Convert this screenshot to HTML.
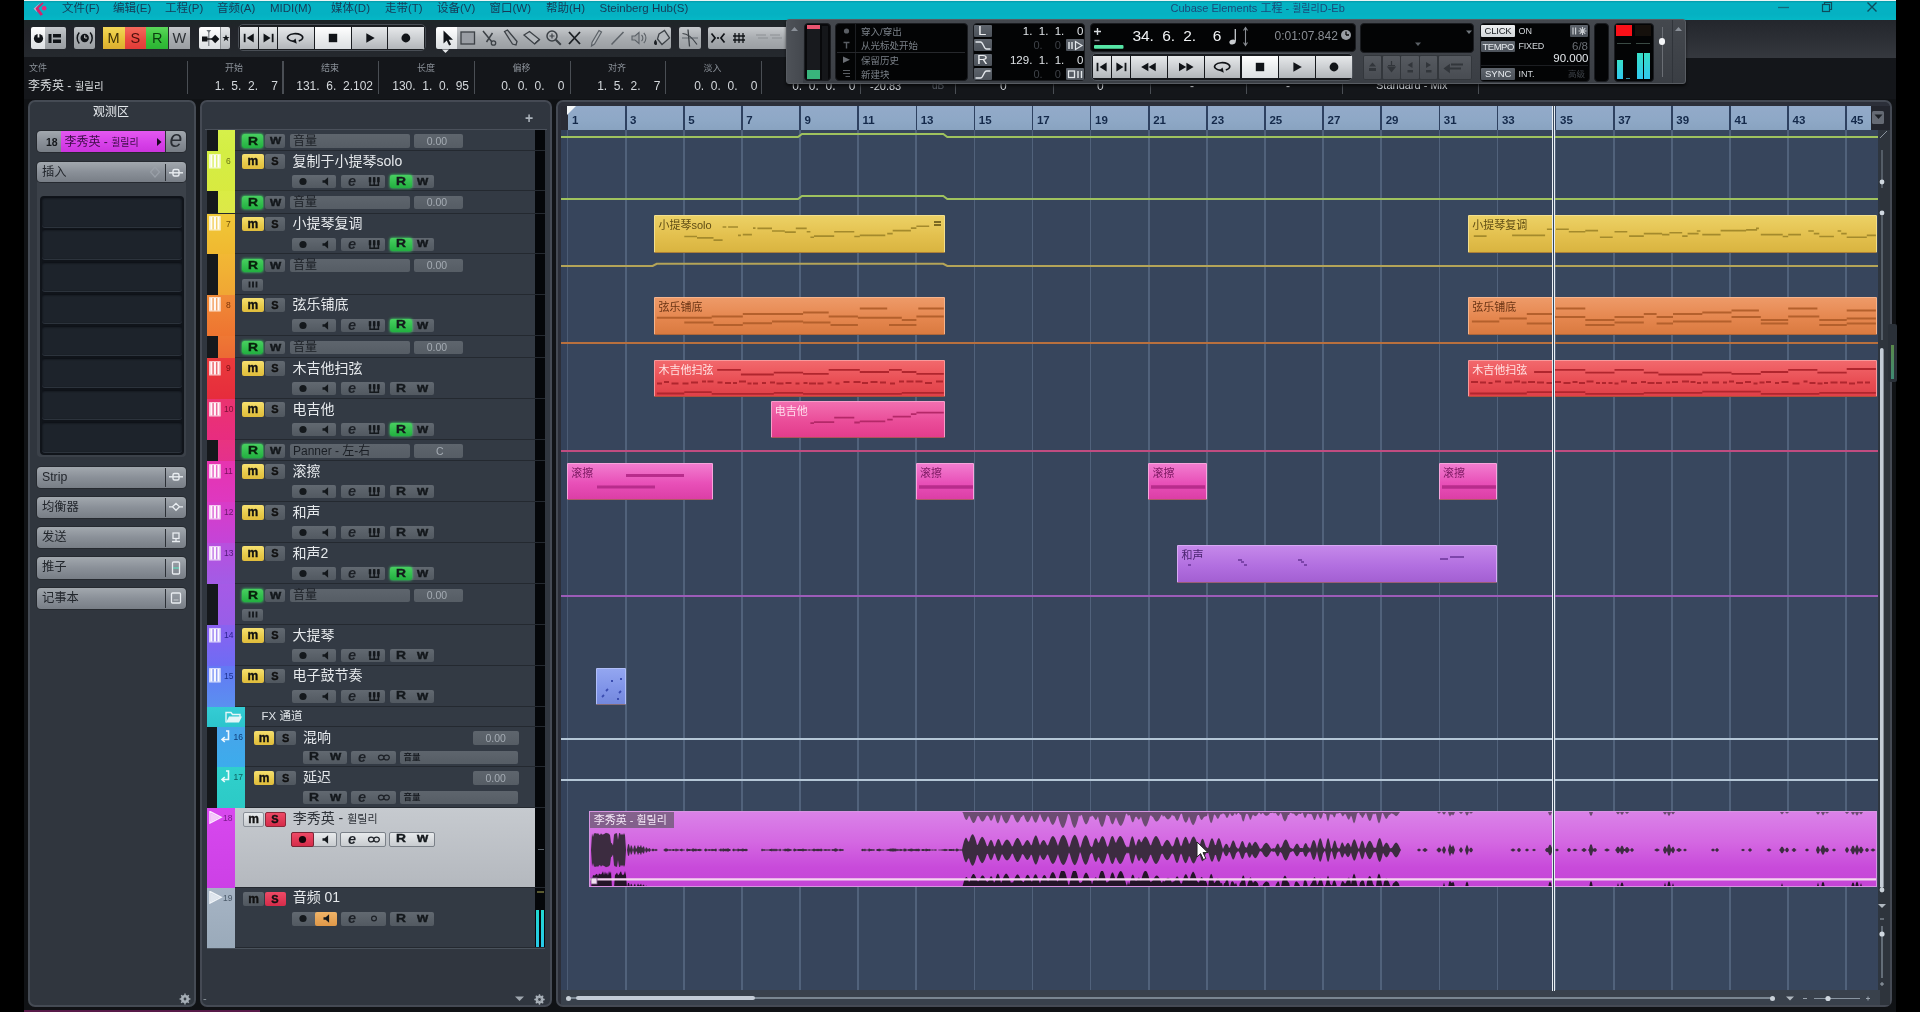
<!DOCTYPE html><html lang="zh"><head><meta charset="utf-8"><title>Cubase Elements 工程</title><style>
*{box-sizing:border-box;margin:0;padding:0}
html,body{width:1920px;height:1012px;overflow:hidden;background:#000}
body{font-family:"Liberation Sans","Noto Sans CJK SC","Noto Sans CJK KR",sans-serif;font-size:12px;color:#d8dce0;position:relative}
#app{position:absolute;left:0;top:0;width:1920px;height:1012px;overflow:hidden;filter:blur(0.45px)}
#app div,#app svg{position:absolute}
.t{white-space:nowrap;line-height:1}
.b{border-radius:2px}
</style></head><body><div id="app">
<div style="left:24px;top:0px;width:1872px;height:1012px;background:#1c1f24"></div>
<div style="left:24px;top:0px;width:1872px;height:1px;background:#e8f4f4"></div>
<div style="left:24px;top:1px;width:1872px;height:18.5px;background:linear-gradient(#049aa8 0,#05b3c4 2px,#05b1c2 70%,#05b8c6)"></div>
<div style="left:24px;top:19.5px;width:1872px;height:38px;background:linear-gradient(#1e2628,#22242a 30%,#25292e)"></div>
<div style="left:24px;top:57px;width:1872px;height:42px;background:#14161a"></div>
<div style="left:24px;top:99px;width:1872px;height:913px;background:#101215"></div>
<div style="left:555.5px;top:100px;width:1336.5px;height:906.5px;background:#2c2f39;border-radius:7px;border:2px solid #454a54"></div>
<div style="left:561px;top:105.5px;width:1319px;height:899px;background:#38475e"></div>
<div style="left:561px;top:105.5px;width:6.5px;height:24.5px;background:#2a2c36"></div>
<div style="left:561px;top:130px;width:6.5px;height:860px;background:#34425a"></div>
<div style="left:561px;top:990px;width:1319px;height:14.5px;background:#39414c"></div>
<div style="left:567.5px;top:130px;width:58.12px;height:860px;background:rgba(18,28,46,0.035)"></div>
<div style="left:683.74px;top:130px;width:58.12px;height:860px;background:rgba(18,28,46,0.035)"></div>
<div style="left:799.98px;top:130px;width:58.12px;height:860px;background:rgba(18,28,46,0.035)"></div>
<div style="left:916.22px;top:130px;width:58.12px;height:860px;background:rgba(18,28,46,0.035)"></div>
<div style="left:1032.46px;top:130px;width:58.12px;height:860px;background:rgba(18,28,46,0.035)"></div>
<div style="left:1148.7px;top:130px;width:58.12px;height:860px;background:rgba(18,28,46,0.035)"></div>
<div style="left:1264.94px;top:130px;width:58.12px;height:860px;background:rgba(18,28,46,0.035)"></div>
<div style="left:1381.18px;top:130px;width:58.12px;height:860px;background:rgba(18,28,46,0.035)"></div>
<div style="left:1497.42px;top:130px;width:58.12px;height:860px;background:rgba(18,28,46,0.035)"></div>
<div style="left:1613.66px;top:130px;width:58.12px;height:860px;background:rgba(18,28,46,0.035)"></div>
<div style="left:1729.9px;top:130px;width:58.12px;height:860px;background:rgba(18,28,46,0.035)"></div>
<div style="left:1846.14px;top:130px;width:31.86px;height:860px;background:rgba(18,28,46,0.035)"></div>
<div style="left:624.82px;top:130px;width:1.7px;height:860px;background:#51627b"></div>
<div style="left:682.94px;top:130px;width:1.7px;height:860px;background:#51627b"></div>
<div style="left:741.06px;top:130px;width:1.7px;height:860px;background:#51627b"></div>
<div style="left:799.18px;top:130px;width:1.7px;height:860px;background:#51627b"></div>
<div style="left:857.3px;top:130px;width:1.7px;height:860px;background:#51627b"></div>
<div style="left:915.42px;top:130px;width:1.7px;height:860px;background:#51627b"></div>
<div style="left:973.54px;top:130px;width:1.7px;height:860px;background:#51627b"></div>
<div style="left:1031.66px;top:130px;width:1.7px;height:860px;background:#51627b"></div>
<div style="left:1089.78px;top:130px;width:1.7px;height:860px;background:#51627b"></div>
<div style="left:1147.9px;top:130px;width:1.7px;height:860px;background:#51627b"></div>
<div style="left:1206.02px;top:130px;width:1.7px;height:860px;background:#51627b"></div>
<div style="left:1264.14px;top:130px;width:1.7px;height:860px;background:#51627b"></div>
<div style="left:1322.26px;top:130px;width:1.7px;height:860px;background:#51627b"></div>
<div style="left:1380.38px;top:130px;width:1.7px;height:860px;background:#51627b"></div>
<div style="left:1438.5px;top:130px;width:1.7px;height:860px;background:#51627b"></div>
<div style="left:1496.62px;top:130px;width:1.7px;height:860px;background:#51627b"></div>
<div style="left:1554.74px;top:130px;width:1.7px;height:860px;background:#51627b"></div>
<div style="left:1612.86px;top:130px;width:1.7px;height:860px;background:#51627b"></div>
<div style="left:1670.98px;top:130px;width:1.7px;height:860px;background:#51627b"></div>
<div style="left:1729.1px;top:130px;width:1.7px;height:860px;background:#51627b"></div>
<div style="left:1787.22px;top:130px;width:1.7px;height:860px;background:#51627b"></div>
<div style="left:1845.34px;top:130px;width:1.7px;height:860px;background:#51627b"></div>
<div style="left:567px;top:130px;width:1.4px;height:860px;background:#4c5c74"></div>
<div style="left:567.5px;top:105.5px;width:1303.5px;height:24.3px;background:linear-gradient(#93aac9,#8ea8c6 60%,#89a3c0)"></div>
<svg style="left:567px;top:105.5px" width="12" height="12"><path d="M0 0H9L0 9Z" fill="#f4f6f8"/></svg>
<div class="t" style="left:572px;top:114.5px;font-size:11.5px;font-weight:bold;color:#14294a;letter-spacing:0px">1</div>
<div style="left:624.92px;top:106px;width:1.6px;height:24px;background:#2e4160"></div>
<div class="t" style="left:630.12px;top:114.5px;font-size:11.5px;font-weight:bold;color:#14294a;letter-spacing:0px">3</div>
<div style="left:683.04px;top:106px;width:1.6px;height:24px;background:#2e4160"></div>
<div class="t" style="left:688.24px;top:114.5px;font-size:11.5px;font-weight:bold;color:#14294a;letter-spacing:0px">5</div>
<div style="left:741.16px;top:106px;width:1.6px;height:24px;background:#2e4160"></div>
<div class="t" style="left:746.36px;top:114.5px;font-size:11.5px;font-weight:bold;color:#14294a;letter-spacing:0px">7</div>
<div style="left:799.28px;top:106px;width:1.6px;height:24px;background:#2e4160"></div>
<div class="t" style="left:804.48px;top:114.5px;font-size:11.5px;font-weight:bold;color:#14294a;letter-spacing:0px">9</div>
<div style="left:857.4px;top:106px;width:1.6px;height:24px;background:#2e4160"></div>
<div class="t" style="left:862.6px;top:114.5px;font-size:11.5px;font-weight:bold;color:#14294a;letter-spacing:0px">11</div>
<div style="left:915.52px;top:106px;width:1.6px;height:24px;background:#2e4160"></div>
<div class="t" style="left:920.72px;top:114.5px;font-size:11.5px;font-weight:bold;color:#14294a;letter-spacing:0px">13</div>
<div style="left:973.64px;top:106px;width:1.6px;height:24px;background:#2e4160"></div>
<div class="t" style="left:978.84px;top:114.5px;font-size:11.5px;font-weight:bold;color:#14294a;letter-spacing:0px">15</div>
<div style="left:1031.76px;top:106px;width:1.6px;height:24px;background:#2e4160"></div>
<div class="t" style="left:1036.96px;top:114.5px;font-size:11.5px;font-weight:bold;color:#14294a;letter-spacing:0px">17</div>
<div style="left:1089.88px;top:106px;width:1.6px;height:24px;background:#2e4160"></div>
<div class="t" style="left:1095.08px;top:114.5px;font-size:11.5px;font-weight:bold;color:#14294a;letter-spacing:0px">19</div>
<div style="left:1148px;top:106px;width:1.6px;height:24px;background:#2e4160"></div>
<div class="t" style="left:1153.2px;top:114.5px;font-size:11.5px;font-weight:bold;color:#14294a;letter-spacing:0px">21</div>
<div style="left:1206.12px;top:106px;width:1.6px;height:24px;background:#2e4160"></div>
<div class="t" style="left:1211.32px;top:114.5px;font-size:11.5px;font-weight:bold;color:#14294a;letter-spacing:0px">23</div>
<div style="left:1264.24px;top:106px;width:1.6px;height:24px;background:#2e4160"></div>
<div class="t" style="left:1269.44px;top:114.5px;font-size:11.5px;font-weight:bold;color:#14294a;letter-spacing:0px">25</div>
<div style="left:1322.36px;top:106px;width:1.6px;height:24px;background:#2e4160"></div>
<div class="t" style="left:1327.56px;top:114.5px;font-size:11.5px;font-weight:bold;color:#14294a;letter-spacing:0px">27</div>
<div style="left:1380.48px;top:106px;width:1.6px;height:24px;background:#2e4160"></div>
<div class="t" style="left:1385.68px;top:114.5px;font-size:11.5px;font-weight:bold;color:#14294a;letter-spacing:0px">29</div>
<div style="left:1438.6px;top:106px;width:1.6px;height:24px;background:#2e4160"></div>
<div class="t" style="left:1443.8px;top:114.5px;font-size:11.5px;font-weight:bold;color:#14294a;letter-spacing:0px">31</div>
<div style="left:1496.72px;top:106px;width:1.6px;height:24px;background:#2e4160"></div>
<div class="t" style="left:1501.92px;top:114.5px;font-size:11.5px;font-weight:bold;color:#14294a;letter-spacing:0px">33</div>
<div style="left:1554.84px;top:106px;width:1.6px;height:24px;background:#2e4160"></div>
<div class="t" style="left:1560.04px;top:114.5px;font-size:11.5px;font-weight:bold;color:#14294a;letter-spacing:0px">35</div>
<div style="left:1612.96px;top:106px;width:1.6px;height:24px;background:#2e4160"></div>
<div class="t" style="left:1618.16px;top:114.5px;font-size:11.5px;font-weight:bold;color:#14294a;letter-spacing:0px">37</div>
<div style="left:1671.08px;top:106px;width:1.6px;height:24px;background:#2e4160"></div>
<div class="t" style="left:1676.28px;top:114.5px;font-size:11.5px;font-weight:bold;color:#14294a;letter-spacing:0px">39</div>
<div style="left:1729.2px;top:106px;width:1.6px;height:24px;background:#2e4160"></div>
<div class="t" style="left:1734.4px;top:114.5px;font-size:11.5px;font-weight:bold;color:#14294a;letter-spacing:0px">41</div>
<div style="left:1787.32px;top:106px;width:1.6px;height:24px;background:#2e4160"></div>
<div class="t" style="left:1792.52px;top:114.5px;font-size:11.5px;font-weight:bold;color:#14294a;letter-spacing:0px">43</div>
<div style="left:1845.44px;top:106px;width:1.6px;height:24px;background:#2e4160"></div>
<div class="t" style="left:1850.64px;top:114.5px;font-size:11.5px;font-weight:bold;color:#14294a;letter-spacing:0px">45</div>
<div style="left:1871px;top:105.5px;width:18.5px;height:24.5px;background:#23252d"></div>
<div style="left:1872px;top:110.5px;width:12px;height:13.5px;background:#656a74;border-radius:1.5px"></div>
<svg style="left:1873.5px;top:114px" width="10" height="7"><path d="M0.5 0.5H8.5L4.5 5Z" fill="#1c2026"/></svg>
<svg style="left:561px;top:131px" width="1317" height="12"><path d="M0 6H236.98L240.98 3H382.28L386.28 6H1317" fill="none" stroke="#9fc25e" stroke-width="2"/></svg>
<svg style="left:561px;top:193px" width="1317" height="12"><path d="M0 6H236.98L240.98 3H382.28L386.28 6H1317" fill="none" stroke="#9fc25e" stroke-width="2"/></svg>
<svg style="left:561px;top:259.5px" width="1317" height="12"><path d="M0 6H91.68L95.68 3.8H382.28L386.28 6H1317" fill="none" stroke="#b4a458" stroke-width="2"/></svg>
<div style="left:561px;top:342px;width:1317px;height:2px;background:#b8703e"></div>
<div style="left:561px;top:450px;width:1317px;height:2px;background:#c04c80"></div>
<div style="left:561px;top:594.5px;width:1317px;height:2px;background:#9c5cb8"></div>
<div style="left:561px;top:737.5px;width:1317px;height:2.4px;background:#b4c6d6"></div>
<div style="left:561px;top:778.5px;width:1317px;height:2.4px;background:#b4c6d6"></div>
<div style="left:654.28px;top:215px;width:291px;height:37.5px;background:linear-gradient(#ecd165,#e3c04e 55%,#d9b440);border:1px solid #f3df8c;border-bottom-color:rgba(120,60,20,0.55);border-radius:1px;overflow:hidden"><svg style="left:0;top:0" width="290.6" height="37.5"><path d="M29.3 20.5H42.0M42.0 21.9H58.5M58.5 24.1H67.6M67.6 11.0H71.3M73.1 11.0H83.0M83.0 19.4H85.9M87.8 18.6H96.9M98.0 12.1H100.5M102.4 12.4H117.0M117.0 15.0H129.8M129.8 16.1H140.8M140.8 12.4H151.7M151.7 15.7H155.4M155.4 21.2H159.0M159.0 20.1H179.2M179.2 15.7H199.3M199.3 20.5H204.8M204.8 19.4H230.3M232.2 17.6H237.7M237.7 14.6H255.9M255.9 12.1H261.4M261.4 10.2H274.2" stroke="#a48a2c" stroke-width="1.6" fill="none"/><path d="M279 6h7M279 9h7" stroke="#5a4a10" stroke-width="1.3"/></svg><div class="t" style="left:3.2px;top:4px;font-size:11px;color:#5e4c14">小提琴solo</div></div>
<div style="left:1467.96px;top:215px;width:409.04px;height:37.5px;background:linear-gradient(#ecd165,#e3c04e 55%,#d9b440);border:1px solid #f3df8c;border-bottom-color:rgba(120,60,20,0.55);border-radius:1px;overflow:hidden"><svg style="left:0;top:0" width="408.64" height="37.5"><path d="M4.8 20.1H17.6M43.1 19.4H76.1M77.9 13.2H85.2M87.0 13.2H99.8M99.8 15.7H116.3M116.3 14.6H129.1M130.9 21.2H143.7M145.5 15.7H158.3M160.1 20.1H174.8M174.8 17.6H193.1M193.1 18.6H200.4M200.4 16.8H213.2M213.2 20.1H218.6M218.6 17.6H229.6M227.8 15.0H231.4M233.3 18.6H251.6M251.6 14.6H277.1M277.1 13.9H288.1M287.0 12.4H289.9M291.8 18.6H313.7M313.7 20.5H319.2M319.2 18.6H332.0M339.3 15.0H344.8M344.8 17.6H350.3M350.3 20.5H364.9M368.6 15.0H372.2M372.2 17.6H377.7M377.7 21.2H397.8M397.8 19.4H406.9" stroke="#a48a2c" stroke-width="1.6" fill="none"/></svg><div class="t" style="left:3.2px;top:4px;font-size:11px;color:#5e4c14">小提琴复调</div></div>
<div style="left:654.28px;top:297px;width:291px;height:37.5px;background:linear-gradient(#ee9a68,#e5874f 55%,#da7a40);border:1px solid #f6b48c;border-bottom-color:rgba(120,60,20,0.55);border-radius:1px;overflow:hidden"><svg style="left:0;top:0" width="290.6" height="37.5"><path d="M204.8 10.6H232.2M263.3 10.6H288.8M1.8 19.7H56.7M56.7 18.6H87.8M87.8 16.1H148.1M148.1 14.6H173.7M173.7 18.6H202.9M202.9 19.7H246.8M246.8 21.9H261.4M261.4 18.6H288.8M29.3 24.5H58.5M58.5 27.1H87.8M87.8 25.2H117.0M117.0 23.4H148.1M148.1 24.5H175.5M175.5 27.1H202.9M234.0 27.1H261.4" stroke="#b4602c" stroke-width="2" fill="none"/></svg><div class="t" style="left:3.2px;top:4px;font-size:11px;color:#6a3414">弦乐铺底</div></div>
<div style="left:1467.96px;top:297px;width:409.04px;height:37.5px;background:linear-gradient(#ee9a68,#e5874f 55%,#da7a40);border:1px solid #f6b48c;border-bottom-color:rgba(120,60,20,0.55);border-radius:1px;overflow:hidden"><svg style="left:0;top:0" width="408.64" height="37.5"><path d="M87.0 10.6H116.3M262.5 12.4H289.9M319.2 10.6H348.4M377.7 12.4H406.9M2.9 23.4H30.3M30.3 20.5H57.8M57.8 16.1H83.4M83.4 19.0H116.3M116.3 21.9H145.5M145.5 19.0H174.8M174.8 16.1H187.6M187.6 19.0H204.0M204.0 16.1H233.3M233.3 14.6H262.5M262.5 19.0H291.8M291.8 21.9H319.2M319.2 18.6H350.3M350.3 21.9H377.7M377.7 20.5H406.9M57.8 25.6H83.4M116.3 27.1H145.5M145.5 24.5H174.8M187.6 25.6H204.0M204.0 23.4H262.5M291.8 25.6H319.2M350.3 27.1H377.7M377.7 25.6H406.9" stroke="#b4602c" stroke-width="2" fill="none"/></svg><div class="t" style="left:3.2px;top:4px;font-size:11px;color:#6a3414">弦乐铺底</div></div>
<div style="left:654.28px;top:359.5px;width:291px;height:37.5px;background:linear-gradient(#f2686c,#e94f55 55%,#df4048);border:1px solid #f8989a;border-bottom-color:rgba(120,60,20,0.55);border-radius:1px;overflow:hidden"><svg style="left:0;top:0" width="290.6" height="37.5"><path d="M62.2 8.8H85.9M85.9 13.5H118.8M118.8 11.7H148.1M148.1 12.8H173.7M173.7 8.8H204.8M204.8 11.0H234.0M234.0 8.8H246.8M246.8 11.0H261.4M261.4 12.8H288.8M1.8 32.5H29.3M29.3 31.1H56.7M56.7 32.9H118.8M118.8 31.8H148.1M148.1 32.9H246.8M246.8 31.8H288.8" stroke="#b0262e" stroke-width="1.8" fill="none"/><path d="M2.0 22.5h5M9.0 21.1h5M16.5 22.5h7M27.5 22.5h6M36.0 21.5h7M47.0 20.5h4M52.5 20.5h6M62.5 21.5h5M70.0 22.1h6M78.0 22.1h4M84.0 20.5h7M92.5 22.5h4M98.0 22.5h5M107.0 22.1h4M115.0 21.5h5M121.5 22.5h7M130.5 22.1h6M140.5 22.5h4M148.5 22.1h4M154.0 22.5h7M162.5 22.5h6M172.5 21.5h4M180.5 22.5h4M188.5 21.1h6M198.5 21.1h7M207.0 22.1h6M215.5 21.1h7M225.0 21.5h6M235.0 22.5h5M244.0 20.5h5M251.5 20.5h7M260.5 20.5h7M270.0 22.1h7M281.0 20.5h7" stroke="#b0262e" stroke-width="2" fill="none"/></svg><div class="t" style="left:3.2px;top:4px;font-size:11px;color:#ffe2e2">木吉他扫弦</div></div>
<div style="left:1467.96px;top:359.5px;width:409.04px;height:37.5px;background:linear-gradient(#f2686c,#e94f55 55%,#df4048);border:1px solid #f8989a;border-bottom-color:rgba(120,60,20,0.55);border-radius:1px;overflow:hidden"><svg style="left:0;top:0" width="408.64" height="37.5"><path d="M65.1 11.0H83.4M83.4 8.8H116.3M116.3 11.7H145.5M145.5 8.8H174.8M174.8 11.7H189.4M189.4 13.5H233.3M233.3 11.7H262.5M262.5 12.8H291.8M291.8 11.0H319.2M319.2 8.8H348.4M348.4 11.7H377.7M377.7 8.0H406.9M1.1 32.5H57.8M57.8 31.1H116.3M116.3 32.9H174.8M174.8 31.8H233.3M233.3 30.7H291.8M291.8 32.9H350.3M350.3 31.8H406.9" stroke="#b0262e" stroke-width="1.8" fill="none"/><path d="M2.0 21.1h7M11.0 21.5h6M19.5 22.1h4M26.0 20.5h6M36.0 21.5h7M45.0 20.5h6M52.5 21.5h5M59.0 21.1h7M68.0 21.5h7M77.5 22.1h6M86.0 21.1h6M94.5 22.1h7M103.5 21.1h5M110.0 22.1h6M117.5 20.5h7M127.0 22.1h4M133.0 22.1h4M139.5 22.1h4M145.5 22.5h4M152.0 20.5h6M162.0 22.1h6M172.0 21.1h5M178.5 22.1h7M187.0 22.1h6M197.0 21.5h4M203.0 21.1h6M213.0 20.5h7M221.5 21.1h5M228.0 22.1h4M234.0 21.5h5M243.0 21.5h7M254.0 21.5h4M260.0 20.5h5M267.0 22.1h7M276.0 21.1h6M284.5 22.5h4M290.5 21.5h5M297.0 21.1h5M306.0 22.1h4M312.5 21.1h7M323.5 22.5h7M334.5 20.5h4M340.5 22.1h6M348.5 22.5h5M355.0 22.1h4M361.5 21.5h7M371.0 21.5h7M380.0 22.5h6M388.0 21.5h6M396.0 21.5h5" stroke="#b0262e" stroke-width="2" fill="none"/></svg><div class="t" style="left:3.2px;top:4px;font-size:11px;color:#ffe2e2">木吉他扫弦</div></div>
<div style="left:770.52px;top:400.5px;width:174.76px;height:37px;background:linear-gradient(#f26fb0,#ea4d99 55%,#e23c8c);border:1px solid #f89cc8;border-bottom-color:rgba(120,60,20,0.55);border-radius:1px;overflow:hidden"><svg style="left:0;top:0" width="174.36" height="37"><path d="M38.4 21.2H42.0M42.0 20.1H62.2M62.2 15.7H82.3M82.3 20.5H87.8M87.8 19.4H113.3M115.2 17.6H120.7M120.7 14.6H138.9M138.9 12.1H144.4M144.4 10.6H171.8" stroke="#b42868" stroke-width="1.8" fill="none"/></svg><div class="t" style="left:3.2px;top:4px;font-size:11px;color:#ffe0ee">电吉他</div></div>
<div style="left:567.1px;top:462.5px;width:145.7px;height:37.5px;background:linear-gradient(#f27ccf,#e850b8 55%,#dc3ea6);border:1px solid #f8a4dc;border-bottom-color:rgba(120,60,20,0.55);border-radius:1px;overflow:hidden"><svg style="left:0;top:0" width="145.3" height="37.5"><path d="M58 11.5h58M29 23h58" stroke="#b82c8c" stroke-width="3" fill="none"/></svg><div class="t" style="left:3.2px;top:4px;font-size:11px;color:#7a1860">滚擦</div></div>
<div style="left:915.82px;top:462.5px;width:58.52px;height:37.5px;background:linear-gradient(#f27ccf,#e850b8 55%,#dc3ea6);border:1px solid #f8a4dc;border-bottom-color:rgba(120,60,20,0.55);border-radius:1px;overflow:hidden"><svg style="left:0;top:0" width="58.12" height="37.5"><path d="M2 23h54.12" stroke="#b82c8c" stroke-width="3.5" fill="none"/></svg><div class="t" style="left:3.2px;top:4px;font-size:11px;color:#7a1860">滚擦</div></div>
<div style="left:1148.3px;top:462.5px;width:58.52px;height:37.5px;background:linear-gradient(#f27ccf,#e850b8 55%,#dc3ea6);border:1px solid #f8a4dc;border-bottom-color:rgba(120,60,20,0.55);border-radius:1px;overflow:hidden"><svg style="left:0;top:0" width="58.12" height="37.5"><path d="M2 23h54.12" stroke="#b82c8c" stroke-width="3.5" fill="none"/></svg><div class="t" style="left:3.2px;top:4px;font-size:11px;color:#7a1860">滚擦</div></div>
<div style="left:1438.9px;top:462.5px;width:58.52px;height:37.5px;background:linear-gradient(#f27ccf,#e850b8 55%,#dc3ea6);border:1px solid #f8a4dc;border-bottom-color:rgba(120,60,20,0.55);border-radius:1px;overflow:hidden"><svg style="left:0;top:0" width="58.12" height="37.5"><path d="M2 23h54.12" stroke="#b82c8c" stroke-width="3.5" fill="none"/></svg><div class="t" style="left:3.2px;top:4px;font-size:11px;color:#7a1860">滚擦</div></div>
<div style="left:1177.36px;top:545px;width:320.06px;height:37.5px;background:linear-gradient(#c588ea,#b26fe0 55%,#a35fd2);border:1px solid #d8a8f4;border-bottom-color:rgba(120,60,20,0.55);border-radius:1px;overflow:hidden"><svg style="left:0;top:0" width="319.66" height="37.5"><path d="M10 19h3M60 14h4M63 16h3M66 19h3M120 14h4M123 16h3M126 19h3M262 13h8M272 11h14" stroke="#6a3498" stroke-width="1.6" fill="none"/></svg><div class="t" style="left:3.2px;top:4px;font-size:11px;color:#4a2470">和声</div></div>
<div style="left:596.16px;top:668px;width:29.46px;height:37px;background:linear-gradient(#93a6f0,#8094e8 55%,#7488dc);border:1px solid #b0bef8;border-bottom-color:rgba(120,60,20,0.55);border-radius:1px;overflow:hidden"><svg style="left:0;top:0" width="29.06" height="37"><path d="M14 12h2M23 10h2M9 22l2-2M5 28l2-2M22 24l2-2M20 30h2" stroke="#3a4cb0" stroke-width="1.8" fill="none"/></svg></div>
<div style="left:588.7px;top:810.5px;width:1288.3px;height:76px;background:linear-gradient(#da82e8,#d468e2 40%,#c84ada 75%,#c444d6);border:1px solid #d894e2;overflow:hidden"><svg style="left:0;top:0" width="1288.3" height="76"><path d="M0 38.0 1 38.0 2 21.4 3 25.1 4 21.3 5 21.5 6 20.9 7 21.9 8 20.9 9 22.4 10 23.1 11 21.3 12 22.5 13 22.4 14 22.0 15 21.6 16 20.8 17 21.2 18 21.2 19 21.9 20 23.0 21 30.8 22 31.5 23 33.4 24 22.8 25 21.6 26 21.4 27 21.1 28 28.0 29 21.2 30 21.0 31 23.3 32 21.6 33 23.3 34 21.1 35 23.2 36 38.0 37 38.0 38 32.3 39 32.3 40 37.0 41 32.9 42 34.4 43 38.0 44 34.6 45 33.1 46 37.0 47 35.8 48 32.8 49 35.3 50 34.9 51 32.8 52 36.2 53 34.8 54 34.2 55 38.0 56 35.3 57 35.7 58 37.6 59 36.0 60 36.6 61 38.0 62 37.2 63 36.4 64 37.3 65 37.4 66 36.8 67 37.5 68 38.0 69 38.0 70 38.0 71 38.0 72 38.0 73 38.0 74 37.6 75 36.6 76 36.5 77 36.5 78 37.2 79 37.6 80 37.1 81 37.4 82 37.4 83 36.9 84 37.0 85 37.7 86 36.2 87 37.4 88 36.7 89 37.9 90 37.3 91 37.0 92 36.4 93 37.7 94 37.2 95 37.9 96 38.0 97 36.3 98 37.0 99 36.9 100 36.9 101 37.4 102 36.9 103 36.3 104 36.7 105 36.9 106 36.4 107 37.4 108 37.1 109 36.9 110 36.7 111 37.2 112 37.7 113 38.0 114 38.0 115 36.7 116 36.5 117 37.5 118 37.4 119 36.9 120 37.3 121 37.5 122 36.7 123 37.3 124 37.1 125 37.2 126 36.2 127 38.0 128 38.0 129 37.6 130 37.3 131 36.2 132 37.6 133 36.2 134 36.8 135 37.0 136 36.6 137 37.0 138 36.1 139 37.0 140 37.0 141 38.0 142 38.0 143 37.0 144 36.5 145 37.8 146 37.0 147 37.7 148 36.3 149 37.3 150 37.1 151 37.2 152 36.7 153 36.6 154 37.0 155 36.9 156 36.8 157 37.1 158 38.0 159 38.0 160 38.0 161 38.0 162 38.0 163 38.0 164 38.0 165 38.0 166 38.0 167 38.0 168 38.0 169 38.0 170 38.0 171 38.0 172 36.5 173 37.4 174 36.9 175 37.6 176 37.4 177 37.6 178 37.6 179 37.6 180 37.1 181 37.1 182 36.5 183 37.4 184 36.6 185 37.6 186 36.6 187 37.4 188 37.3 189 37.7 190 36.6 191 37.6 192 38.0 193 37.3 194 37.4 195 36.5 196 37.0 197 36.7 198 36.5 199 36.8 200 37.1 201 37.3 202 37.7 203 38.0 204 36.4 205 36.7 206 37.3 207 37.6 208 37.1 209 37.1 210 37.1 211 37.1 212 37.0 213 36.4 214 37.0 215 37.2 216 37.0 217 37.5 218 37.8 219 37.1 220 37.5 221 37.5 222 37.5 223 36.9 224 36.5 225 36.9 226 37.3 227 36.8 228 37.0 229 36.7 230 37.2 231 36.5 232 37.0 233 38.0 234 37.3 235 37.2 236 37.0 237 37.6 238 37.3 239 37.2 240 37.3 241 38.0 242 37.3 243 37.1 244 37.2 245 36.3 246 36.4 247 36.8 248 37.5 249 37.5 250 36.8 251 37.1 252 37.3 253 37.1 254 38.0 255 38.0 256 38.0 257 38.0 258 38.0 259 38.0 260 38.0 261 38.0 262 38.0 263 38.0 264 38.0 265 38.0 266 38.0 267 38.0 268 38.0 269 38.0 270 38.0 271 38.0 272 37.0 273 36.7 274 37.4 275 36.6 276 37.8 277 37.2 278 37.8 279 36.3 280 36.9 281 37.2 282 36.9 283 37.6 284 37.1 285 38.0 286 38.0 287 37.1 288 37.1 289 36.7 290 36.8 291 37.5 292 37.6 293 37.6 294 37.5 295 38.0 296 37.6 297 37.4 298 36.9 299 37.3 300 36.6 301 36.8 302 36.5 303 36.6 304 36.4 305 36.7 306 36.5 307 37.6 308 36.8 309 37.8 310 36.8 311 37.3 312 37.0 313 37.9 314 36.3 315 37.0 316 36.4 317 38.0 318 36.9 319 37.2 320 36.7 321 36.7 322 36.4 323 37.2 324 37.1 325 37.3 326 36.8 327 37.0 328 36.7 329 36.8 330 37.5 331 38.0 332 37.1 333 37.0 334 36.9 335 37.6 336 36.4 337 36.9 338 37.1 339 37.2 340 36.7 341 38.0 342 37.3 343 37.7 344 37.5 345 37.6 346 37.2 347 38.0 348 38.0 349 37.4 350 37.7 351 37.4 352 37.6 353 37.2 354 37.3 355 36.8 356 37.2 357 37.1 358 38.0 359 36.9 360 36.9 361 37.0 362 37.0 363 37.2 364 36.7 365 38.0 366 36.7 367 36.5 368 37.1 369 37.4 370 37.4 371 37.3 372 37.6 373 33.1 374 29.3 375 26.7 376 25.4 377 26.7 378 29.3 379 29.8 380 26.6 381 24.1 382 22.5 383 22.3 384 23.8 385 26.1 386 29.2 387 33.1 388 32.6 389 29.7 390 27.4 391 25.7 392 24.8 393 25.3 394 26.7 395 28.8 396 31.5 397 34.3 398 34.1 399 31.0 400 28.8 401 27.8 402 28.8 403 31.0 404 34.2 405 34.6 406 31.5 407 28.8 408 27.1 409 27.3 410 29.1 411 32.0 412 34.0 413 32.7 414 30.7 415 29.1 416 28.0 417 27.4 418 27.9 419 28.9 420 30.5 421 32.4 422 34.6 423 34.1 424 31.3 425 29.0 426 27.3 427 26.1 428 26.1 429 27.2 430 28.9 431 31.1 432 33.7 433 33.7 434 32.4 435 30.4 436 28.9 437 28.0 438 28.3 439 29.5 440 31.2 441 33.5 442 32.6 443 28.8 444 25.9 445 23.9 446 23.3 447 24.8 448 27.3 449 30.7 450 33.5 451 31.1 452 29.3 453 28.2 454 28.1 455 29.2 456 30.9 457 33.2 458 33.6 459 31.0 460 28.3 461 26.1 462 24.6 463 23.9 464 24.7 465 26.3 466 28.5 467 31.2 468 34.1 469 30.7 470 27.9 471 25.6 472 23.9 473 22.9 474 23.2 475 24.6 476 26.6 477 29.1 478 32.2 479 35.5 480 33.5 481 29.9 482 27.0 483 24.7 484 23.2 485 22.8 486 24.1 487 26.1 488 28.8 489 32.2 490 35.9 491 34.0 492 30.2 493 27.2 494 24.9 495 23.4 496 23.2 497 24.6 498 26.8 499 29.7 500 33.3 501 34.4 502 35.3 503 32.8 504 29.1 505 26.7 506 25.9 507 27.6 508 30.6 509 30.8 510 27.9 511 25.7 512 24.3 513 24.2 514 25.6 515 27.8 516 30.7 517 34.3 518 34.8 519 32.1 520 28.4 521 25.6 522 23.9 523 24.3 524 26.3 525 29.4 526 31.1 527 28.5 528 26.4 529 24.8 530 23.9 531 24.2 532 25.5 533 27.3 534 29.7 535 32.5 536 33.9 537 35.6 538 34.3 539 35.6 540 30.3 541 26.5 542 24.3 543 24.8 544 27.7 545 31.9 546 34.1 547 30.6 548 28.0 549 26.7 550 28.0 551 30.6 552 29.6 553 27.3 554 25.7 555 24.6 556 24.7 557 25.9 558 27.7 559 30.0 560 32.8 561 33.5 562 30.6 563 28.1 564 26.1 565 24.6 566 23.9 567 24.5 568 25.9 569 27.8 570 30.2 571 33.2 572 34.6 573 33.7 574 31.5 575 29.7 576 28.4 577 27.7 578 28.2 579 29.3 580 30.9 581 33.0 582 34.4 583 34.3 584 32.3 585 28.6 586 26.0 587 24.8 588 26.1 589 28.8 590 32.6 591 34.4 592 32.8 593 29.3 594 26.7 595 25.0 596 24.8 597 26.4 598 28.8 599 32.1 600 31.1 601 28.3 602 26.1 603 24.7 604 24.6 605 25.9 606 27.9 607 30.6 608 34.0 609 34.7 610 32.5 611 29.1 612 26.9 613 26.8 614 28.9 615 32.2 616 34.9 617 35.4 618 36.3 619 33.3 620 29.8 621 27.3 622 26.1 623 27.3 624 29.8 625 33.3 626 32.7 627 29.2 628 26.8 629 25.9 630 27.4 631 30.2 632 34.1 633 36.9 634 34.7 635 32.8 636 31.7 637 32.1 638 33.6 639 35.9 640 35.4 641 32.8 642 29.9 643 28.3 644 29.0 645 31.2 646 34.6 647 35.8 648 36.8 649 36.2 650 33.8 651 30.8 652 29.0 653 29.3 654 31.4 655 34.7 656 35.6 657 35.6 658 32.6 659 30.6 660 30.3 661 32.1 662 34.3 663 32.3 664 30.7 665 29.8 666 30.0 667 31.2 668 32.9 669 35.1 670 36.9 671 36.5 672 35.9 673 34.1 674 32.5 675 31.4 676 30.7 677 31.0 678 31.9 679 33.3 680 35.1 681 36.5 682 37.1 683 36.1 684 36.6 685 36.2 686 34.3 687 32.1 688 31.5 689 33.1 690 36.0 691 35.6 692 34.2 693 31.4 694 29.3 695 27.8 696 27.5 697 28.6 698 30.5 699 33.0 700 35.6 701 36.1 702 36.4 703 37.1 704 35.8 705 33.7 706 32.2 707 31.5 708 32.3 709 33.9 710 36.1 711 35.9 712 35.9 713 36.3 714 33.3 715 31.4 716 31.0 717 32.6 718 35.2 719 35.6 720 36.7 721 34.2 722 30.8 723 28.5 724 27.9 725 29.6 726 32.5 727 36.7 728 31.9 729 28.2 730 26.1 731 27.0 732 30.0 733 34.5 734 36.0 735 37.2 736 33.0 737 28.2 738 25.7 739 27.4 740 31.7 741 36.6 742 36.6 743 32.6 744 29.2 745 28.3 746 30.8 747 35.1 748 35.9 749 36.8 750 35.5 751 32.2 752 30.3 753 30.9 754 33.4 755 35.0 756 32.9 757 31.4 758 30.8 759 31.6 760 33.2 761 35.5 762 31.8 763 29.0 764 27.3 765 27.8 766 30.0 767 33.3 768 36.0 769 36.9 770 33.9 771 30.5 772 28.5 773 29.4 774 32.1 775 36.4 776 35.2 777 32.5 778 30.5 779 29.1 780 28.7 781 29.8 782 31.6 783 34.0 784 36.1 785 35.4 786 36.0 787 31.9 788 28.6 789 26.4 790 26.1 791 28.0 792 31.0 793 35.3 794 33.5 795 31.8 796 30.7 797 30.8 798 32.0 799 33.8 800 36.3 801 36.3 802 35.7 803 34.3 804 32.5 805 31.2 806 30.5 807 31.0 808 32.2 809 34.0 810 36.2 811 38.0 812 38.0 813 38.0 814 38.0 815 38.0 816 38.0 817 38.0 818 38.0 819 38.0 820 38.0 821 38.0 822 38.0 823 38.0 824 38.0 825 38.0 826 38.0 827 38.0 828 36.9 829 36.5 830 36.9 831 38.0 832 38.0 833 37.4 834 36.4 835 36.0 836 36.4 837 37.4 838 38.0 839 38.0 840 38.0 841 38.0 842 38.0 843 38.0 844 38.0 845 38.0 846 38.0 847 37.5 848 36.1 849 35.5 850 36.1 851 37.5 852 38.0 853 35.5 854 34.0 855 35.5 856 38.0 857 38.0 858 38.0 859 34.4 860 31.5 861 34.4 862 34.9 863 33.0 864 34.9 865 38.0 866 38.0 867 38.0 868 38.0 869 38.0 870 36.2 871 35.0 872 36.2 873 38.0 874 38.0 875 38.0 876 34.8 877 32.5 878 34.8 879 38.0 880 36.3 881 35.5 882 36.3 883 38.0 884 38.0 885 38.0 886 38.0 887 38.0 888 38.0 889 38.0 890 38.0 891 38.0 892 38.0 893 38.0 894 38.0 895 38.0 896 38.0 897 38.0 898 38.0 899 38.0 900 38.0 901 38.0 902 38.0 903 38.0 904 38.0 905 38.0 906 38.0 907 38.0 908 38.0 909 38.0 910 38.0 911 38.0 912 38.0 913 38.0 914 38.0 915 38.0 916 38.0 917 38.0 918 38.0 919 38.0 920 38.0 921 37.7 922 36.8 923 36.5 924 36.8 925 37.7 926 38.0 927 38.0 928 36.6 929 36.0 930 36.6 931 38.0 932 38.0 933 38.0 934 38.0 935 38.0 936 36.9 937 36.5 938 36.9 939 38.0 940 38.0 941 38.0 942 38.0 943 37.3 944 36.8 945 37.3 946 38.0 947 38.0 948 38.0 949 38.0 950 38.0 951 38.0 952 38.0 953 38.0 954 38.0 955 38.0 956 36.6 957 35.8 958 36.0 959 33.5 960 32.5 961 33.5 962 36.0 963 38.0 964 38.0 965 38.0 966 37.2 967 36.5 968 37.2 969 38.0 970 38.0 971 38.0 972 38.0 973 38.0 974 38.0 975 38.0 976 38.0 977 38.0 978 36.5 979 36.0 980 36.5 981 38.0 982 38.0 983 37.7 984 37.0 985 36.8 986 37.0 987 37.7 988 38.0 989 38.0 990 38.0 991 38.0 992 37.5 993 36.4 994 36.0 995 36.4 996 37.5 997 38.0 998 38.0 999 36.8 1000 33.3 1001 32.0 1002 33.3 1003 36.8 1004 36.6 1005 36.0 1006 36.6 1007 38.0 1008 38.0 1009 38.0 1010 38.0 1011 38.0 1012 38.0 1013 38.0 1014 38.0 1015 37.6 1016 36.8 1017 36.5 1018 36.8 1019 37.6 1020 38.0 1021 38.0 1022 38.0 1023 38.0 1024 38.0 1025 38.0 1026 37.0 1027 35.2 1028 34.5 1029 35.2 1030 37.0 1031 34.5 1032 33.5 1033 34.5 1034 37.0 1035 36.9 1036 35.5 1037 35.0 1038 35.5 1039 36.9 1040 38.0 1041 36.8 1042 36.0 1043 36.8 1044 38.0 1045 38.0 1046 38.0 1047 38.0 1048 38.0 1049 38.0 1050 38.0 1051 38.0 1052 38.0 1053 38.0 1054 38.0 1055 38.0 1056 38.0 1057 38.0 1058 38.0 1059 38.0 1060 38.0 1061 38.0 1062 38.0 1063 38.0 1064 38.0 1065 37.5 1066 36.8 1067 36.5 1068 36.8 1069 37.5 1070 38.0 1071 38.0 1072 38.0 1073 38.0 1074 35.2 1075 34.0 1076 35.2 1077 37.0 1078 33.3 1079 32.0 1080 33.3 1081 37.0 1082 35.7 1083 34.5 1084 35.7 1085 38.0 1086 38.0 1087 37.3 1088 36.4 1089 36.0 1090 36.4 1091 37.3 1092 38.0 1093 38.0 1094 37.2 1095 36.5 1096 37.2 1097 38.0 1098 38.0 1099 38.0 1100 38.0 1101 38.0 1102 38.0 1103 38.0 1104 38.0 1105 38.0 1106 38.0 1107 38.0 1108 38.0 1109 38.0 1110 38.0 1111 38.0 1112 38.0 1113 38.0 1114 38.0 1115 38.0 1116 38.0 1117 38.0 1118 38.0 1119 38.0 1120 38.0 1121 38.0 1122 36.9 1123 36.5 1124 36.9 1125 38.0 1126 36.7 1127 36.0 1128 36.7 1129 38.0 1130 38.0 1131 38.0 1132 38.0 1133 38.0 1134 38.0 1135 38.0 1136 38.0 1137 38.0 1138 38.0 1139 38.0 1140 38.0 1141 38.0 1142 38.0 1143 38.0 1144 38.0 1145 38.0 1146 38.0 1147 38.0 1148 38.0 1149 38.0 1150 38.0 1151 38.0 1152 37.2 1153 36.8 1154 37.2 1155 38.0 1156 38.0 1157 38.0 1158 38.0 1159 36.7 1160 36.2 1161 36.7 1162 38.0 1163 38.0 1164 38.0 1165 38.0 1166 38.0 1167 38.0 1168 38.0 1169 38.0 1170 38.0 1171 38.0 1172 38.0 1173 38.0 1174 38.0 1175 38.0 1176 38.0 1177 37.8 1178 36.8 1179 36.5 1180 36.8 1181 37.8 1182 38.0 1183 38.0 1184 38.0 1185 38.0 1186 38.0 1187 38.0 1188 38.0 1189 38.0 1190 37.1 1191 35.2 1192 34.5 1193 35.2 1194 37.1 1195 38.0 1196 36.3 1197 35.5 1198 36.3 1199 38.0 1200 38.0 1201 38.0 1202 37.8 1203 36.5 1204 36.0 1205 36.5 1206 37.8 1207 38.0 1208 38.0 1209 38.0 1210 38.0 1211 38.0 1212 38.0 1213 38.0 1214 38.0 1215 38.0 1216 37.0 1217 36.5 1218 37.0 1219 38.0 1220 38.0 1221 38.0 1222 38.0 1223 38.0 1224 38.0 1225 38.0 1226 38.0 1227 35.3 1228 34.0 1229 35.3 1230 38.0 1231 36.4 1232 34.0 1233 33.0 1234 34.0 1235 36.4 1236 36.3 1237 35.5 1238 36.3 1239 38.0 1240 38.0 1241 38.0 1242 38.0 1243 37.1 1244 36.5 1245 37.1 1246 38.0 1247 38.0 1248 38.0 1249 38.0 1250 38.0 1251 38.0 1252 38.0 1253 38.0 1254 38.0 1255 38.0 1256 35.9 1257 35.0 1258 35.9 1259 38.0 1260 38.0 1261 37.1 1262 34.5 1263 33.5 1264 34.5 1265 37.1 1266 34.5 1267 32.5 1268 34.5 1269 37.3 1270 35.3 1271 34.5 1272 35.3 1273 37.3 1274 38.0 1275 38.0 1276 36.5 1277 36.0 1278 36.5 1279 38.0 1280 38.0 1281 37.8 1282 36.8 1283 36.5 1284 36.8 1285 37.8 1286 38.0 1287 38.0 1288 38.0 L1288 38.0 1287 38.0 1286 38.0 1285 38.2 1284 39.2 1283 39.5 1282 39.2 1281 38.2 1280 38.0 1279 38.0 1278 39.5 1277 40.0 1276 39.5 1275 38.0 1274 38.0 1273 38.7 1272 40.7 1271 41.5 1270 40.7 1269 38.7 1268 41.5 1267 43.5 1266 41.5 1265 38.9 1264 41.5 1263 42.5 1262 41.5 1261 38.9 1260 38.0 1259 38.0 1258 40.1 1257 41.0 1256 40.1 1255 38.0 1254 38.0 1253 38.0 1252 38.0 1251 38.0 1250 38.0 1249 38.0 1248 38.0 1247 38.0 1246 38.0 1245 38.9 1244 39.5 1243 38.9 1242 38.0 1241 38.0 1240 38.0 1239 38.0 1238 39.7 1237 40.5 1236 39.7 1235 39.6 1234 42.0 1233 43.0 1232 42.0 1231 39.6 1230 38.0 1229 40.7 1228 42.0 1227 40.7 1226 38.0 1225 38.0 1224 38.0 1223 38.0 1222 38.0 1221 38.0 1220 38.0 1219 38.0 1218 39.0 1217 39.5 1216 39.0 1215 38.0 1214 38.0 1213 38.0 1212 38.0 1211 38.0 1210 38.0 1209 38.0 1208 38.0 1207 38.0 1206 38.2 1205 39.5 1204 40.0 1203 39.5 1202 38.2 1201 38.0 1200 38.0 1199 38.0 1198 39.7 1197 40.5 1196 39.7 1195 38.0 1194 38.9 1193 40.8 1192 41.5 1191 40.8 1190 38.9 1189 38.0 1188 38.0 1187 38.0 1186 38.0 1185 38.0 1184 38.0 1183 38.0 1182 38.0 1181 38.2 1180 39.2 1179 39.5 1178 39.2 1177 38.2 1176 38.0 1175 38.0 1174 38.0 1173 38.0 1172 38.0 1171 38.0 1170 38.0 1169 38.0 1168 38.0 1167 38.0 1166 38.0 1165 38.0 1164 38.0 1163 38.0 1162 38.0 1161 39.3 1160 39.8 1159 39.3 1158 38.0 1157 38.0 1156 38.0 1155 38.0 1154 38.8 1153 39.2 1152 38.8 1151 38.0 1150 38.0 1149 38.0 1148 38.0 1147 38.0 1146 38.0 1145 38.0 1144 38.0 1143 38.0 1142 38.0 1141 38.0 1140 38.0 1139 38.0 1138 38.0 1137 38.0 1136 38.0 1135 38.0 1134 38.0 1133 38.0 1132 38.0 1131 38.0 1130 38.0 1129 38.0 1128 39.3 1127 40.0 1126 39.3 1125 38.0 1124 39.1 1123 39.5 1122 39.1 1121 38.0 1120 38.0 1119 38.0 1118 38.0 1117 38.0 1116 38.0 1115 38.0 1114 38.0 1113 38.0 1112 38.0 1111 38.0 1110 38.0 1109 38.0 1108 38.0 1107 38.0 1106 38.0 1105 38.0 1104 38.0 1103 38.0 1102 38.0 1101 38.0 1100 38.0 1099 38.0 1098 38.0 1097 38.0 1096 38.8 1095 39.5 1094 38.8 1093 38.0 1092 38.0 1091 38.7 1090 39.6 1089 40.0 1088 39.6 1087 38.7 1086 38.0 1085 38.0 1084 40.3 1083 41.5 1082 40.3 1081 39.0 1080 42.7 1079 44.0 1078 42.7 1077 39.0 1076 40.8 1075 42.0 1074 40.8 1073 38.0 1072 38.0 1071 38.0 1070 38.0 1069 38.5 1068 39.2 1067 39.5 1066 39.2 1065 38.5 1064 38.0 1063 38.0 1062 38.0 1061 38.0 1060 38.0 1059 38.0 1058 38.0 1057 38.0 1056 38.0 1055 38.0 1054 38.0 1053 38.0 1052 38.0 1051 38.0 1050 38.0 1049 38.0 1048 38.0 1047 38.0 1046 38.0 1045 38.0 1044 38.0 1043 39.2 1042 40.0 1041 39.2 1040 38.0 1039 39.1 1038 40.5 1037 41.0 1036 40.5 1035 39.1 1034 39.0 1033 41.5 1032 42.5 1031 41.5 1030 39.0 1029 40.8 1028 41.5 1027 40.8 1026 39.0 1025 38.0 1024 38.0 1023 38.0 1022 38.0 1021 38.0 1020 38.0 1019 38.4 1018 39.2 1017 39.5 1016 39.2 1015 38.4 1014 38.0 1013 38.0 1012 38.0 1011 38.0 1010 38.0 1009 38.0 1008 38.0 1007 38.0 1006 39.4 1005 40.0 1004 39.4 1003 39.2 1002 42.7 1001 44.0 1000 42.7 999 39.2 998 38.0 997 38.0 996 38.5 995 39.6 994 40.0 993 39.6 992 38.5 991 38.0 990 38.0 989 38.0 988 38.0 987 38.3 986 39.0 985 39.2 984 39.0 983 38.3 982 38.0 981 38.0 980 39.5 979 40.0 978 39.5 977 38.0 976 38.0 975 38.0 974 38.0 973 38.0 972 38.0 971 38.0 970 38.0 969 38.0 968 38.8 967 39.5 966 38.8 965 38.0 964 38.0 963 38.0 962 40.0 961 42.5 960 43.5 959 42.5 958 40.0 957 40.2 956 39.4 955 38.0 954 38.0 953 38.0 952 38.0 951 38.0 950 38.0 949 38.0 948 38.0 947 38.0 946 38.0 945 38.7 944 39.2 943 38.7 942 38.0 941 38.0 940 38.0 939 38.0 938 39.1 937 39.5 936 39.1 935 38.0 934 38.0 933 38.0 932 38.0 931 38.0 930 39.4 929 40.0 928 39.4 927 38.0 926 38.0 925 38.3 924 39.2 923 39.5 922 39.2 921 38.3 920 38.0 919 38.0 918 38.0 917 38.0 916 38.0 915 38.0 914 38.0 913 38.0 912 38.0 911 38.0 910 38.0 909 38.0 908 38.0 907 38.0 906 38.0 905 38.0 904 38.0 903 38.0 902 38.0 901 38.0 900 38.0 899 38.0 898 38.0 897 38.0 896 38.0 895 38.0 894 38.0 893 38.0 892 38.0 891 38.0 890 38.0 889 38.0 888 38.0 887 38.0 886 38.0 885 38.0 884 38.0 883 38.0 882 39.7 881 40.5 880 39.7 879 38.0 878 41.2 877 43.5 876 41.2 875 38.0 874 38.0 873 38.0 872 39.8 871 41.0 870 39.8 869 38.0 868 38.0 867 38.0 866 38.0 865 38.0 864 41.1 863 43.0 862 41.1 861 41.6 860 44.5 859 41.6 858 38.0 857 38.0 856 38.0 855 40.5 854 42.0 853 40.5 852 38.0 851 38.5 850 39.9 849 40.5 848 39.9 847 38.5 846 38.0 845 38.0 844 38.0 843 38.0 842 38.0 841 38.0 840 38.0 839 38.0 838 38.0 837 38.6 836 39.6 835 40.0 834 39.6 833 38.6 832 38.0 831 38.0 830 39.1 829 39.5 828 39.1 827 38.0 826 38.0 825 38.0 824 38.0 823 38.0 822 38.0 821 38.0 820 38.0 819 38.0 818 38.0 817 38.0 816 38.0 815 38.0 814 38.0 813 38.0 812 38.0 811 38.0 810 39.8 809 42.0 808 43.8 807 45.0 806 45.5 805 44.8 804 43.5 803 41.7 802 40.3 801 39.7 800 39.7 799 42.2 798 44.0 797 45.2 796 45.3 795 44.2 794 42.5 793 40.7 792 45.0 791 48.0 790 49.9 789 49.6 788 47.4 787 44.1 786 40.0 785 40.6 784 39.9 783 42.0 782 44.4 781 46.2 780 47.3 779 46.9 778 45.5 777 43.5 776 40.8 775 39.6 774 43.9 773 46.6 772 47.5 771 45.5 770 42.1 769 39.1 768 40.0 767 42.7 766 46.0 765 48.2 764 48.7 763 47.0 762 44.2 761 40.5 760 42.8 759 44.4 758 45.2 757 44.6 756 43.1 755 41.0 754 42.6 753 45.1 752 45.7 751 43.8 750 40.5 749 39.2 748 40.1 747 40.9 746 45.2 745 47.7 744 46.8 743 43.4 742 39.4 741 39.4 740 44.3 739 48.6 738 50.3 737 47.8 736 43.0 735 38.8 734 40.0 733 41.5 732 46.0 731 49.0 730 49.9 729 47.8 728 44.1 727 39.3 726 43.5 725 46.4 724 48.1 723 47.5 722 45.2 721 41.8 720 39.3 719 40.4 718 40.8 717 43.4 716 45.0 715 44.6 714 42.7 713 39.7 712 40.1 711 40.1 710 39.9 709 42.1 708 43.7 707 44.5 706 43.8 705 42.3 704 40.2 703 38.9 702 39.6 701 39.9 700 40.4 699 43.0 698 45.5 697 47.4 696 48.5 695 48.2 694 46.7 693 44.6 692 41.8 691 40.4 690 40.0 689 42.9 688 44.5 687 43.9 686 41.7 685 39.8 684 39.4 683 39.9 682 38.9 681 39.5 680 40.9 679 42.7 678 44.1 677 45.0 676 45.3 675 44.6 674 43.5 673 41.9 672 40.1 671 39.5 670 39.1 669 40.9 668 43.1 667 44.8 666 46.0 665 46.2 664 45.3 663 43.7 662 41.7 661 43.9 660 45.7 659 45.4 658 43.4 657 40.4 656 40.4 655 41.3 654 44.6 653 46.7 652 47.0 651 45.2 650 42.2 649 39.8 648 39.2 647 40.2 646 41.4 645 44.8 644 47.0 643 47.7 642 46.1 641 43.2 640 40.6 639 40.1 638 42.4 637 43.9 636 44.3 635 43.2 634 41.3 633 39.1 632 41.9 631 45.8 630 48.6 629 50.1 628 49.2 627 46.8 626 43.3 625 42.7 624 46.2 623 48.7 622 49.9 621 48.7 620 46.2 619 42.7 618 39.7 617 40.6 616 41.1 615 43.8 614 47.1 613 49.2 612 49.1 611 46.9 610 43.5 609 41.3 608 42.0 607 45.4 606 48.1 605 50.1 604 51.4 603 51.3 602 49.9 601 47.7 600 44.9 599 43.9 598 47.2 597 49.6 596 51.2 595 51.0 594 49.3 593 46.7 592 43.2 591 41.6 590 43.4 589 47.2 588 49.9 587 51.2 586 50.0 585 47.4 584 43.7 583 41.7 582 41.6 581 43.0 580 45.1 579 46.7 578 47.8 577 48.3 576 47.6 575 46.3 574 44.5 573 42.3 572 41.4 571 42.8 570 45.8 569 48.2 568 50.1 567 51.5 566 52.1 565 51.4 564 49.9 563 47.9 562 45.4 561 42.5 560 43.2 559 46.0 558 48.3 557 50.1 556 51.3 555 51.4 554 50.3 553 48.7 552 46.4 551 45.4 550 48.0 549 49.3 548 48.0 547 45.4 546 41.9 545 44.1 544 48.3 543 51.2 542 51.7 541 49.5 540 45.7 539 40.4 538 41.7 537 40.4 536 42.1 535 43.5 534 46.3 533 48.7 532 50.5 531 51.8 530 52.1 529 51.2 528 49.6 527 47.5 526 44.9 525 46.6 524 49.7 523 51.7 522 52.1 521 50.4 520 47.6 519 43.9 518 41.2 517 41.7 516 45.3 515 48.2 514 50.4 513 51.8 512 51.7 511 50.3 510 48.1 509 45.2 508 45.4 507 48.4 506 50.1 505 49.3 504 46.9 503 43.2 502 40.7 501 41.6 500 42.7 499 46.3 498 49.2 497 51.4 496 52.8 495 52.6 494 51.1 493 48.8 492 45.8 491 42.0 490 40.1 489 43.8 488 47.2 487 49.9 486 51.9 485 53.2 484 52.8 483 51.3 482 49.0 481 46.1 480 42.5 479 40.5 478 43.8 477 46.9 476 49.4 475 51.4 474 52.8 473 53.1 472 52.1 471 50.4 470 48.1 469 45.3 468 41.9 467 44.8 466 47.5 465 49.7 464 51.3 463 52.1 462 51.4 461 49.9 460 47.7 459 45.0 458 42.4 457 42.8 456 45.1 455 46.8 454 47.9 453 47.8 452 46.7 451 44.9 450 42.5 449 45.3 448 48.7 447 51.2 446 52.7 445 52.1 444 50.1 443 47.2 442 43.4 441 42.5 440 44.8 439 46.5 438 47.7 437 48.0 436 47.1 435 45.6 434 43.6 433 42.3 432 42.3 431 44.9 430 47.1 429 48.8 428 49.9 427 49.9 426 48.7 425 47.0 424 44.7 423 41.9 422 41.4 421 43.6 420 45.5 419 47.1 418 48.1 417 48.6 416 48.0 415 46.9 414 45.3 413 43.3 412 42.0 411 44.0 410 46.9 409 48.7 408 48.9 407 47.2 406 44.5 405 41.4 404 41.8 403 45.0 402 47.2 401 48.2 400 47.2 399 45.0 398 41.9 397 41.7 396 44.5 395 47.2 394 49.3 393 50.7 392 51.2 391 50.3 390 48.6 389 46.3 388 43.4 387 42.9 386 46.8 385 49.9 384 52.2 383 53.7 382 53.5 381 51.9 380 49.4 379 46.2 378 46.7 377 49.3 376 50.6 375 49.3 374 46.7 373 42.9 372 38.4 371 38.7 370 38.6 369 38.6 368 38.9 367 39.5 366 39.3 365 38.0 364 39.3 363 38.8 362 39.0 361 39.0 360 39.1 359 39.1 358 38.0 357 38.9 356 38.8 355 39.2 354 38.7 353 38.8 352 38.4 351 38.6 350 38.3 349 38.6 348 38.0 347 38.0 346 38.8 345 38.4 344 38.5 343 38.3 342 38.7 341 38.0 340 39.3 339 38.8 338 38.9 337 39.1 336 39.6 335 38.4 334 39.1 333 39.0 332 38.9 331 38.0 330 38.5 329 39.2 328 39.3 327 39.0 326 39.2 325 38.7 324 38.9 323 38.8 322 39.6 321 39.3 320 39.3 319 38.8 318 39.1 317 38.0 316 39.6 315 39.0 314 39.7 313 38.1 312 39.0 311 38.7 310 39.2 309 38.2 308 39.2 307 38.4 306 39.5 305 39.3 304 39.6 303 39.4 302 39.5 301 39.2 300 39.4 299 38.7 298 39.1 297 38.6 296 38.4 295 38.0 294 38.5 293 38.4 292 38.4 291 38.5 290 39.2 289 39.3 288 38.9 287 38.9 286 38.0 285 38.0 284 38.9 283 38.4 282 39.1 281 38.8 280 39.1 279 39.7 278 38.2 277 38.8 276 38.2 275 39.4 274 38.6 273 39.3 272 39.0 271 38.0 270 38.0 269 38.0 268 38.0 267 38.0 266 38.0 265 38.0 264 38.0 263 38.0 262 38.0 261 38.0 260 38.0 259 38.0 258 38.0 257 38.0 256 38.0 255 38.0 254 38.0 253 38.9 252 38.7 251 38.9 250 39.2 249 38.5 248 38.5 247 39.2 246 39.6 245 39.7 244 38.8 243 38.9 242 38.7 241 38.0 240 38.7 239 38.8 238 38.7 237 38.4 236 39.0 235 38.8 234 38.7 233 38.0 232 39.0 231 39.5 230 38.8 229 39.3 228 39.0 227 39.2 226 38.7 225 39.1 224 39.5 223 39.1 222 38.5 221 38.5 220 38.5 219 38.9 218 38.2 217 38.5 216 39.0 215 38.8 214 39.0 213 39.6 212 39.0 211 38.9 210 38.9 209 38.9 208 38.9 207 38.4 206 38.7 205 39.3 204 39.6 203 38.0 202 38.3 201 38.7 200 38.9 199 39.2 198 39.5 197 39.3 196 39.0 195 39.5 194 38.6 193 38.7 192 38.0 191 38.4 190 39.4 189 38.3 188 38.7 187 38.6 186 39.4 185 38.4 184 39.4 183 38.6 182 39.5 181 38.9 180 38.9 179 38.4 178 38.4 177 38.4 176 38.6 175 38.4 174 39.1 173 38.6 172 39.5 171 38.0 170 38.0 169 38.0 168 38.0 167 38.0 166 38.0 165 38.0 164 38.0 163 38.0 162 38.0 161 38.0 160 38.0 159 38.0 158 38.0 157 38.9 156 39.2 155 39.1 154 39.0 153 39.4 152 39.3 151 38.8 150 38.9 149 38.7 148 39.7 147 38.3 146 39.0 145 38.2 144 39.5 143 39.0 142 38.0 141 38.0 140 39.0 139 39.0 138 39.9 137 39.0 136 39.4 135 39.0 134 39.2 133 39.8 132 38.4 131 39.8 130 38.7 129 38.4 128 38.0 127 38.0 126 39.8 125 38.8 124 38.9 123 38.7 122 39.3 121 38.5 120 38.7 119 39.1 118 38.6 117 38.5 116 39.5 115 39.3 114 38.0 113 38.0 112 38.3 111 38.8 110 39.3 109 39.1 108 38.9 107 38.6 106 39.6 105 39.1 104 39.3 103 39.7 102 39.1 101 38.6 100 39.1 99 39.1 98 39.0 97 39.7 96 38.0 95 38.1 94 38.8 93 38.3 92 39.6 91 39.0 90 38.7 89 38.1 88 39.3 87 38.6 86 39.8 85 38.3 84 39.0 83 39.1 82 38.6 81 38.6 80 38.9 79 38.4 78 38.8 77 39.5 76 39.5 75 39.4 74 38.4 73 38.0 72 38.0 71 38.0 70 38.0 69 38.0 68 38.0 67 38.5 66 39.2 65 38.6 64 38.7 63 39.6 62 38.8 61 38.0 60 39.4 59 40.0 58 38.4 57 40.3 56 40.7 55 38.0 54 41.8 53 41.2 52 39.8 51 43.2 50 41.1 49 40.7 48 43.2 47 40.2 46 39.0 45 42.9 44 41.4 43 38.0 42 41.6 41 43.1 40 39.0 39 43.7 38 43.7 37 38.0 36 38.0 35 52.8 34 54.9 33 52.7 32 54.4 31 52.7 30 55.0 29 54.8 28 48.0 27 54.9 26 54.6 25 54.4 24 53.2 23 42.6 22 44.5 21 45.2 20 53.0 19 54.1 18 54.8 17 54.8 16 55.2 15 54.4 14 54.0 13 53.6 12 53.5 11 54.7 10 52.9 9 53.6 8 55.1 7 54.1 6 55.1 5 54.5 4 54.7 3 50.9 2 54.6 1 38.0 0 38.0Z" fill="#3c2c40"/><path d="M0 0 L0 0.0 L1 0.0 L2 0.0 L3 0.0 L4 0.0 L5 0.0 L6 0.0 L7 0.0 L8 0.0 L9 0.0 L10 0.0 L11 0.0 L12 0.0 L13 0.0 L14 0.0 L15 0.0 L16 0.0 L17 0.0 L18 0.0 L19 0.0 L20 0.0 L21 0.0 L22 0.0 L23 0.0 L24 0.0 L25 0.0 L26 0.0 L27 0.0 L28 0.0 L29 0.0 L30 0.0 L31 0.0 L32 0.0 L33 0.0 L34 0.0 L35 0.0 L36 0.0 L37 0.0 L38 0.0 L39 0.0 L40 0.0 L41 0.0 L42 0.0 L43 0.0 L44 0.0 L45 0.0 L46 0.0 L47 0.0 L48 0.0 L49 0.0 L50 0.0 L51 0.0 L52 0.0 L53 0.0 L54 0.0 L55 0.0 L56 0.0 L57 0.0 L58 0.0 L59 0.0 L60 0.0 L61 0.0 L62 0.0 L63 0.0 L64 0.0 L65 0.0 L66 0.0 L67 0.0 L68 0.0 L69 0.0 L70 0.0 L71 0.0 L72 0.0 L73 0.0 L74 0.0 L75 0.0 L76 0.0 L77 0.0 L78 0.0 L79 0.0 L80 0.0 L81 0.0 L82 0.0 L83 0.0 L84 0.0 L85 0.0 L86 0.0 L87 0.0 L88 0.0 L89 0.0 L90 0.0 L91 0.0 L92 0.0 L93 0.0 L94 0.0 L95 0.0 L96 0.0 L97 0.0 L98 0.0 L99 0.0 L100 0.0 L101 0.0 L102 0.0 L103 0.0 L104 0.0 L105 0.0 L106 0.0 L107 0.0 L108 0.0 L109 0.0 L110 0.0 L111 0.0 L112 0.0 L113 0.0 L114 0.0 L115 0.0 L116 0.0 L117 0.0 L118 0.0 L119 0.0 L120 0.0 L121 0.0 L122 0.0 L123 0.0 L124 0.0 L125 0.0 L126 0.0 L127 0.0 L128 0.0 L129 0.0 L130 0.0 L131 0.0 L132 0.0 L133 0.0 L134 0.0 L135 0.0 L136 0.0 L137 0.0 L138 0.0 L139 0.0 L140 0.0 L141 0.0 L142 0.0 L143 0.0 L144 0.0 L145 0.0 L146 0.0 L147 0.0 L148 0.0 L149 0.0 L150 0.0 L151 0.0 L152 0.0 L153 0.0 L154 0.0 L155 0.0 L156 0.0 L157 0.0 L158 0.0 L159 0.0 L160 0.0 L161 0.0 L162 0.0 L163 0.0 L164 0.0 L165 0.0 L166 0.0 L167 0.0 L168 0.0 L169 0.0 L170 0.0 L171 0.0 L172 0.0 L173 0.0 L174 0.0 L175 0.0 L176 0.0 L177 0.0 L178 0.0 L179 0.0 L180 0.0 L181 0.0 L182 0.0 L183 0.0 L184 0.0 L185 0.0 L186 0.0 L187 0.0 L188 0.0 L189 0.0 L190 0.0 L191 0.0 L192 0.0 L193 0.0 L194 0.0 L195 0.0 L196 0.0 L197 0.0 L198 0.0 L199 0.0 L200 0.0 L201 0.0 L202 0.0 L203 0.0 L204 0.0 L205 0.0 L206 0.0 L207 0.0 L208 0.0 L209 0.0 L210 0.0 L211 0.0 L212 0.0 L213 0.0 L214 0.0 L215 0.0 L216 0.0 L217 0.0 L218 0.0 L219 0.0 L220 0.0 L221 0.0 L222 0.0 L223 0.0 L224 0.0 L225 0.0 L226 0.0 L227 0.0 L228 0.0 L229 0.0 L230 0.0 L231 0.0 L232 0.0 L233 0.0 L234 0.0 L235 0.0 L236 0.0 L237 0.0 L238 0.0 L239 0.0 L240 0.0 L241 0.0 L242 0.0 L243 0.0 L244 0.0 L245 0.0 L246 0.0 L247 0.0 L248 0.0 L249 0.0 L250 0.0 L251 0.0 L252 0.0 L253 0.0 L254 0.0 L255 0.0 L256 0.0 L257 0.0 L258 0.0 L259 0.0 L260 0.0 L261 0.0 L262 0.0 L263 0.0 L264 0.0 L265 0.0 L266 0.0 L267 0.0 L268 0.0 L269 0.0 L270 0.0 L271 0.0 L272 0.0 L273 0.0 L274 0.0 L275 0.0 L276 0.0 L277 0.0 L278 0.0 L279 0.0 L280 0.0 L281 0.0 L282 0.0 L283 0.0 L284 0.0 L285 0.0 L286 0.0 L287 0.0 L288 0.0 L289 0.0 L290 0.0 L291 0.0 L292 0.0 L293 0.0 L294 0.0 L295 0.0 L296 0.0 L297 0.0 L298 0.0 L299 0.0 L300 0.0 L301 0.0 L302 0.0 L303 0.0 L304 0.0 L305 0.0 L306 0.0 L307 0.0 L308 0.0 L309 0.0 L310 0.0 L311 0.0 L312 0.0 L313 0.0 L314 0.0 L315 0.0 L316 0.0 L317 0.0 L318 0.0 L319 0.0 L320 0.0 L321 0.0 L322 0.0 L323 0.0 L324 0.0 L325 0.0 L326 0.0 L327 0.0 L328 0.0 L329 0.0 L330 0.0 L331 0.0 L332 0.0 L333 0.0 L334 0.0 L335 0.0 L336 0.0 L337 0.0 L338 0.0 L339 0.0 L340 0.0 L341 0.0 L342 0.0 L343 0.0 L344 0.0 L345 0.0 L346 0.0 L347 0.0 L348 0.0 L349 0.0 L350 0.0 L351 0.0 L352 0.0 L353 0.0 L354 0.0 L355 0.0 L356 0.0 L357 0.0 L358 0.0 L359 0.0 L360 0.0 L361 0.0 L362 0.0 L363 0.0 L364 0.0 L365 0.0 L366 0.0 L367 0.0 L368 0.0 L369 0.0 L370 0.0 L371 0.0 L372 0.0 L373 0.8 L374 4.2 L375 6.6 L376 8.1 L377 7.8 L378 6.1 L379 3.5 L380 4.9 L381 7.5 L382 9.6 L383 10.9 L384 10.9 L385 9.7 L386 7.7 L387 5.0 L388 3.8 L389 4.5 L390 6.7 L391 8.4 L392 9.5 L393 9.6 L394 8.5 L395 6.9 L396 4.8 L397 3.5 L398 3.7 L399 5.3 L400 7.7 L401 9.0 L402 8.1 L403 5.9 L404 2.6 L405 4.0 L406 7.9 L407 10.5 L408 11.4 L409 9.8 L410 6.8 L411 2.5 L412 4.3 L413 6.9 L414 9.0 L415 10.5 L416 11.4 L417 11.0 L418 9.7 L419 7.8 L420 5.4 L421 2.4 L422 3.2 L423 2.5 L424 5.2 L425 7.5 L426 9.3 L427 10.5 L428 10.4 L429 9.3 L430 7.4 L431 5.0 L432 4.8 L433 3.0 L434 3.6 L435 6.4 L436 8.5 L437 10.0 L438 10.3 L439 9.1 L440 7.3 L441 4.7 L442 3.5 L443 6.6 L444 9.0 L445 10.6 L446 10.7 L447 9.2 L448 6.8 L449 4.3 L450 1.8 L451 4.6 L452 6.8 L453 8.8 L454 10.1 L455 9.8 L456 8.3 L457 6.1 L458 3.9 L459 5.8 L460 8.7 L461 10.9 L462 12.4 L463 12.9 L464 11.8 L465 10.0 L466 7.5 L467 4.3 L468 3.9 L469 8.0 L470 11.2 L471 13.7 L472 15.5 L473 16.1 L474 14.9 L475 12.8 L476 9.9 L477 6.4 L478 1.9 L479 2.3 L480 4.0 L481 7.8 L482 11.4 L483 14.1 L484 15.8 L485 15.7 L486 14.0 L487 11.3 L488 7.7 L489 3.2 L490 4.8 L491 2.8 L492 3.4 L493 6.8 L494 9.5 L495 11.4 L496 12.4 L497 11.7 L498 10.0 L499 7.5 L500 4.3 L501 5.0 L502 3.4 L503 4.2 L504 5.6 L505 7.4 L506 7.9 L507 6.5 L508 4.2 L509 8.4 L510 11.7 L511 14.0 L512 15.1 L513 14.0 L514 11.6 L515 8.3 L516 4.1 L517 2.6 L518 4.0 L519 3.9 L520 7.3 L521 10.4 L522 12.3 L523 12.3 L524 10.3 L525 7.2 L526 5.0 L527 7.4 L528 10.1 L529 12.2 L530 13.6 L531 13.9 L532 12.8 L533 10.9 L534 8.4 L535 5.2 L536 1.8 L537 1.8 L538 4.0 L539 2.9 L540 3.6 L541 7.0 L542 9.7 L543 10.6 L544 8.8 L545 5.5 L546 4.4 L547 5.3 L548 7.2 L549 7.7 L550 6.4 L551 4.4 L552 8.1 L553 10.9 L554 13.1 L555 14.5 L556 14.4 L557 12.9 L558 10.6 L559 7.6 L560 4.0 L561 3.3 L562 4.4 L563 5.0 L564 6.9 L565 8.4 L566 9.4 L567 9.6 L568 8.8 L569 7.5 L570 5.8 L571 3.6 L572 2.4 L573 5.0 L574 3.6 L575 4.4 L576 5.9 L577 6.9 L578 7.4 L579 6.9 L580 5.9 L581 4.8 L582 2.6 L583 4.1 L584 3.6 L585 5.3 L586 7.6 L587 8.9 L588 8.2 L589 6.2 L590 3.4 L591 1.6 L592 2.1 L593 5.7 L594 8.4 L595 10.3 L596 10.8 L597 9.6 L598 7.4 L599 4.3 L600 6.9 L601 9.9 L602 12.0 L603 13.2 L604 12.5 L605 10.6 L606 7.9 L607 4.3 L608 3.1 L609 2.9 L610 5.9 L611 7.8 L612 8.1 L613 6.4 L614 4.9 L615 4.5 L616 4.3 L617 4.1 L618 0.6 L619 5.4 L620 9.2 L621 11.2 L622 10.2 L623 7.1 L624 2.5 L625 2.8 L626 4.2 L627 6.2 L628 6.9 L629 5.6 L630 3.3 L631 2.0 L632 2.6 L633 1.1 L634 2.2 L635 2.5 L636 5.0 L637 6.2 L638 5.1 L639 2.8 L640 1.1 L641 2.9 L642 4.0 L643 3.8 L644 2.4 L645 0.7 L646 3.0 L647 2.3 L648 1.1 L649 1.1 L650 2.8 L651 2.8 L652 7.3 L653 9.8 L654 8.8 L655 5.2 L656 2.0 L657 1.7 L658 2.6 L659 4.9 L660 7.7 L661 7.5 L662 4.6 L663 2.5 L664 3.6 L665 4.3 L666 4.0 L667 3.2 L668 1.8 L669 0.5 L670 1.2 L671 2.8 L672 1.2 L673 0.9 L674 2.2 L675 3.2 L676 3.8 L677 3.8 L678 3.2 L679 2.4 L680 0.9 L681 1.1 L682 0.9 L683 0.6 L684 1.6 L685 0.8 L686 1.2 L687 2.7 L688 4.1 L689 3.4 L690 1.5 L691 1.1 L692 3.3 L693 6.4 L694 8.5 L695 9.4 L696 8.3 L697 6.2 L698 3.1 L699 2.9 L700 1.1 L701 0.7 L702 1.5 L703 1.5 L704 1.7 L705 2.9 L706 3.9 L707 3.7 L708 2.6 L709 1.6 L710 2.0 L711 1.9 L712 0.6 L713 1.5 L714 4.6 L715 6.2 L716 5.1 L717 2.4 L718 1.4 L719 1.9 L720 2.2 L721 1.7 L722 2.9 L723 5.5 L724 7.9 L725 7.9 L726 5.5 L727 2.6 L728 1.5 L729 4.3 L730 6.6 L731 6.8 L732 4.7 L733 1.2 L734 1.1 L735 1.9 L736 2.0 L737 7.2 L738 9.5 L739 7.1 L740 1.9 L741 2.7 L742 2.3 L743 3.3 L744 5.5 L745 4.9 L746 2.1 L747 1.2 L748 1.8 L749 1.1 L750 0.9 L751 1.5 L752 3.7 L753 4.4 L754 3.0 L755 1.7 L756 2.7 L757 5.2 L758 7.2 L759 7.7 L760 6.1 L761 3.4 L762 5.4 L763 9.4 L764 11.4 L765 9.8 L766 6.1 L767 1.4 L768 1.1 L769 0.5 L770 2.9 L771 3.5 L772 5.8 L773 5.8 L774 3.6 L775 2.3 L776 0.6 L777 3.6 L778 6.6 L779 8.6 L780 9.1 L781 7.7 L782 5.1 L783 1.5 L784 2.4 L785 1.5 L786 1.9 L787 6.3 L788 9.9 L789 11.5 L790 9.7 L791 6.0 L792 0.9 L793 1.2 L794 3.2 L795 5.6 L796 6.9 L797 6.6 L798 4.8 L799 3.0 L800 2.7 L801 1.5 L802 1.5 L803 1.9 L804 2.6 L805 3.6 L806 4.2 L807 3.7 L808 2.7 L809 1.3 L810 0.0 L811 0.0 L812 0.0 L813 0.0 L814 0.0 L815 0.0 L816 0.0 L817 0.0 L818 0.0 L819 0.0 L820 0.0 L821 0.0 L822 0.0 L823 0.0 L824 0.0 L825 0.0 L826 0.0 L827 0.0 L828 0.0 L829 0.0 L830 0.0 L831 0.0 L832 0.0 L833 0.0 L834 0.0 L835 0.0 L836 0.0 L837 0.0 L838 0.0 L839 0.0 L840 0.0 L841 0.0 L842 0.0 L843 0.0 L844 0.0 L845 0.0 L846 0.0 L847 0.0 L848 1.1 L849 1.8 L850 1.1 L851 0.0 L852 0.0 L853 1.8 L854 2.8 L855 1.8 L856 0.0 L857 0.0 L858 0.0 L859 2.9 L860 4.5 L861 2.9 L862 2.2 L863 3.5 L864 2.2 L865 0.0 L866 0.0 L867 0.0 L868 0.0 L869 0.0 L870 1.3 L871 2.1 L872 1.3 L873 0.0 L874 0.0 L875 0.0 L876 2.5 L877 3.8 L878 2.5 L879 0.0 L880 1.1 L881 1.8 L882 1.1 L883 0.0 L884 0.0 L885 0.0 L886 0.0 L887 0.0 L888 0.0 L889 0.0 L890 0.0 L891 0.0 L892 0.0 L893 0.0 L894 0.0 L895 0.0 L896 0.0 L897 0.0 L898 0.0 L899 0.0 L900 0.0 L901 0.0 L902 0.0 L903 0.0 L904 0.0 L905 0.0 L906 0.0 L907 0.0 L908 0.0 L909 0.0 L910 0.0 L911 0.0 L912 0.0 L913 0.0 L914 0.0 L915 0.0 L916 0.0 L917 0.0 L918 0.0 L919 0.0 L920 0.0 L921 0.0 L922 0.0 L923 0.0 L924 0.0 L925 0.0 L926 0.0 L927 0.0 L928 0.0 L929 0.0 L930 0.0 L931 0.0 L932 0.0 L933 0.0 L934 0.0 L935 0.0 L936 0.0 L937 0.0 L938 0.0 L939 0.0 L940 0.0 L941 0.0 L942 0.0 L943 0.0 L944 0.0 L945 0.0 L946 0.0 L947 0.0 L948 0.0 L949 0.0 L950 0.0 L951 0.0 L952 0.0 L953 0.0 L954 0.0 L955 0.0 L956 0.0 L957 0.0 L958 0.0 L959 2.5 L960 3.8 L961 2.5 L962 0.0 L963 0.0 L964 0.0 L965 0.0 L966 0.0 L967 0.0 L968 0.0 L969 0.0 L970 0.0 L971 0.0 L972 0.0 L973 0.0 L974 0.0 L975 0.0 L976 0.0 L977 0.0 L978 0.0 L979 0.0 L980 0.0 L981 0.0 L982 0.0 L983 0.0 L984 0.0 L985 0.0 L986 0.0 L987 0.0 L988 0.0 L989 0.0 L990 0.0 L991 0.0 L992 0.0 L993 0.0 L994 0.0 L995 0.0 L996 0.0 L997 0.0 L998 0.0 L999 0.0 L1000 2.7 L1001 4.2 L1002 2.7 L1003 0.0 L1004 0.0 L1005 0.0 L1006 0.0 L1007 0.0 L1008 0.0 L1009 0.0 L1010 0.0 L1011 0.0 L1012 0.0 L1013 0.0 L1014 0.0 L1015 0.0 L1016 0.0 L1017 0.0 L1018 0.0 L1019 0.0 L1020 0.0 L1021 0.0 L1022 0.0 L1023 0.0 L1024 0.0 L1025 0.0 L1026 0.0 L1027 1.6 L1028 2.4 L1029 1.6 L1030 0.0 L1031 2.0 L1032 3.1 L1033 2.0 L1034 0.0 L1035 0.0 L1036 1.3 L1037 2.1 L1038 1.3 L1039 0.0 L1040 0.0 L1041 0.0 L1042 0.0 L1043 0.0 L1044 0.0 L1045 0.0 L1046 0.0 L1047 0.0 L1048 0.0 L1049 0.0 L1050 0.0 L1051 0.0 L1052 0.0 L1053 0.0 L1054 0.0 L1055 0.0 L1056 0.0 L1057 0.0 L1058 0.0 L1059 0.0 L1060 0.0 L1061 0.0 L1062 0.0 L1063 0.0 L1064 0.0 L1065 0.0 L1066 0.0 L1067 0.0 L1068 0.0 L1069 0.0 L1070 0.0 L1071 0.0 L1072 0.0 L1073 0.0 L1074 1.8 L1075 2.8 L1076 1.8 L1077 0.0 L1078 2.7 L1079 4.2 L1080 2.7 L1081 0.0 L1082 1.6 L1083 2.4 L1084 1.6 L1085 0.0 L1086 0.0 L1087 0.0 L1088 0.0 L1089 0.0 L1090 0.0 L1091 0.0 L1092 0.0 L1093 0.0 L1094 0.0 L1095 0.0 L1096 0.0 L1097 0.0 L1098 0.0 L1099 0.0 L1100 0.0 L1101 0.0 L1102 0.0 L1103 0.0 L1104 0.0 L1105 0.0 L1106 0.0 L1107 0.0 L1108 0.0 L1109 0.0 L1110 0.0 L1111 0.0 L1112 0.0 L1113 0.0 L1114 0.0 L1115 0.0 L1116 0.0 L1117 0.0 L1118 0.0 L1119 0.0 L1120 0.0 L1121 0.0 L1122 0.0 L1123 0.0 L1124 0.0 L1125 0.0 L1126 0.0 L1127 0.0 L1128 0.0 L1129 0.0 L1130 0.0 L1131 0.0 L1132 0.0 L1133 0.0 L1134 0.0 L1135 0.0 L1136 0.0 L1137 0.0 L1138 0.0 L1139 0.0 L1140 0.0 L1141 0.0 L1142 0.0 L1143 0.0 L1144 0.0 L1145 0.0 L1146 0.0 L1147 0.0 L1148 0.0 L1149 0.0 L1150 0.0 L1151 0.0 L1152 0.0 L1153 0.0 L1154 0.0 L1155 0.0 L1156 0.0 L1157 0.0 L1158 0.0 L1159 0.0 L1160 0.0 L1161 0.0 L1162 0.0 L1163 0.0 L1164 0.0 L1165 0.0 L1166 0.0 L1167 0.0 L1168 0.0 L1169 0.0 L1170 0.0 L1171 0.0 L1172 0.0 L1173 0.0 L1174 0.0 L1175 0.0 L1176 0.0 L1177 0.0 L1178 0.0 L1179 0.0 L1180 0.0 L1181 0.0 L1182 0.0 L1183 0.0 L1184 0.0 L1185 0.0 L1186 0.0 L1187 0.0 L1188 0.0 L1189 0.0 L1190 0.0 L1191 1.6 L1192 2.4 L1193 1.6 L1194 0.0 L1195 0.0 L1196 1.1 L1197 1.8 L1198 1.1 L1199 0.0 L1200 0.0 L1201 0.0 L1202 0.0 L1203 0.0 L1204 0.0 L1205 0.0 L1206 0.0 L1207 0.0 L1208 0.0 L1209 0.0 L1210 0.0 L1211 0.0 L1212 0.0 L1213 0.0 L1214 0.0 L1215 0.0 L1216 0.0 L1217 0.0 L1218 0.0 L1219 0.0 L1220 0.0 L1221 0.0 L1222 0.0 L1223 0.0 L1224 0.0 L1225 0.0 L1226 0.0 L1227 1.8 L1228 2.8 L1229 1.8 L1230 0.0 L1231 0.0 L1232 2.2 L1233 3.5 L1234 2.2 L1235 0.0 L1236 1.1 L1237 1.8 L1238 1.1 L1239 0.0 L1240 0.0 L1241 0.0 L1242 0.0 L1243 0.0 L1244 0.0 L1245 0.0 L1246 0.0 L1247 0.0 L1248 0.0 L1249 0.0 L1250 0.0 L1251 0.0 L1252 0.0 L1253 0.0 L1254 0.0 L1255 0.0 L1256 1.3 L1257 2.1 L1258 1.3 L1259 0.0 L1260 0.0 L1261 0.0 L1262 2.0 L1263 3.1 L1264 2.0 L1265 0.0 L1266 2.5 L1267 3.8 L1268 2.5 L1269 0.0 L1270 1.6 L1271 2.4 L1272 1.6 L1273 0.0 L1274 0.0 L1275 0.0 L1276 0.0 L1277 0.0 L1278 0.0 L1279 0.0 L1280 0.0 L1281 0.0 L1282 0.0 L1283 0.0 L1284 0.0 L1285 0.0 L1286 0.0 L1287 0.0 L1288 0.0 L1288 0Z" fill="#6c4c72"/><path d="M0 76 L0 76.0 L1 76.0 L2 68.0 L3 63.1 L4 63.5 L5 63.3 L6 62.2 L7 61.8 L8 64.0 L9 61.5 L10 62.0 L11 62.4 L12 61.3 L13 59.2 L14 63.0 L15 59.6 L16 62.4 L17 60.2 L18 63.5 L19 59.1 L20 61.8 L21 59.2 L22 76.0 L23 76.0 L24 76.0 L25 62.9 L26 62.0 L27 60.5 L28 63.1 L29 62.6 L30 60.6 L31 59.3 L32 62.4 L33 63.1 L34 62.2 L35 59.1 L36 63.3 L37 76.0 L38 70.9 L39 70.9 L40 75.1 L41 71.4 L42 72.8 L43 76.0 L44 73.0 L45 71.6 L46 75.1 L47 74.0 L48 71.3 L49 73.6 L50 73.2 L51 71.4 L52 74.4 L53 73.1 L54 72.6 L55 76.0 L56 73.6 L57 73.9 L58 75.7 L59 74.2 L60 74.8 L61 76.0 L62 75.3 L63 74.6 L64 75.3 L65 75.4 L66 74.9 L67 75.5 L68 76.0 L69 76.0 L70 76.0 L71 76.0 L72 76.0 L73 76.0 L74 76.0 L75 76.0 L76 76.0 L77 76.0 L78 76.0 L79 76.0 L80 76.0 L81 76.0 L82 76.0 L83 76.0 L84 76.0 L85 76.0 L86 76.0 L87 76.0 L88 76.0 L89 76.0 L90 76.0 L91 76.0 L92 76.0 L93 76.0 L94 76.0 L95 76.0 L96 76.0 L97 76.0 L98 76.0 L99 76.0 L100 76.0 L101 76.0 L102 76.0 L103 76.0 L104 76.0 L105 76.0 L106 76.0 L107 76.0 L108 76.0 L109 76.0 L110 76.0 L111 76.0 L112 76.0 L113 76.0 L114 76.0 L115 76.0 L116 76.0 L117 76.0 L118 76.0 L119 76.0 L120 76.0 L121 76.0 L122 76.0 L123 76.0 L124 76.0 L125 76.0 L126 76.0 L127 76.0 L128 76.0 L129 76.0 L130 76.0 L131 76.0 L132 76.0 L133 76.0 L134 76.0 L135 76.0 L136 76.0 L137 76.0 L138 76.0 L139 76.0 L140 76.0 L141 76.0 L142 76.0 L143 76.0 L144 76.0 L145 76.0 L146 76.0 L147 76.0 L148 76.0 L149 76.0 L150 76.0 L151 76.0 L152 76.0 L153 76.0 L154 76.0 L155 76.0 L156 76.0 L157 76.0 L158 76.0 L159 76.0 L160 76.0 L161 76.0 L162 76.0 L163 76.0 L164 76.0 L165 76.0 L166 76.0 L167 76.0 L168 76.0 L169 76.0 L170 76.0 L171 76.0 L172 76.0 L173 76.0 L174 76.0 L175 76.0 L176 76.0 L177 76.0 L178 76.0 L179 76.0 L180 76.0 L181 76.0 L182 76.0 L183 76.0 L184 76.0 L185 76.0 L186 76.0 L187 76.0 L188 76.0 L189 76.0 L190 76.0 L191 76.0 L192 76.0 L193 76.0 L194 76.0 L195 76.0 L196 76.0 L197 76.0 L198 76.0 L199 76.0 L200 76.0 L201 76.0 L202 76.0 L203 76.0 L204 76.0 L205 76.0 L206 76.0 L207 76.0 L208 76.0 L209 76.0 L210 76.0 L211 76.0 L212 76.0 L213 76.0 L214 76.0 L215 76.0 L216 76.0 L217 76.0 L218 76.0 L219 76.0 L220 76.0 L221 76.0 L222 76.0 L223 76.0 L224 76.0 L225 76.0 L226 76.0 L227 76.0 L228 76.0 L229 76.0 L230 76.0 L231 76.0 L232 76.0 L233 76.0 L234 76.0 L235 76.0 L236 76.0 L237 76.0 L238 76.0 L239 76.0 L240 76.0 L241 76.0 L242 76.0 L243 76.0 L244 76.0 L245 76.0 L246 76.0 L247 76.0 L248 76.0 L249 76.0 L250 76.0 L251 76.0 L252 76.0 L253 76.0 L254 76.0 L255 76.0 L256 76.0 L257 76.0 L258 76.0 L259 76.0 L260 76.0 L261 76.0 L262 76.0 L263 76.0 L264 76.0 L265 76.0 L266 76.0 L267 76.0 L268 76.0 L269 76.0 L270 76.0 L271 76.0 L272 76.0 L273 76.0 L274 76.0 L275 76.0 L276 76.0 L277 76.0 L278 76.0 L279 76.0 L280 76.0 L281 76.0 L282 76.0 L283 76.0 L284 76.0 L285 76.0 L286 76.0 L287 76.0 L288 76.0 L289 76.0 L290 76.0 L291 76.0 L292 76.0 L293 76.0 L294 76.0 L295 76.0 L296 76.0 L297 76.0 L298 76.0 L299 76.0 L300 76.0 L301 76.0 L302 76.0 L303 76.0 L304 76.0 L305 76.0 L306 76.0 L307 76.0 L308 76.0 L309 76.0 L310 76.0 L311 76.0 L312 76.0 L313 76.0 L314 76.0 L315 76.0 L316 76.0 L317 76.0 L318 76.0 L319 76.0 L320 76.0 L321 76.0 L322 76.0 L323 76.0 L324 76.0 L325 76.0 L326 76.0 L327 76.0 L328 76.0 L329 76.0 L330 76.0 L331 76.0 L332 76.0 L333 76.0 L334 76.0 L335 76.0 L336 76.0 L337 76.0 L338 76.0 L339 76.0 L340 76.0 L341 76.0 L342 76.0 L343 76.0 L344 76.0 L345 76.0 L346 76.0 L347 76.0 L348 76.0 L349 76.0 L350 76.0 L351 76.0 L352 76.0 L353 76.0 L354 76.0 L355 76.0 L356 76.0 L357 76.0 L358 76.0 L359 76.0 L360 76.0 L361 76.0 L362 76.0 L363 76.0 L364 76.0 L365 76.0 L366 76.0 L367 76.0 L368 76.0 L369 76.0 L370 76.0 L371 76.0 L372 76.0 L373 72.7 L374 69.1 L375 66.5 L376 65.0 L377 65.3 L378 67.1 L379 69.9 L380 68.4 L381 65.6 L382 63.4 L383 62.1 L384 62.0 L385 63.4 L386 65.4 L387 68.2 L388 69.5 L389 68.8 L390 66.5 L391 64.7 L392 63.5 L393 63.5 L394 64.5 L395 66.2 L396 68.5 L397 69.8 L398 69.6 L399 67.9 L400 65.4 L401 64.0 L402 65.0 L403 67.3 L404 70.7 L405 69.3 L406 65.2 L407 62.5 L408 61.5 L409 63.2 L410 66.4 L411 70.9 L412 69.0 L413 66.3 L414 64.1 L415 62.5 L416 61.5 L417 62.0 L418 63.4 L419 65.3 L420 67.9 L421 71.0 L422 70.1 L423 70.8 L424 68.1 L425 65.6 L426 63.7 L427 62.5 L428 62.5 L429 63.8 L430 65.7 L431 68.2 L432 68.5 L433 70.3 L434 69.7 L435 66.8 L436 64.5 L437 63.0 L438 62.7 L439 63.9 L440 65.9 L441 68.5 L442 69.9 L443 66.6 L444 64.1 L445 62.4 L446 62.3 L447 63.9 L448 66.3 L449 69.0 L450 71.6 L451 68.6 L452 66.3 L453 64.2 L454 62.9 L455 63.2 L456 64.8 L457 67.1 L458 69.5 L459 67.4 L460 64.4 L461 62.1 L462 60.5 L463 60.0 L464 61.1 L465 63.0 L466 65.7 L467 69.0 L468 69.4 L469 65.2 L470 61.7 L471 59.1 L472 59.0 L473 59.0 L474 59.0 L475 60.1 L476 63.1 L477 66.8 L478 71.5 L479 73.6 L480 69.3 L481 65.3 L482 61.6 L483 59.0 L484 59.0 L485 59.0 L486 59.0 L487 61.6 L488 65.4 L489 70.1 L490 70.9 L491 70.5 L492 70.0 L493 66.4 L494 63.6 L495 61.5 L496 60.4 L497 61.2 L498 63.0 L499 65.6 L500 69.0 L501 68.3 L502 72.5 L503 69.1 L504 67.7 L505 65.7 L506 65.2 L507 66.7 L508 69.1 L509 64.7 L510 61.3 L511 59.0 L512 59.0 L513 59.0 L514 61.3 L515 64.7 L516 69.2 L517 70.8 L518 69.3 L519 69.4 L520 65.9 L521 62.6 L522 60.6 L523 60.6 L524 62.7 L525 66.0 L526 68.3 L527 65.7 L528 62.9 L529 60.7 L530 59.2 L531 59.0 L532 60.1 L533 62.1 L534 64.7 L535 68.0 L536 71.6 L537 74.1 L538 69.3 L539 72.9 L540 69.7 L541 66.2 L542 63.3 L543 62.4 L544 64.3 L545 67.7 L546 68.9 L547 67.9 L548 66.0 L549 65.4 L550 66.8 L551 68.8 L552 65.0 L553 62.0 L554 59.7 L555 59.0 L556 59.0 L557 60.0 L558 62.4 L559 65.6 L560 69.3 L561 70.0 L562 68.9 L563 68.2 L564 66.2 L565 64.7 L566 63.7 L567 63.4 L568 64.3 L569 65.6 L570 67.4 L571 69.7 L572 71.0 L573 68.3 L574 69.7 L575 68.9 L576 67.3 L577 66.2 L578 65.7 L579 66.2 L580 67.3 L581 68.5 L582 70.8 L583 69.2 L584 69.7 L585 68.0 L586 65.5 L587 64.2 L588 64.9 L589 66.9 L590 70.0 L591 71.8 L592 71.3 L593 67.5 L594 64.7 L595 62.7 L596 62.1 L597 63.4 L598 65.8 L599 69.0 L600 66.2 L601 63.1 L602 60.9 L603 59.6 L604 60.4 L605 62.4 L606 65.2 L607 68.9 L608 70.3 L609 70.5 L610 67.4 L611 65.3 L612 65.0 L613 66.7 L614 68.4 L615 68.7 L616 69.0 L617 71.7 L618 75.4 L619 67.8 L620 63.9 L621 61.7 L622 62.8 L623 66.1 L624 70.9 L625 70.6 L626 69.1 L627 67.0 L628 66.3 L629 67.6 L630 70.0 L631 71.4 L632 70.8 L633 74.8 L634 71.2 L635 70.9 L636 68.3 L637 67.0 L638 68.1 L639 73.1 L640 74.8 L641 70.4 L642 69.3 L643 69.6 L644 70.9 L645 72.8 L646 70.4 L647 73.5 L648 74.8 L649 74.8 L650 70.5 L651 70.5 L652 65.8 L653 63.2 L654 64.3 L655 68.0 L656 73.9 L657 74.3 L658 70.8 L659 68.3 L660 65.5 L661 65.6 L662 68.7 L663 70.9 L664 69.7 L665 69.0 L666 69.3 L667 70.2 L668 71.6 L669 75.4 L670 74.8 L671 73.1 L672 74.8 L673 72.6 L674 71.2 L675 70.2 L676 69.5 L677 69.5 L678 70.2 L679 71.0 L680 75.1 L681 74.8 L682 75.1 L683 75.4 L684 74.4 L685 75.1 L686 72.3 L687 70.7 L688 69.2 L689 70.0 L690 74.5 L691 74.9 L692 70.0 L693 66.8 L694 64.6 L695 63.6 L696 64.7 L697 67.0 L698 70.3 L699 70.5 L700 74.9 L701 75.2 L702 74.4 L703 74.5 L704 74.2 L705 70.5 L706 69.4 L707 69.6 L708 70.8 L709 71.9 L710 73.9 L711 74.0 L712 75.4 L713 74.4 L714 68.7 L715 67.0 L716 68.1 L717 71.0 L718 74.6 L719 74.0 L720 73.7 L721 71.7 L722 70.5 L723 67.7 L724 65.2 L725 65.2 L726 67.7 L727 73.3 L728 72.0 L729 69.0 L730 66.6 L731 66.4 L732 68.6 L733 72.3 L734 74.9 L735 74.0 L736 71.4 L737 66.0 L738 63.5 L739 66.0 L740 71.5 L741 73.1 L742 73.6 L743 70.0 L744 67.8 L745 68.4 L746 71.3 L747 74.7 L748 74.1 L749 74.8 L750 75.0 L751 71.9 L752 69.6 L753 68.9 L754 70.4 L755 71.7 L756 70.7 L757 68.1 L758 65.9 L759 65.4 L760 67.1 L761 72.5 L762 67.8 L763 63.6 L764 61.5 L765 63.2 L766 67.1 L767 72.0 L768 74.9 L769 75.4 L770 70.5 L771 69.8 L772 67.4 L773 67.4 L774 69.7 L775 73.6 L776 75.4 L777 69.7 L778 66.5 L779 64.4 L780 63.9 L781 65.4 L782 68.1 L783 71.9 L784 73.5 L785 74.5 L786 74.0 L787 66.9 L788 63.1 L789 61.4 L790 63.3 L791 67.2 L792 72.6 L793 74.8 L794 70.1 L795 67.7 L796 66.2 L797 66.6 L798 68.4 L799 70.4 L800 73.2 L801 74.4 L802 74.4 L803 71.5 L804 70.8 L805 69.7 L806 69.1 L807 69.6 L808 70.6 L809 72.1 L810 76.0 L811 76.0 L812 76.0 L813 76.0 L814 76.0 L815 76.0 L816 76.0 L817 76.0 L818 76.0 L819 76.0 L820 76.0 L821 76.0 L822 76.0 L823 76.0 L824 76.0 L825 76.0 L826 76.0 L827 76.0 L828 76.0 L829 76.0 L830 76.0 L831 76.0 L832 76.0 L833 76.0 L834 76.0 L835 76.0 L836 76.0 L837 76.0 L838 76.0 L839 76.0 L840 76.0 L841 76.0 L842 76.0 L843 76.0 L844 76.0 L845 76.0 L846 76.0 L847 76.0 L848 74.8 L849 74.2 L850 74.8 L851 76.0 L852 76.0 L853 74.1 L854 70.6 L855 74.1 L856 76.0 L857 76.0 L858 76.0 L859 70.4 L860 68.7 L861 70.4 L862 71.1 L863 69.8 L864 71.1 L865 76.0 L866 76.0 L867 76.0 L868 76.0 L869 76.0 L870 74.6 L871 73.8 L872 74.6 L873 76.0 L874 76.0 L875 76.0 L876 70.9 L877 69.5 L878 70.9 L879 76.0 L880 74.8 L881 74.2 L882 74.8 L883 76.0 L884 76.0 L885 76.0 L886 76.0 L887 76.0 L888 76.0 L889 76.0 L890 76.0 L891 76.0 L892 76.0 L893 76.0 L894 76.0 L895 76.0 L896 76.0 L897 76.0 L898 76.0 L899 76.0 L900 76.0 L901 76.0 L902 76.0 L903 76.0 L904 76.0 L905 76.0 L906 76.0 L907 76.0 L908 76.0 L909 76.0 L910 76.0 L911 76.0 L912 76.0 L913 76.0 L914 76.0 L915 76.0 L916 76.0 L917 76.0 L918 76.0 L919 76.0 L920 76.0 L921 76.0 L922 76.0 L923 76.0 L924 76.0 L925 76.0 L926 76.0 L927 76.0 L928 76.0 L929 76.0 L930 76.0 L931 76.0 L932 76.0 L933 76.0 L934 76.0 L935 76.0 L936 76.0 L937 76.0 L938 76.0 L939 76.0 L940 76.0 L941 76.0 L942 76.0 L943 76.0 L944 76.0 L945 76.0 L946 76.0 L947 76.0 L948 76.0 L949 76.0 L950 76.0 L951 76.0 L952 76.0 L953 76.0 L954 76.0 L955 76.0 L956 76.0 L957 76.0 L958 76.0 L959 70.9 L960 69.5 L961 70.9 L962 76.0 L963 76.0 L964 76.0 L965 76.0 L966 76.0 L967 76.0 L968 76.0 L969 76.0 L970 76.0 L971 76.0 L972 76.0 L973 76.0 L974 76.0 L975 76.0 L976 76.0 L977 76.0 L978 76.0 L979 76.0 L980 76.0 L981 76.0 L982 76.0 L983 76.0 L984 76.0 L985 76.0 L986 76.0 L987 76.0 L988 76.0 L989 76.0 L990 76.0 L991 76.0 L992 76.0 L993 76.0 L994 76.0 L995 76.0 L996 76.0 L997 76.0 L998 76.0 L999 76.0 L1000 70.7 L1001 69.1 L1002 70.7 L1003 76.0 L1004 76.0 L1005 76.0 L1006 76.0 L1007 76.0 L1008 76.0 L1009 76.0 L1010 76.0 L1011 76.0 L1012 76.0 L1013 76.0 L1014 76.0 L1015 76.0 L1016 76.0 L1017 76.0 L1018 76.0 L1019 76.0 L1020 76.0 L1021 76.0 L1022 76.0 L1023 76.0 L1024 76.0 L1025 76.0 L1026 76.0 L1027 74.4 L1028 70.9 L1029 74.4 L1030 76.0 L1031 71.4 L1032 70.2 L1033 71.4 L1034 76.0 L1035 76.0 L1036 74.6 L1037 73.8 L1038 74.6 L1039 76.0 L1040 76.0 L1041 76.0 L1042 76.0 L1043 76.0 L1044 76.0 L1045 76.0 L1046 76.0 L1047 76.0 L1048 76.0 L1049 76.0 L1050 76.0 L1051 76.0 L1052 76.0 L1053 76.0 L1054 76.0 L1055 76.0 L1056 76.0 L1057 76.0 L1058 76.0 L1059 76.0 L1060 76.0 L1061 76.0 L1062 76.0 L1063 76.0 L1064 76.0 L1065 76.0 L1066 76.0 L1067 76.0 L1068 76.0 L1069 76.0 L1070 76.0 L1071 76.0 L1072 76.0 L1073 76.0 L1074 74.1 L1075 70.6 L1076 74.1 L1077 76.0 L1078 70.7 L1079 69.1 L1080 70.7 L1081 76.0 L1082 74.4 L1083 70.9 L1084 74.4 L1085 76.0 L1086 76.0 L1087 76.0 L1088 76.0 L1089 76.0 L1090 76.0 L1091 76.0 L1092 76.0 L1093 76.0 L1094 76.0 L1095 76.0 L1096 76.0 L1097 76.0 L1098 76.0 L1099 76.0 L1100 76.0 L1101 76.0 L1102 76.0 L1103 76.0 L1104 76.0 L1105 76.0 L1106 76.0 L1107 76.0 L1108 76.0 L1109 76.0 L1110 76.0 L1111 76.0 L1112 76.0 L1113 76.0 L1114 76.0 L1115 76.0 L1116 76.0 L1117 76.0 L1118 76.0 L1119 76.0 L1120 76.0 L1121 76.0 L1122 76.0 L1123 76.0 L1124 76.0 L1125 76.0 L1126 76.0 L1127 76.0 L1128 76.0 L1129 76.0 L1130 76.0 L1131 76.0 L1132 76.0 L1133 76.0 L1134 76.0 L1135 76.0 L1136 76.0 L1137 76.0 L1138 76.0 L1139 76.0 L1140 76.0 L1141 76.0 L1142 76.0 L1143 76.0 L1144 76.0 L1145 76.0 L1146 76.0 L1147 76.0 L1148 76.0 L1149 76.0 L1150 76.0 L1151 76.0 L1152 76.0 L1153 76.0 L1154 76.0 L1155 76.0 L1156 76.0 L1157 76.0 L1158 76.0 L1159 76.0 L1160 76.0 L1161 76.0 L1162 76.0 L1163 76.0 L1164 76.0 L1165 76.0 L1166 76.0 L1167 76.0 L1168 76.0 L1169 76.0 L1170 76.0 L1171 76.0 L1172 76.0 L1173 76.0 L1174 76.0 L1175 76.0 L1176 76.0 L1177 76.0 L1178 76.0 L1179 76.0 L1180 76.0 L1181 76.0 L1182 76.0 L1183 76.0 L1184 76.0 L1185 76.0 L1186 76.0 L1187 76.0 L1188 76.0 L1189 76.0 L1190 76.0 L1191 74.4 L1192 70.9 L1193 74.4 L1194 76.0 L1195 76.0 L1196 74.8 L1197 74.2 L1198 74.8 L1199 76.0 L1200 76.0 L1201 76.0 L1202 76.0 L1203 76.0 L1204 76.0 L1205 76.0 L1206 76.0 L1207 76.0 L1208 76.0 L1209 76.0 L1210 76.0 L1211 76.0 L1212 76.0 L1213 76.0 L1214 76.0 L1215 76.0 L1216 76.0 L1217 76.0 L1218 76.0 L1219 76.0 L1220 76.0 L1221 76.0 L1222 76.0 L1223 76.0 L1224 76.0 L1225 76.0 L1226 76.0 L1227 74.1 L1228 70.6 L1229 74.1 L1230 76.0 L1231 76.0 L1232 71.1 L1233 69.8 L1234 71.1 L1235 76.0 L1236 74.8 L1237 74.2 L1238 74.8 L1239 76.0 L1240 76.0 L1241 76.0 L1242 76.0 L1243 76.0 L1244 76.0 L1245 76.0 L1246 76.0 L1247 76.0 L1248 76.0 L1249 76.0 L1250 76.0 L1251 76.0 L1252 76.0 L1253 76.0 L1254 76.0 L1255 76.0 L1256 74.6 L1257 73.8 L1258 74.6 L1259 76.0 L1260 76.0 L1261 76.0 L1262 71.4 L1263 70.2 L1264 71.4 L1265 76.0 L1266 70.9 L1267 69.5 L1268 70.9 L1269 76.0 L1270 74.4 L1271 70.9 L1272 74.4 L1273 76.0 L1274 76.0 L1275 76.0 L1276 76.0 L1277 76.0 L1278 76.0 L1279 76.0 L1280 76.0 L1281 76.0 L1282 76.0 L1283 76.0 L1284 76.0 L1285 76.0 L1286 76.0 L1287 76.0 L1288 76.0 L1288 76Z" fill="#241428"/><path d="M0 67.3H1288.3" stroke="#f4d4f0" stroke-width="2.2"/><rect x="1" y="66" width="6" height="6" fill="#f0e0f0" stroke="#80508a" stroke-width="0.8"/></svg><div style="left:0;top:0;width:84px;height:16px;background:rgba(112,92,120,0.82)"></div><div class="t" style="left:4px;top:3px;font-size:11px;color:#f4e8f6">李秀英 - 휠릴리</div></div>
<div style="left:1551.6px;top:105.5px;width:3.4px;height:885px;background:linear-gradient(90deg,#e8eef4 0,#e8eef4 30%,#3a4a5c 38%,#3a4a5c 60%,#e8eef4 68%)"></div>
<div style="left:568px;top:997.3px;width:1204px;height:1.4px;background:#7a8692"></div>
<div style="left:566px;top:995.5px;width:5px;height:5px;background:#c8d0d8;border-radius:50%"></div>
<div style="left:576px;top:995.7px;width:179px;height:4.2px;background:#c4ccd6;border-radius:2px"></div>
<div style="left:1769.5px;top:995.5px;width:5px;height:5px;background:#c8d0d8;border-radius:50%"></div>
<svg style="left:1784px;top:995px" width="100" height="8"><path d="M2 1.5h8l-4 4z" fill="#b0b8c0"/><path d="M19 3.5h4M82 3.5h4M84 1.5v4" stroke="#9aa4ae" stroke-width="1"/><path d="M30 3.5h46" stroke="#8894a0" stroke-width="1.2"/><circle cx="44" cy="3.5" r="2.6" fill="#d0d8e0"/></svg>
<div style="left:1878px;top:130px;width:2px;height:860px;background:#2e3640"></div>
<div style="left:1880px;top:130px;width:9.5px;height:874.5px;background:#2e343c"></div>
<svg style="left:1876px;top:130px" width="14" height="870"><path d="M4 8L11 1" stroke="#8a949e" stroke-width="1"/><path d="M6 20V58M6 86V210" stroke="#7a8692" stroke-width="1"/><circle cx="6" cy="52" r="2.4" fill="#d0d8e0"/><circle cx="6" cy="83" r="2.4" fill="#d0d8e0"/><rect x="4" y="218" width="3.6" height="540" rx="1.8" fill="#c4ccd6"/><circle cx="6" cy="760" r="2.4" fill="#c8d0d8"/><path d="M2 774h8l-4 4z" fill="#b0b8c0"/><path d="M4 789h4M4 854h4M6 852v4" stroke="#9aa4ae" stroke-width="1"/><path d="M6 796V848" stroke="#8894a0" stroke-width="1.2"/><circle cx="6" cy="804" r="2.6" fill="#d0d8e0"/></svg>
<div style="left:1888px;top:324px;width:9px;height:58px;background:#2a3038;border-radius:2px"></div>
<div style="left:1890.5px;top:345px;width:3px;height:34px;background:linear-gradient(#5a8a4a,#3f8a74)"></div>
<svg style="left:1196px;top:841px" width="14" height="20"><path d="M1 1V16L4.6 12.6L7.4 18.6L9.8 17.4L7 11.6H12Z" fill="#fff" stroke="#222" stroke-width="1"/></svg>
<div style="left:200px;top:100px;width:351.5px;height:906.5px;background:#30363f;border-radius:7px;border:2px solid #454a54"></div>
<div class="t" style="left:525px;top:111px;font-size:14px;color:#aab2ba;font-weight:bold">+</div>
<div style="left:205px;top:128.5px;width:342px;height:1.2px;background:#4a505a"></div>
<div style="left:234.5px;top:129.8px;width:300.1px;height:21.5px;background:#333a44"></div>
<div style="left:534.6px;top:129.8px;width:10.7px;height:21.5px;background:#05070a"></div>
<div style="left:207px;top:150.3px;width:338.3px;height:1px;background:#242930"></div>
<div style="left:207px;top:129.8px;width:10.5px;height:21.5px;background:#15181c"></div>
<div style="left:217.5px;top:129.8px;width:17px;height:21.5px;background:linear-gradient(#d6f04a,#d4ee44)"></div>
<div style="left:242px;top:134.3px;width:21.3px;height:13.5px;background:linear-gradient(#48d060,#22b040);border-radius:2px;text-align:center;line-height:13.5px;font-size:11px;font-weight:bold;color:#111;-webkit-text-stroke:0.35px #111;box-shadow:0 0 3px #40ff70"></div>
<div class="t" style="left:248px;top:135.5px;font-size:11.5px;font-weight:bold;color:#08200c;transform:scaleX(1.2);transform-origin:0 0;-webkit-text-stroke:0.4px #08200c">R</div>
<div style="left:264.7px;top:134.3px;width:20.5px;height:13.5px;background:linear-gradient(#626971,#50575f);border-radius:2px;text-align:center;line-height:13.5px;font-size:11px;font-weight:bold;color:#111;-webkit-text-stroke:0.35px #111;"></div>
<div class="t" style="left:269.8px;top:134.4px;font-size:12.5px;font-weight:bold;color:#14181c;transform:scaleX(1.15);transform-origin:0 0;-webkit-text-stroke:0.4px #14181c">w</div>
<div style="left:289.8px;top:134.3px;width:120.2px;height:13.5px;background:linear-gradient(#5e656d,#565d65);border-radius:2px"></div>
<div class="t" style="left:293px;top:135.1px;font-size:12px;color:#1a1e24">音量</div>
<div style="left:413.6px;top:134.3px;width:49px;height:13.5px;background:linear-gradient(#5e656d,#565d65);border-radius:2px"></div>
<div class="t" style="left:426.7px;top:135.8px;font-size:10.5px;color:#a4abb3">0.00</div>
<div style="left:234.5px;top:151.3px;width:300.1px;height:39.8px;background:#333a44"></div>
<div style="left:534.6px;top:151.3px;width:10.7px;height:39.8px;background:#05070a"></div>
<div style="left:207px;top:190.1px;width:338.3px;height:1px;background:#242930"></div>
<div style="left:207px;top:151.3px;width:27.5px;height:39.8px;background:linear-gradient(#d4ee44,#d8ea40)"></div>
<svg style="left:209.3px;top:153.8px" width="14" height="16"><rect x="0.6" y="0.6" width="10.6" height="13.4" fill="rgba(255,255,255,0.25)" stroke="rgba(255,255,255,0.75)" stroke-width="1"/><path d="M2.3 1v12.6M5.9 1v12.6M9.5 1v12.6" stroke="rgba(255,255,255,0.95)" stroke-width="2.1"/></svg>
<div class="t" style="left:226px;top:157.3px;font-size:8.5px;color:#6a7414">6</div>
<div style="left:242px;top:154.3px;width:21.5px;height:14.5px;background:linear-gradient(#f6e070,#e8ca4a 60%,#e0bc3c);border-radius:2px;text-align:center;line-height:14.5px;font-size:12px;font-weight:bold;color:#111;-webkit-text-stroke:0.35px #111;">m</div>
<div style="left:264.7px;top:154.3px;width:20.5px;height:14.5px;background:linear-gradient(#626971,#50575f);border-radius:2px;text-align:center;line-height:14.5px;font-size:11px;font-weight:bold;color:#111;-webkit-text-stroke:0.35px #111;">S</div>
<div class="t" style="left:292.5px;top:153.8px;font-size:14px;color:#e6e9ec">复制于小提琴solo</div>
<div style="left:292px;top:175.3px;width:44.4px;height:13px;background:linear-gradient(#626971,#525961);border-radius:2px"><svg style="left:0;top:0" width="22" height="13"><circle cx="11" cy="6.5" r="3.6" fill="#14181c"/></svg><svg style="left:22px;top:0" width="22" height="13"><path d="M8.5 5.2h2.2l3.4-3v8.6l-3.4-3H8.5z" fill="#14181c"/></svg></div>
<div style="left:341px;top:175.3px;width:44.4px;height:13px;background:linear-gradient(#626971,#525961);border-radius:2px"><svg style="left:0;top:0" width="22" height="13"><text x="11" y="10.8" font-size="14.5" font-style="italic" font-weight="bold" font-family="Liberation Sans,sans-serif" text-anchor="middle" fill="#1c2026">e</text></svg><svg style="left:22px;top:0" width="22" height="13"><path d="M7 2.2v8.3M11.2 2.2v8.3M15.4 2.2v8.3M6.2 10.2h10" stroke="#14181c" stroke-width="1.5" fill="none"/><path d="M7 2.2v5M11.2 2.2v5M15.4 2.2v5" stroke="#14181c" stroke-width="2.5"/></svg></div>
<div style="left:389.7px;top:175.3px;width:44px;height:13px;background:linear-gradient(#626971,#525961);border-radius:2px"></div><div style="left:389.7px;top:175.3px;width:22px;height:13px;background:linear-gradient(#48d060,#22b040);border-radius:2px;box-shadow:0 0 3px #40ff70"></div><div class="t" style="left:395.7px;top:176px;font-size:11.5px;font-weight:bold;color:#14181c;transform:scaleX(1.2);transform-origin:0 0;-webkit-text-stroke:0.4px #14181c">R</div><div class="t" style="left:416.7px;top:175.1px;font-size:12.5px;font-weight:bold;color:#14181c;transform:scaleX(1.15);transform-origin:0 0;-webkit-text-stroke:0.4px #14181c">w</div>
<div style="left:234.5px;top:191.1px;width:300.1px;height:22.4px;background:#333a44"></div>
<div style="left:534.6px;top:191.1px;width:10.7px;height:22.4px;background:#05070a"></div>
<div style="left:207px;top:212.5px;width:338.3px;height:1px;background:#242930"></div>
<div style="left:207px;top:191.1px;width:10.5px;height:22.4px;background:#15181c"></div>
<div style="left:217.5px;top:191.1px;width:17px;height:22.4px;background:linear-gradient(#daec44,#dde848)"></div>
<div style="left:242px;top:195.6px;width:21.3px;height:13.5px;background:linear-gradient(#48d060,#22b040);border-radius:2px;text-align:center;line-height:13.5px;font-size:11px;font-weight:bold;color:#111;-webkit-text-stroke:0.35px #111;box-shadow:0 0 3px #40ff70"></div>
<div class="t" style="left:248px;top:196.8px;font-size:11.5px;font-weight:bold;color:#08200c;transform:scaleX(1.2);transform-origin:0 0;-webkit-text-stroke:0.4px #08200c">R</div>
<div style="left:264.7px;top:195.6px;width:20.5px;height:13.5px;background:linear-gradient(#626971,#50575f);border-radius:2px;text-align:center;line-height:13.5px;font-size:11px;font-weight:bold;color:#111;-webkit-text-stroke:0.35px #111;"></div>
<div class="t" style="left:269.8px;top:195.7px;font-size:12.5px;font-weight:bold;color:#14181c;transform:scaleX(1.15);transform-origin:0 0;-webkit-text-stroke:0.4px #14181c">w</div>
<div style="left:289.8px;top:195.6px;width:120.2px;height:13.5px;background:linear-gradient(#5e656d,#565d65);border-radius:2px"></div>
<div class="t" style="left:293px;top:196.4px;font-size:12px;color:#1a1e24">音量</div>
<div style="left:413.6px;top:195.6px;width:49px;height:13.5px;background:linear-gradient(#5e656d,#565d65);border-radius:2px"></div>
<div class="t" style="left:426.7px;top:197.1px;font-size:10.5px;color:#a4abb3">0.00</div>
<div style="left:234.5px;top:213.5px;width:300.1px;height:40.5px;background:#333a44"></div>
<div style="left:534.6px;top:213.5px;width:10.7px;height:40.5px;background:#05070a"></div>
<div style="left:207px;top:253px;width:338.3px;height:1px;background:#242930"></div>
<div style="left:207px;top:213.5px;width:27.5px;height:40.5px;background:linear-gradient(#f0c838,#f0b830)"></div>
<svg style="left:209.3px;top:216.0px" width="14" height="16"><rect x="0.6" y="0.6" width="10.6" height="13.4" fill="rgba(255,255,255,0.25)" stroke="rgba(255,255,255,0.75)" stroke-width="1"/><path d="M2.3 1v12.6M5.9 1v12.6M9.5 1v12.6" stroke="rgba(255,255,255,0.95)" stroke-width="2.1"/></svg>
<div class="t" style="left:226px;top:219.5px;font-size:8.5px;color:#6a4c08">7</div>
<div style="left:242px;top:216.5px;width:21.5px;height:14.5px;background:linear-gradient(#f6e070,#e8ca4a 60%,#e0bc3c);border-radius:2px;text-align:center;line-height:14.5px;font-size:12px;font-weight:bold;color:#111;-webkit-text-stroke:0.35px #111;">m</div>
<div style="left:264.7px;top:216.5px;width:20.5px;height:14.5px;background:linear-gradient(#626971,#50575f);border-radius:2px;text-align:center;line-height:14.5px;font-size:11px;font-weight:bold;color:#111;-webkit-text-stroke:0.35px #111;">S</div>
<div class="t" style="left:292.5px;top:216px;font-size:14px;color:#e6e9ec">小提琴复调</div>
<div style="left:292px;top:237.5px;width:44.4px;height:13px;background:linear-gradient(#626971,#525961);border-radius:2px"><svg style="left:0;top:0" width="22" height="13"><circle cx="11" cy="6.5" r="3.6" fill="#14181c"/></svg><svg style="left:22px;top:0" width="22" height="13"><path d="M8.5 5.2h2.2l3.4-3v8.6l-3.4-3H8.5z" fill="#14181c"/></svg></div>
<div style="left:341px;top:237.5px;width:44.4px;height:13px;background:linear-gradient(#626971,#525961);border-radius:2px"><svg style="left:0;top:0" width="22" height="13"><text x="11" y="10.8" font-size="14.5" font-style="italic" font-weight="bold" font-family="Liberation Sans,sans-serif" text-anchor="middle" fill="#1c2026">e</text></svg><svg style="left:22px;top:0" width="22" height="13"><path d="M7 2.2v8.3M11.2 2.2v8.3M15.4 2.2v8.3M6.2 10.2h10" stroke="#14181c" stroke-width="1.5" fill="none"/><path d="M7 2.2v5M11.2 2.2v5M15.4 2.2v5" stroke="#14181c" stroke-width="2.5"/></svg></div>
<div style="left:389.7px;top:237.5px;width:44px;height:13px;background:linear-gradient(#626971,#525961);border-radius:2px"></div><div style="left:389.7px;top:237.5px;width:22px;height:13px;background:linear-gradient(#48d060,#22b040);border-radius:2px;box-shadow:0 0 3px #40ff70"></div><div class="t" style="left:395.7px;top:238.2px;font-size:11.5px;font-weight:bold;color:#14181c;transform:scaleX(1.2);transform-origin:0 0;-webkit-text-stroke:0.4px #14181c">R</div><div class="t" style="left:416.7px;top:237.3px;font-size:12.5px;font-weight:bold;color:#14181c;transform:scaleX(1.15);transform-origin:0 0;-webkit-text-stroke:0.4px #14181c">w</div>
<div style="left:234.5px;top:254px;width:300.1px;height:40.7px;background:#333a44"></div>
<div style="left:534.6px;top:254px;width:10.7px;height:40.7px;background:#05070a"></div>
<div style="left:207px;top:293.7px;width:338.3px;height:1px;background:#242930"></div>
<div style="left:207px;top:254px;width:10.5px;height:40.7px;background:#15181c"></div>
<div style="left:217.5px;top:254px;width:17px;height:40.7px;background:linear-gradient(#f2b834,#f0a634)"></div>
<div style="left:242px;top:258.5px;width:21.3px;height:13.5px;background:linear-gradient(#48d060,#22b040);border-radius:2px;text-align:center;line-height:13.5px;font-size:11px;font-weight:bold;color:#111;-webkit-text-stroke:0.35px #111;box-shadow:0 0 3px #40ff70"></div>
<div class="t" style="left:248px;top:259.7px;font-size:11.5px;font-weight:bold;color:#08200c;transform:scaleX(1.2);transform-origin:0 0;-webkit-text-stroke:0.4px #08200c">R</div>
<div style="left:264.7px;top:258.5px;width:20.5px;height:13.5px;background:linear-gradient(#626971,#50575f);border-radius:2px;text-align:center;line-height:13.5px;font-size:11px;font-weight:bold;color:#111;-webkit-text-stroke:0.35px #111;"></div>
<div class="t" style="left:269.8px;top:258.6px;font-size:12.5px;font-weight:bold;color:#14181c;transform:scaleX(1.15);transform-origin:0 0;-webkit-text-stroke:0.4px #14181c">w</div>
<div style="left:289.8px;top:258.5px;width:120.2px;height:13.5px;background:linear-gradient(#5e656d,#565d65);border-radius:2px"></div>
<div class="t" style="left:293px;top:259.3px;font-size:12px;color:#1a1e24">音量</div>
<div style="left:413.6px;top:258.5px;width:49px;height:13.5px;background:linear-gradient(#5e656d,#565d65);border-radius:2px"></div>
<div class="t" style="left:426.7px;top:260px;font-size:10.5px;color:#a4abb3">0.00</div>
<div style="left:242px;top:278.5px;width:21.3px;height:12px;background:linear-gradient(#626971,#50575f);border-radius:2px;text-align:center;line-height:12px;font-size:11px;font-weight:bold;color:#111;-webkit-text-stroke:0.35px #111;"></div>
<svg style="left:247px;top:281px" width="12" height="8"><path d="M2.5 0.5v6M6 0.5v6M9.5 0.5v6" stroke="#14181c" stroke-width="1.8"/></svg>
<div style="left:234.5px;top:294.7px;width:300.1px;height:41.3px;background:#333a44"></div>
<div style="left:534.6px;top:294.7px;width:10.7px;height:41.3px;background:#05070a"></div>
<div style="left:207px;top:335px;width:338.3px;height:1px;background:#242930"></div>
<div style="left:207px;top:294.7px;width:27.5px;height:41.3px;background:linear-gradient(#f08a38,#ee7430)"></div>
<svg style="left:209.3px;top:297.2px" width="14" height="16"><rect x="0.6" y="0.6" width="10.6" height="13.4" fill="rgba(255,255,255,0.25)" stroke="rgba(255,255,255,0.75)" stroke-width="1"/><path d="M2.3 1v12.6M5.9 1v12.6M9.5 1v12.6" stroke="rgba(255,255,255,0.95)" stroke-width="2.1"/></svg>
<div class="t" style="left:226px;top:300.7px;font-size:8.5px;color:#7a3408">8</div>
<div style="left:242px;top:297.7px;width:21.5px;height:14.5px;background:linear-gradient(#f6e070,#e8ca4a 60%,#e0bc3c);border-radius:2px;text-align:center;line-height:14.5px;font-size:12px;font-weight:bold;color:#111;-webkit-text-stroke:0.35px #111;">m</div>
<div style="left:264.7px;top:297.7px;width:20.5px;height:14.5px;background:linear-gradient(#626971,#50575f);border-radius:2px;text-align:center;line-height:14.5px;font-size:11px;font-weight:bold;color:#111;-webkit-text-stroke:0.35px #111;">S</div>
<div class="t" style="left:292.5px;top:297.2px;font-size:14px;color:#e6e9ec">弦乐铺底</div>
<div style="left:292px;top:318.7px;width:44.4px;height:13px;background:linear-gradient(#626971,#525961);border-radius:2px"><svg style="left:0;top:0" width="22" height="13"><circle cx="11" cy="6.5" r="3.6" fill="#14181c"/></svg><svg style="left:22px;top:0" width="22" height="13"><path d="M8.5 5.2h2.2l3.4-3v8.6l-3.4-3H8.5z" fill="#14181c"/></svg></div>
<div style="left:341px;top:318.7px;width:44.4px;height:13px;background:linear-gradient(#626971,#525961);border-radius:2px"><svg style="left:0;top:0" width="22" height="13"><text x="11" y="10.8" font-size="14.5" font-style="italic" font-weight="bold" font-family="Liberation Sans,sans-serif" text-anchor="middle" fill="#1c2026">e</text></svg><svg style="left:22px;top:0" width="22" height="13"><path d="M7 2.2v8.3M11.2 2.2v8.3M15.4 2.2v8.3M6.2 10.2h10" stroke="#14181c" stroke-width="1.5" fill="none"/><path d="M7 2.2v5M11.2 2.2v5M15.4 2.2v5" stroke="#14181c" stroke-width="2.5"/></svg></div>
<div style="left:389.7px;top:318.7px;width:44px;height:13px;background:linear-gradient(#626971,#525961);border-radius:2px"></div><div style="left:389.7px;top:318.7px;width:22px;height:13px;background:linear-gradient(#48d060,#22b040);border-radius:2px;box-shadow:0 0 3px #40ff70"></div><div class="t" style="left:395.7px;top:319.4px;font-size:11.5px;font-weight:bold;color:#14181c;transform:scaleX(1.2);transform-origin:0 0;-webkit-text-stroke:0.4px #14181c">R</div><div class="t" style="left:416.7px;top:318.5px;font-size:12.5px;font-weight:bold;color:#14181c;transform:scaleX(1.15);transform-origin:0 0;-webkit-text-stroke:0.4px #14181c">w</div>
<div style="left:234.5px;top:336px;width:300.1px;height:22px;background:#333a44"></div>
<div style="left:534.6px;top:336px;width:10.7px;height:22px;background:#05070a"></div>
<div style="left:207px;top:357px;width:338.3px;height:1px;background:#242930"></div>
<div style="left:207px;top:336px;width:10.5px;height:22px;background:#15181c"></div>
<div style="left:217.5px;top:336px;width:17px;height:22px;background:linear-gradient(#ee7834,#ec6a34)"></div>
<div style="left:242px;top:340.5px;width:21.3px;height:13.5px;background:linear-gradient(#48d060,#22b040);border-radius:2px;text-align:center;line-height:13.5px;font-size:11px;font-weight:bold;color:#111;-webkit-text-stroke:0.35px #111;box-shadow:0 0 3px #40ff70"></div>
<div class="t" style="left:248px;top:341.7px;font-size:11.5px;font-weight:bold;color:#08200c;transform:scaleX(1.2);transform-origin:0 0;-webkit-text-stroke:0.4px #08200c">R</div>
<div style="left:264.7px;top:340.5px;width:20.5px;height:13.5px;background:linear-gradient(#626971,#50575f);border-radius:2px;text-align:center;line-height:13.5px;font-size:11px;font-weight:bold;color:#111;-webkit-text-stroke:0.35px #111;"></div>
<div class="t" style="left:269.8px;top:340.6px;font-size:12.5px;font-weight:bold;color:#14181c;transform:scaleX(1.15);transform-origin:0 0;-webkit-text-stroke:0.4px #14181c">w</div>
<div style="left:289.8px;top:340.5px;width:120.2px;height:13.5px;background:linear-gradient(#5e656d,#565d65);border-radius:2px"></div>
<div class="t" style="left:293px;top:341.3px;font-size:12px;color:#1a1e24">音量</div>
<div style="left:413.6px;top:340.5px;width:49px;height:13.5px;background:linear-gradient(#5e656d,#565d65);border-radius:2px"></div>
<div class="t" style="left:426.7px;top:342px;font-size:10.5px;color:#a4abb3">0.00</div>
<div style="left:234.5px;top:358px;width:300.1px;height:41.2px;background:#333a44"></div>
<div style="left:534.6px;top:358px;width:10.7px;height:41.2px;background:#05070a"></div>
<div style="left:207px;top:398.2px;width:338.3px;height:1px;background:#242930"></div>
<div style="left:207px;top:358px;width:27.5px;height:41.2px;background:linear-gradient(#ea3a3c,#e62c3c)"></div>
<svg style="left:209.3px;top:360.5px" width="14" height="16"><rect x="0.6" y="0.6" width="10.6" height="13.4" fill="rgba(255,255,255,0.25)" stroke="rgba(255,255,255,0.75)" stroke-width="1"/><path d="M2.3 1v12.6M5.9 1v12.6M9.5 1v12.6" stroke="rgba(255,255,255,0.95)" stroke-width="2.1"/></svg>
<div class="t" style="left:226px;top:364px;font-size:8.5px;color:#7a1014">9</div>
<div style="left:242px;top:361px;width:21.5px;height:14.5px;background:linear-gradient(#f6e070,#e8ca4a 60%,#e0bc3c);border-radius:2px;text-align:center;line-height:14.5px;font-size:12px;font-weight:bold;color:#111;-webkit-text-stroke:0.35px #111;">m</div>
<div style="left:264.7px;top:361px;width:20.5px;height:14.5px;background:linear-gradient(#626971,#50575f);border-radius:2px;text-align:center;line-height:14.5px;font-size:11px;font-weight:bold;color:#111;-webkit-text-stroke:0.35px #111;">S</div>
<div class="t" style="left:292.5px;top:360.5px;font-size:14px;color:#e6e9ec">木吉他扫弦</div>
<div style="left:292px;top:382px;width:44.4px;height:13px;background:linear-gradient(#626971,#525961);border-radius:2px"><svg style="left:0;top:0" width="22" height="13"><circle cx="11" cy="6.5" r="3.6" fill="#14181c"/></svg><svg style="left:22px;top:0" width="22" height="13"><path d="M8.5 5.2h2.2l3.4-3v8.6l-3.4-3H8.5z" fill="#14181c"/></svg></div>
<div style="left:341px;top:382px;width:44.4px;height:13px;background:linear-gradient(#626971,#525961);border-radius:2px"><svg style="left:0;top:0" width="22" height="13"><text x="11" y="10.8" font-size="14.5" font-style="italic" font-weight="bold" font-family="Liberation Sans,sans-serif" text-anchor="middle" fill="#1c2026">e</text></svg><svg style="left:22px;top:0" width="22" height="13"><path d="M7 2.2v8.3M11.2 2.2v8.3M15.4 2.2v8.3M6.2 10.2h10" stroke="#14181c" stroke-width="1.5" fill="none"/><path d="M7 2.2v5M11.2 2.2v5M15.4 2.2v5" stroke="#14181c" stroke-width="2.5"/></svg></div>
<div style="left:389.7px;top:382px;width:44px;height:13px;background:linear-gradient(#626971,#525961);border-radius:2px"></div><div class="t" style="left:395.7px;top:382.7px;font-size:11.5px;font-weight:bold;color:#14181c;transform:scaleX(1.2);transform-origin:0 0;-webkit-text-stroke:0.4px #14181c">R</div><div class="t" style="left:416.7px;top:381.8px;font-size:12.5px;font-weight:bold;color:#14181c;transform:scaleX(1.15);transform-origin:0 0;-webkit-text-stroke:0.4px #14181c">w</div>
<div style="left:234.5px;top:399.2px;width:300.1px;height:40.4px;background:#333a44"></div>
<div style="left:534.6px;top:399.2px;width:10.7px;height:40.4px;background:#05070a"></div>
<div style="left:207px;top:438.6px;width:338.3px;height:1px;background:#242930"></div>
<div style="left:207px;top:399.2px;width:27.5px;height:40.4px;background:linear-gradient(#ea3470,#e82c80)"></div>
<svg style="left:209.3px;top:401.7px" width="14" height="16"><rect x="0.6" y="0.6" width="10.6" height="13.4" fill="rgba(255,255,255,0.25)" stroke="rgba(255,255,255,0.75)" stroke-width="1"/><path d="M2.3 1v12.6M5.9 1v12.6M9.5 1v12.6" stroke="rgba(255,255,255,0.95)" stroke-width="2.1"/></svg>
<div class="t" style="left:224px;top:405.2px;font-size:8.5px;color:#7a1038">10</div>
<div style="left:242px;top:402.2px;width:21.5px;height:14.5px;background:linear-gradient(#f6e070,#e8ca4a 60%,#e0bc3c);border-radius:2px;text-align:center;line-height:14.5px;font-size:12px;font-weight:bold;color:#111;-webkit-text-stroke:0.35px #111;">m</div>
<div style="left:264.7px;top:402.2px;width:20.5px;height:14.5px;background:linear-gradient(#626971,#50575f);border-radius:2px;text-align:center;line-height:14.5px;font-size:11px;font-weight:bold;color:#111;-webkit-text-stroke:0.35px #111;">S</div>
<div class="t" style="left:292.5px;top:401.7px;font-size:14px;color:#e6e9ec">电吉他</div>
<div style="left:292px;top:423.2px;width:44.4px;height:13px;background:linear-gradient(#626971,#525961);border-radius:2px"><svg style="left:0;top:0" width="22" height="13"><circle cx="11" cy="6.5" r="3.6" fill="#14181c"/></svg><svg style="left:22px;top:0" width="22" height="13"><path d="M8.5 5.2h2.2l3.4-3v8.6l-3.4-3H8.5z" fill="#14181c"/></svg></div>
<div style="left:341px;top:423.2px;width:44.4px;height:13px;background:linear-gradient(#626971,#525961);border-radius:2px"><svg style="left:0;top:0" width="22" height="13"><text x="11" y="10.8" font-size="14.5" font-style="italic" font-weight="bold" font-family="Liberation Sans,sans-serif" text-anchor="middle" fill="#1c2026">e</text></svg><svg style="left:22px;top:0" width="22" height="13"><path d="M7 2.2v8.3M11.2 2.2v8.3M15.4 2.2v8.3M6.2 10.2h10" stroke="#14181c" stroke-width="1.5" fill="none"/><path d="M7 2.2v5M11.2 2.2v5M15.4 2.2v5" stroke="#14181c" stroke-width="2.5"/></svg></div>
<div style="left:389.7px;top:423.2px;width:44px;height:13px;background:linear-gradient(#626971,#525961);border-radius:2px"></div><div style="left:389.7px;top:423.2px;width:22px;height:13px;background:linear-gradient(#48d060,#22b040);border-radius:2px;box-shadow:0 0 3px #40ff70"></div><div class="t" style="left:395.7px;top:423.9px;font-size:11.5px;font-weight:bold;color:#14181c;transform:scaleX(1.2);transform-origin:0 0;-webkit-text-stroke:0.4px #14181c">R</div><div class="t" style="left:416.7px;top:423px;font-size:12.5px;font-weight:bold;color:#14181c;transform:scaleX(1.15);transform-origin:0 0;-webkit-text-stroke:0.4px #14181c">w</div>
<div style="left:234.5px;top:439.6px;width:300.1px;height:21.4px;background:#333a44"></div>
<div style="left:534.6px;top:439.6px;width:10.7px;height:21.4px;background:#05070a"></div>
<div style="left:207px;top:460px;width:338.3px;height:1px;background:#242930"></div>
<div style="left:207px;top:439.6px;width:10.5px;height:21.4px;background:#15181c"></div>
<div style="left:217.5px;top:439.6px;width:17px;height:21.4px;background:linear-gradient(#e83480,#e4308c)"></div>
<div style="left:242px;top:444.1px;width:21.3px;height:13.5px;background:linear-gradient(#48d060,#22b040);border-radius:2px;text-align:center;line-height:13.5px;font-size:11px;font-weight:bold;color:#111;-webkit-text-stroke:0.35px #111;box-shadow:0 0 3px #40ff70"></div>
<div class="t" style="left:248px;top:445.3px;font-size:11.5px;font-weight:bold;color:#08200c;transform:scaleX(1.2);transform-origin:0 0;-webkit-text-stroke:0.4px #08200c">R</div>
<div style="left:264.7px;top:444.1px;width:20.5px;height:13.5px;background:linear-gradient(#626971,#50575f);border-radius:2px;text-align:center;line-height:13.5px;font-size:11px;font-weight:bold;color:#111;-webkit-text-stroke:0.35px #111;"></div>
<div class="t" style="left:269.8px;top:444.2px;font-size:12.5px;font-weight:bold;color:#14181c;transform:scaleX(1.15);transform-origin:0 0;-webkit-text-stroke:0.4px #14181c">w</div>
<div style="left:289.8px;top:444.1px;width:120.2px;height:13.5px;background:linear-gradient(#5e656d,#565d65);border-radius:2px"></div>
<div class="t" style="left:293px;top:444.9px;font-size:12px;color:#1a1e24">Panner - 左-右</div>
<div style="left:413.6px;top:444.1px;width:49px;height:13.5px;background:linear-gradient(#5e656d,#565d65);border-radius:2px"></div>
<div class="t" style="left:436px;top:445.6px;font-size:10.5px;color:#a4abb3">C</div>
<div style="left:234.5px;top:461px;width:300.1px;height:41.4px;background:#333a44"></div>
<div style="left:534.6px;top:461px;width:10.7px;height:41.4px;background:#05070a"></div>
<div style="left:207px;top:501.4px;width:338.3px;height:1px;background:#242930"></div>
<div style="left:207px;top:461px;width:27.5px;height:41.4px;background:linear-gradient(#e634b0,#de38c0)"></div>
<svg style="left:209.3px;top:463.5px" width="14" height="16"><rect x="0.6" y="0.6" width="10.6" height="13.4" fill="rgba(255,255,255,0.25)" stroke="rgba(255,255,255,0.75)" stroke-width="1"/><path d="M2.3 1v12.6M5.9 1v12.6M9.5 1v12.6" stroke="rgba(255,255,255,0.95)" stroke-width="2.1"/></svg>
<div class="t" style="left:224px;top:467px;font-size:8.5px;color:#7a1060">11</div>
<div style="left:242px;top:464px;width:21.5px;height:14.5px;background:linear-gradient(#f6e070,#e8ca4a 60%,#e0bc3c);border-radius:2px;text-align:center;line-height:14.5px;font-size:12px;font-weight:bold;color:#111;-webkit-text-stroke:0.35px #111;">m</div>
<div style="left:264.7px;top:464px;width:20.5px;height:14.5px;background:linear-gradient(#626971,#50575f);border-radius:2px;text-align:center;line-height:14.5px;font-size:11px;font-weight:bold;color:#111;-webkit-text-stroke:0.35px #111;">S</div>
<div class="t" style="left:292.5px;top:463.5px;font-size:14px;color:#e6e9ec">滚擦</div>
<div style="left:292px;top:485px;width:44.4px;height:13px;background:linear-gradient(#626971,#525961);border-radius:2px"><svg style="left:0;top:0" width="22" height="13"><circle cx="11" cy="6.5" r="3.6" fill="#14181c"/></svg><svg style="left:22px;top:0" width="22" height="13"><path d="M8.5 5.2h2.2l3.4-3v8.6l-3.4-3H8.5z" fill="#14181c"/></svg></div>
<div style="left:341px;top:485px;width:44.4px;height:13px;background:linear-gradient(#626971,#525961);border-radius:2px"><svg style="left:0;top:0" width="22" height="13"><text x="11" y="10.8" font-size="14.5" font-style="italic" font-weight="bold" font-family="Liberation Sans,sans-serif" text-anchor="middle" fill="#1c2026">e</text></svg><svg style="left:22px;top:0" width="22" height="13"><path d="M7 2.2v8.3M11.2 2.2v8.3M15.4 2.2v8.3M6.2 10.2h10" stroke="#14181c" stroke-width="1.5" fill="none"/><path d="M7 2.2v5M11.2 2.2v5M15.4 2.2v5" stroke="#14181c" stroke-width="2.5"/></svg></div>
<div style="left:389.7px;top:485px;width:44px;height:13px;background:linear-gradient(#626971,#525961);border-radius:2px"></div><div class="t" style="left:395.7px;top:485.7px;font-size:11.5px;font-weight:bold;color:#14181c;transform:scaleX(1.2);transform-origin:0 0;-webkit-text-stroke:0.4px #14181c">R</div><div class="t" style="left:416.7px;top:484.8px;font-size:12.5px;font-weight:bold;color:#14181c;transform:scaleX(1.15);transform-origin:0 0;-webkit-text-stroke:0.4px #14181c">w</div>
<div style="left:234.5px;top:502.4px;width:300.1px;height:40.8px;background:#333a44"></div>
<div style="left:534.6px;top:502.4px;width:10.7px;height:40.8px;background:#05070a"></div>
<div style="left:207px;top:542.2px;width:338.3px;height:1px;background:#242930"></div>
<div style="left:207px;top:502.4px;width:27.5px;height:40.8px;background:linear-gradient(#d83cc8,#c444d8)"></div>
<svg style="left:209.3px;top:504.9px" width="14" height="16"><rect x="0.6" y="0.6" width="10.6" height="13.4" fill="rgba(255,255,255,0.25)" stroke="rgba(255,255,255,0.75)" stroke-width="1"/><path d="M2.3 1v12.6M5.9 1v12.6M9.5 1v12.6" stroke="rgba(255,255,255,0.95)" stroke-width="2.1"/></svg>
<div class="t" style="left:224px;top:508.4px;font-size:8.5px;color:#6a186c">12</div>
<div style="left:242px;top:505.4px;width:21.5px;height:14.5px;background:linear-gradient(#f6e070,#e8ca4a 60%,#e0bc3c);border-radius:2px;text-align:center;line-height:14.5px;font-size:12px;font-weight:bold;color:#111;-webkit-text-stroke:0.35px #111;">m</div>
<div style="left:264.7px;top:505.4px;width:20.5px;height:14.5px;background:linear-gradient(#626971,#50575f);border-radius:2px;text-align:center;line-height:14.5px;font-size:11px;font-weight:bold;color:#111;-webkit-text-stroke:0.35px #111;">S</div>
<div class="t" style="left:292.5px;top:504.9px;font-size:14px;color:#e6e9ec">和声</div>
<div style="left:292px;top:526.4px;width:44.4px;height:13px;background:linear-gradient(#626971,#525961);border-radius:2px"><svg style="left:0;top:0" width="22" height="13"><circle cx="11" cy="6.5" r="3.6" fill="#14181c"/></svg><svg style="left:22px;top:0" width="22" height="13"><path d="M8.5 5.2h2.2l3.4-3v8.6l-3.4-3H8.5z" fill="#14181c"/></svg></div>
<div style="left:341px;top:526.4px;width:44.4px;height:13px;background:linear-gradient(#626971,#525961);border-radius:2px"><svg style="left:0;top:0" width="22" height="13"><text x="11" y="10.8" font-size="14.5" font-style="italic" font-weight="bold" font-family="Liberation Sans,sans-serif" text-anchor="middle" fill="#1c2026">e</text></svg><svg style="left:22px;top:0" width="22" height="13"><path d="M7 2.2v8.3M11.2 2.2v8.3M15.4 2.2v8.3M6.2 10.2h10" stroke="#14181c" stroke-width="1.5" fill="none"/><path d="M7 2.2v5M11.2 2.2v5M15.4 2.2v5" stroke="#14181c" stroke-width="2.5"/></svg></div>
<div style="left:389.7px;top:526.4px;width:44px;height:13px;background:linear-gradient(#626971,#525961);border-radius:2px"></div><div class="t" style="left:395.7px;top:527.1px;font-size:11.5px;font-weight:bold;color:#14181c;transform:scaleX(1.2);transform-origin:0 0;-webkit-text-stroke:0.4px #14181c">R</div><div class="t" style="left:416.7px;top:526.2px;font-size:12.5px;font-weight:bold;color:#14181c;transform:scaleX(1.15);transform-origin:0 0;-webkit-text-stroke:0.4px #14181c">w</div>
<div style="left:234.5px;top:543.2px;width:300.1px;height:40.8px;background:#333a44"></div>
<div style="left:534.6px;top:543.2px;width:10.7px;height:40.8px;background:#05070a"></div>
<div style="left:207px;top:583px;width:338.3px;height:1px;background:#242930"></div>
<div style="left:207px;top:543.2px;width:27.5px;height:40.8px;background:linear-gradient(#b850de,#a25ce6)"></div>
<svg style="left:209.3px;top:545.7px" width="14" height="16"><rect x="0.6" y="0.6" width="10.6" height="13.4" fill="rgba(255,255,255,0.25)" stroke="rgba(255,255,255,0.75)" stroke-width="1"/><path d="M2.3 1v12.6M5.9 1v12.6M9.5 1v12.6" stroke="rgba(255,255,255,0.95)" stroke-width="2.1"/></svg>
<div class="t" style="left:224px;top:549.2px;font-size:8.5px;color:#501a78">13</div>
<div style="left:242px;top:546.2px;width:21.5px;height:14.5px;background:linear-gradient(#f6e070,#e8ca4a 60%,#e0bc3c);border-radius:2px;text-align:center;line-height:14.5px;font-size:12px;font-weight:bold;color:#111;-webkit-text-stroke:0.35px #111;">m</div>
<div style="left:264.7px;top:546.2px;width:20.5px;height:14.5px;background:linear-gradient(#626971,#50575f);border-radius:2px;text-align:center;line-height:14.5px;font-size:11px;font-weight:bold;color:#111;-webkit-text-stroke:0.35px #111;">S</div>
<div class="t" style="left:292.5px;top:545.7px;font-size:14px;color:#e6e9ec">和声2</div>
<div style="left:292px;top:567.2px;width:44.4px;height:13px;background:linear-gradient(#626971,#525961);border-radius:2px"><svg style="left:0;top:0" width="22" height="13"><circle cx="11" cy="6.5" r="3.6" fill="#14181c"/></svg><svg style="left:22px;top:0" width="22" height="13"><path d="M8.5 5.2h2.2l3.4-3v8.6l-3.4-3H8.5z" fill="#14181c"/></svg></div>
<div style="left:341px;top:567.2px;width:44.4px;height:13px;background:linear-gradient(#626971,#525961);border-radius:2px"><svg style="left:0;top:0" width="22" height="13"><text x="11" y="10.8" font-size="14.5" font-style="italic" font-weight="bold" font-family="Liberation Sans,sans-serif" text-anchor="middle" fill="#1c2026">e</text></svg><svg style="left:22px;top:0" width="22" height="13"><path d="M7 2.2v8.3M11.2 2.2v8.3M15.4 2.2v8.3M6.2 10.2h10" stroke="#14181c" stroke-width="1.5" fill="none"/><path d="M7 2.2v5M11.2 2.2v5M15.4 2.2v5" stroke="#14181c" stroke-width="2.5"/></svg></div>
<div style="left:389.7px;top:567.2px;width:44px;height:13px;background:linear-gradient(#626971,#525961);border-radius:2px"></div><div style="left:389.7px;top:567.2px;width:22px;height:13px;background:linear-gradient(#48d060,#22b040);border-radius:2px;box-shadow:0 0 3px #40ff70"></div><div class="t" style="left:395.7px;top:567.9px;font-size:11.5px;font-weight:bold;color:#14181c;transform:scaleX(1.2);transform-origin:0 0;-webkit-text-stroke:0.4px #14181c">R</div><div class="t" style="left:416.7px;top:567px;font-size:12.5px;font-weight:bold;color:#14181c;transform:scaleX(1.15);transform-origin:0 0;-webkit-text-stroke:0.4px #14181c">w</div>
<div style="left:234.5px;top:584px;width:300.1px;height:41px;background:#333a44"></div>
<div style="left:534.6px;top:584px;width:10.7px;height:41px;background:#05070a"></div>
<div style="left:207px;top:624px;width:338.3px;height:1px;background:#242930"></div>
<div style="left:207px;top:584px;width:10.5px;height:41px;background:#15181c"></div>
<div style="left:217.5px;top:584px;width:17px;height:41px;background:linear-gradient(#a65ae6,#985ee8)"></div>
<div style="left:242px;top:588.5px;width:21.3px;height:13.5px;background:linear-gradient(#48d060,#22b040);border-radius:2px;text-align:center;line-height:13.5px;font-size:11px;font-weight:bold;color:#111;-webkit-text-stroke:0.35px #111;box-shadow:0 0 3px #40ff70"></div>
<div class="t" style="left:248px;top:589.7px;font-size:11.5px;font-weight:bold;color:#08200c;transform:scaleX(1.2);transform-origin:0 0;-webkit-text-stroke:0.4px #08200c">R</div>
<div style="left:264.7px;top:588.5px;width:20.5px;height:13.5px;background:linear-gradient(#626971,#50575f);border-radius:2px;text-align:center;line-height:13.5px;font-size:11px;font-weight:bold;color:#111;-webkit-text-stroke:0.35px #111;"></div>
<div class="t" style="left:269.8px;top:588.6px;font-size:12.5px;font-weight:bold;color:#14181c;transform:scaleX(1.15);transform-origin:0 0;-webkit-text-stroke:0.4px #14181c">w</div>
<div style="left:289.8px;top:588.5px;width:120.2px;height:13.5px;background:linear-gradient(#5e656d,#565d65);border-radius:2px"></div>
<div class="t" style="left:293px;top:589.3px;font-size:12px;color:#1a1e24">音量</div>
<div style="left:413.6px;top:588.5px;width:49px;height:13.5px;background:linear-gradient(#5e656d,#565d65);border-radius:2px"></div>
<div class="t" style="left:426.7px;top:590px;font-size:10.5px;color:#a4abb3">0.00</div>
<div style="left:242px;top:608.5px;width:21.3px;height:12px;background:linear-gradient(#626971,#50575f);border-radius:2px;text-align:center;line-height:12px;font-size:11px;font-weight:bold;color:#111;-webkit-text-stroke:0.35px #111;"></div>
<svg style="left:247px;top:611px" width="12" height="8"><path d="M2.5 0.5v6M6 0.5v6M9.5 0.5v6" stroke="#14181c" stroke-width="1.8"/></svg>
<div style="left:234.5px;top:625px;width:300.1px;height:40.7px;background:#333a44"></div>
<div style="left:534.6px;top:625px;width:10.7px;height:40.7px;background:#05070a"></div>
<div style="left:207px;top:664.7px;width:338.3px;height:1px;background:#242930"></div>
<div style="left:207px;top:625px;width:27.5px;height:40.7px;background:linear-gradient(#8a62f0,#6e6cf4)"></div>
<svg style="left:209.3px;top:627.5px" width="14" height="16"><rect x="0.6" y="0.6" width="10.6" height="13.4" fill="rgba(255,255,255,0.25)" stroke="rgba(255,255,255,0.75)" stroke-width="1"/><path d="M2.3 1v12.6M5.9 1v12.6M9.5 1v12.6" stroke="rgba(255,255,255,0.95)" stroke-width="2.1"/></svg>
<div class="t" style="left:224px;top:631px;font-size:8.5px;color:#2c2090">14</div>
<div style="left:242px;top:628px;width:21.5px;height:14.5px;background:linear-gradient(#f6e070,#e8ca4a 60%,#e0bc3c);border-radius:2px;text-align:center;line-height:14.5px;font-size:12px;font-weight:bold;color:#111;-webkit-text-stroke:0.35px #111;">m</div>
<div style="left:264.7px;top:628px;width:20.5px;height:14.5px;background:linear-gradient(#626971,#50575f);border-radius:2px;text-align:center;line-height:14.5px;font-size:11px;font-weight:bold;color:#111;-webkit-text-stroke:0.35px #111;">S</div>
<div class="t" style="left:292.5px;top:627.5px;font-size:14px;color:#e6e9ec">大提琴</div>
<div style="left:292px;top:649px;width:44.4px;height:13px;background:linear-gradient(#626971,#525961);border-radius:2px"><svg style="left:0;top:0" width="22" height="13"><circle cx="11" cy="6.5" r="3.6" fill="#14181c"/></svg><svg style="left:22px;top:0" width="22" height="13"><path d="M8.5 5.2h2.2l3.4-3v8.6l-3.4-3H8.5z" fill="#14181c"/></svg></div>
<div style="left:341px;top:649px;width:44.4px;height:13px;background:linear-gradient(#626971,#525961);border-radius:2px"><svg style="left:0;top:0" width="22" height="13"><text x="11" y="10.8" font-size="14.5" font-style="italic" font-weight="bold" font-family="Liberation Sans,sans-serif" text-anchor="middle" fill="#1c2026">e</text></svg><svg style="left:22px;top:0" width="22" height="13"><path d="M7 2.2v8.3M11.2 2.2v8.3M15.4 2.2v8.3M6.2 10.2h10" stroke="#14181c" stroke-width="1.5" fill="none"/><path d="M7 2.2v5M11.2 2.2v5M15.4 2.2v5" stroke="#14181c" stroke-width="2.5"/></svg></div>
<div style="left:389.7px;top:649px;width:44px;height:13px;background:linear-gradient(#626971,#525961);border-radius:2px"></div><div class="t" style="left:395.7px;top:649.7px;font-size:11.5px;font-weight:bold;color:#14181c;transform:scaleX(1.2);transform-origin:0 0;-webkit-text-stroke:0.4px #14181c">R</div><div class="t" style="left:416.7px;top:648.8px;font-size:12.5px;font-weight:bold;color:#14181c;transform:scaleX(1.15);transform-origin:0 0;-webkit-text-stroke:0.4px #14181c">w</div>
<div style="left:234.5px;top:665.7px;width:300.1px;height:41.2px;background:#333a44"></div>
<div style="left:534.6px;top:665.7px;width:10.7px;height:41.2px;background:#05070a"></div>
<div style="left:207px;top:705.9px;width:338.3px;height:1px;background:#242930"></div>
<div style="left:207px;top:665.7px;width:27.5px;height:41.2px;background:linear-gradient(#6478f4,#5a90f0)"></div>
<svg style="left:209.3px;top:668.2px" width="14" height="16"><rect x="0.6" y="0.6" width="10.6" height="13.4" fill="rgba(255,255,255,0.25)" stroke="rgba(255,255,255,0.75)" stroke-width="1"/><path d="M2.3 1v12.6M5.9 1v12.6M9.5 1v12.6" stroke="rgba(255,255,255,0.95)" stroke-width="2.1"/></svg>
<div class="t" style="left:224px;top:671.7px;font-size:8.5px;color:#1c3090">15</div>
<div style="left:242px;top:668.7px;width:21.5px;height:14.5px;background:linear-gradient(#f6e070,#e8ca4a 60%,#e0bc3c);border-radius:2px;text-align:center;line-height:14.5px;font-size:12px;font-weight:bold;color:#111;-webkit-text-stroke:0.35px #111;">m</div>
<div style="left:264.7px;top:668.7px;width:20.5px;height:14.5px;background:linear-gradient(#626971,#50575f);border-radius:2px;text-align:center;line-height:14.5px;font-size:11px;font-weight:bold;color:#111;-webkit-text-stroke:0.35px #111;">S</div>
<div class="t" style="left:292.5px;top:668.2px;font-size:14px;color:#e6e9ec">电子鼓节奏</div>
<div style="left:292px;top:689.7px;width:44.4px;height:13px;background:linear-gradient(#626971,#525961);border-radius:2px"><svg style="left:0;top:0" width="22" height="13"><circle cx="11" cy="6.5" r="3.6" fill="#14181c"/></svg><svg style="left:22px;top:0" width="22" height="13"><path d="M8.5 5.2h2.2l3.4-3v8.6l-3.4-3H8.5z" fill="#14181c"/></svg></div>
<div style="left:341px;top:689.7px;width:44.4px;height:13px;background:linear-gradient(#626971,#525961);border-radius:2px"><svg style="left:0;top:0" width="22" height="13"><text x="11" y="10.8" font-size="14.5" font-style="italic" font-weight="bold" font-family="Liberation Sans,sans-serif" text-anchor="middle" fill="#1c2026">e</text></svg><svg style="left:22px;top:0" width="22" height="13"><path d="M7 2.2v8.3M11.2 2.2v8.3M15.4 2.2v8.3M6.2 10.2h10" stroke="#14181c" stroke-width="1.5" fill="none"/><path d="M7 2.2v5M11.2 2.2v5M15.4 2.2v5" stroke="#14181c" stroke-width="2.5"/></svg></div>
<div style="left:389.7px;top:689.7px;width:44px;height:13px;background:linear-gradient(#626971,#525961);border-radius:2px"></div><div class="t" style="left:395.7px;top:690.4px;font-size:11.5px;font-weight:bold;color:#14181c;transform:scaleX(1.2);transform-origin:0 0;-webkit-text-stroke:0.4px #14181c">R</div><div class="t" style="left:416.7px;top:689.5px;font-size:12.5px;font-weight:bold;color:#14181c;transform:scaleX(1.15);transform-origin:0 0;-webkit-text-stroke:0.4px #14181c">w</div>
<div style="left:234.5px;top:706.9px;width:300.1px;height:19.7px;background:#333a44"></div>
<div style="left:534.6px;top:706.9px;width:10.7px;height:19.7px;background:#05070a"></div>
<div style="left:207px;top:725.6px;width:338.3px;height:1px;background:#242930"></div>
<div style="left:207px;top:706.9px;width:38px;height:19.7px;background:linear-gradient(#34ccd4,#2cc4cc)"></div>
<svg style="left:224px;top:709.9px" width="20" height="15"><path d="M2 12.5V2.5h5l1.5 2h7.5v2.5" fill="none" stroke="#e4f6f8" stroke-width="1.4"/><path d="M2 12.5l3-6h13l-3 6z" fill="#e4f6f8"/></svg>
<div class="t" style="left:261.5px;top:711.4px;font-size:11.5px;color:#dfe3e7">FX 通道</div>
<div style="left:234.5px;top:726.6px;width:300.1px;height:40.7px;background:#333a44"></div>
<div style="left:534.6px;top:726.6px;width:10.7px;height:40.7px;background:#05070a"></div>
<div style="left:207px;top:766.3px;width:338.3px;height:1px;background:#242930"></div>
<div style="left:207px;top:726.6px;width:10.3px;height:40.7px;background:#15181c"></div>
<div style="left:217.3px;top:726.6px;width:27.7px;height:40.7px;background:linear-gradient(#48a4ea,#3cacec)"></div>
<svg style="left:219px;top:729.6px" width="12" height="14"><path d="M7 1h2.5v8.5H3.5M5.8 7L3 9.5L5.8 12" fill="none" stroke="rgba(255,255,255,0.9)" stroke-width="1.6"/></svg>
<div class="t" style="left:233.5px;top:732.6px;font-size:8.5px;color:#103c78">16</div>
<div style="left:254px;top:730.6px;width:20.3px;height:14px;background:linear-gradient(#f6e070,#e8ca4a 60%,#e0bc3c);border-radius:2px;text-align:center;line-height:14px;font-size:12px;font-weight:bold;color:#111;-webkit-text-stroke:0.35px #111;">m</div>
<div style="left:275.5px;top:730.6px;width:20.5px;height:14px;background:linear-gradient(#626971,#50575f);border-radius:2px;text-align:center;line-height:14px;font-size:11px;font-weight:bold;color:#111;-webkit-text-stroke:0.35px #111;">S</div>
<div class="t" style="left:303px;top:729.6px;font-size:14px;color:#e6e9ec">混响</div>
<div style="left:473.4px;top:730.6px;width:45.8px;height:14px;background:linear-gradient(#5e656d,#565d65);border-radius:2px"></div>
<div class="t" style="left:485.5px;top:732.6px;font-size:10.5px;color:#a4abb3">0.00</div>
<div style="left:303px;top:750.6px;width:44px;height:13px;background:linear-gradient(#626971,#525961);border-radius:2px"></div><div class="t" style="left:309px;top:751.3px;font-size:11.5px;font-weight:bold;color:#14181c;transform:scaleX(1.2);transform-origin:0 0;-webkit-text-stroke:0.4px #14181c">R</div><div class="t" style="left:330px;top:750.4px;font-size:12.5px;font-weight:bold;color:#14181c;transform:scaleX(1.15);transform-origin:0 0;-webkit-text-stroke:0.4px #14181c">w</div>
<div style="left:351px;top:750.6px;width:44.5px;height:13px;background:linear-gradient(#626971,#525961);border-radius:2px"><svg style="left:0;top:0" width="22" height="13"><text x="11" y="10.8" font-size="14.5" font-style="italic" font-weight="bold" font-family="Liberation Sans,sans-serif" text-anchor="middle" fill="#1c2026">e</text></svg><svg style="left:22px;top:0" width="22" height="13"><path d="M5.5 6.5a2.7 2.4 0 1 0 5.4 0a2.7 2.4 0 1 0-5.4 0M10.9 6.5a2.7 2.4 0 1 0 5.4 0a2.7 2.4 0 1 0-5.4 0" stroke="#1c2026" stroke-width="1.3" fill="none"/></svg></div>
<div style="left:400.3px;top:750.6px;width:118px;height:13px;background:linear-gradient(#5e656d,#565d65);border-radius:2px"></div>
<div class="t" style="left:403.5px;top:752.6px;font-size:8.5px;font-weight:bold;color:#1c2026">音量</div>
<div style="left:234.5px;top:767.3px;width:300.1px;height:41.1px;background:#333a44"></div>
<div style="left:534.6px;top:767.3px;width:10.7px;height:41.1px;background:#05070a"></div>
<div style="left:207px;top:807.4px;width:338.3px;height:1px;background:#242930"></div>
<div style="left:207px;top:767.3px;width:10.3px;height:41.1px;background:#15181c"></div>
<div style="left:217.3px;top:767.3px;width:27.7px;height:41.1px;background:linear-gradient(#30d0cc,#2ccac6)"></div>
<svg style="left:219px;top:770.3px" width="12" height="14"><path d="M7 1h2.5v8.5H3.5M5.8 7L3 9.5L5.8 12" fill="none" stroke="rgba(255,255,255,0.9)" stroke-width="1.6"/></svg>
<div class="t" style="left:233.5px;top:773.3px;font-size:8.5px;color:#0c5c5c">17</div>
<div style="left:254px;top:771.3px;width:20.3px;height:14px;background:linear-gradient(#f6e070,#e8ca4a 60%,#e0bc3c);border-radius:2px;text-align:center;line-height:14px;font-size:12px;font-weight:bold;color:#111;-webkit-text-stroke:0.35px #111;">m</div>
<div style="left:275.5px;top:771.3px;width:20.5px;height:14px;background:linear-gradient(#626971,#50575f);border-radius:2px;text-align:center;line-height:14px;font-size:11px;font-weight:bold;color:#111;-webkit-text-stroke:0.35px #111;">S</div>
<div class="t" style="left:303px;top:770.3px;font-size:14px;color:#e6e9ec">延迟</div>
<div style="left:473.4px;top:771.3px;width:45.8px;height:14px;background:linear-gradient(#5e656d,#565d65);border-radius:2px"></div>
<div class="t" style="left:485.5px;top:773.3px;font-size:10.5px;color:#a4abb3">0.00</div>
<div style="left:303px;top:791.3px;width:44px;height:13px;background:linear-gradient(#626971,#525961);border-radius:2px"></div><div class="t" style="left:309px;top:792px;font-size:11.5px;font-weight:bold;color:#14181c;transform:scaleX(1.2);transform-origin:0 0;-webkit-text-stroke:0.4px #14181c">R</div><div class="t" style="left:330px;top:791.1px;font-size:12.5px;font-weight:bold;color:#14181c;transform:scaleX(1.15);transform-origin:0 0;-webkit-text-stroke:0.4px #14181c">w</div>
<div style="left:351px;top:791.3px;width:44.5px;height:13px;background:linear-gradient(#626971,#525961);border-radius:2px"><svg style="left:0;top:0" width="22" height="13"><text x="11" y="10.8" font-size="14.5" font-style="italic" font-weight="bold" font-family="Liberation Sans,sans-serif" text-anchor="middle" fill="#1c2026">e</text></svg><svg style="left:22px;top:0" width="22" height="13"><path d="M5.5 6.5a2.7 2.4 0 1 0 5.4 0a2.7 2.4 0 1 0-5.4 0M10.9 6.5a2.7 2.4 0 1 0 5.4 0a2.7 2.4 0 1 0-5.4 0" stroke="#1c2026" stroke-width="1.3" fill="none"/></svg></div>
<div style="left:400.3px;top:791.3px;width:118px;height:13px;background:linear-gradient(#5e656d,#565d65);border-radius:2px"></div>
<div class="t" style="left:403.5px;top:793.3px;font-size:8.5px;font-weight:bold;color:#1c2026">音量</div>
<div style="left:234.5px;top:808.4px;width:300.1px;height:79.5px;background:linear-gradient(#c6cacf,#b4b8be)"></div>
<div style="left:534.6px;top:808.4px;width:10.7px;height:79.5px;background:#05070a"></div>
<div style="left:207px;top:886.9px;width:338.3px;height:1px;background:#242930"></div>
<div style="left:207px;top:808.4px;width:27.5px;height:79.5px;background:linear-gradient(#d848ee,#cc40e6)"></div>
<svg style="left:209px;top:811.4px" width="14" height="13"><path d="M1 0.5v11.5l11-5.7z" fill="none" stroke="#fbe6fe" stroke-width="1.5"/><path d="M2 2l9 4.3l-9 4.6z" fill="#f4c8fa"/></svg>
<div class="t" style="left:223px;top:814.4px;font-size:8.5px;color:#7a1c8c">18</div>
<div style="left:243.4px;top:812.4px;width:20.5px;height:14.5px;background:linear-gradient(#e8eaec,#c8ccd0);border-radius:2px;text-align:center;line-height:14.5px;font-size:12px;font-weight:bold;color:#111;-webkit-text-stroke:0.35px #111;border:1px solid #8a9098;line-height:12px">m</div>
<div style="left:264.5px;top:812.4px;width:21px;height:14.5px;background:linear-gradient(#ee4a66,#d62c4a);border-radius:2px;text-align:center;line-height:14.5px;font-size:11px;font-weight:bold;color:#111;-webkit-text-stroke:0.35px #111;border:1px solid #8a2838;line-height:12px">S</div>
<div class="t" style="left:292.7px;top:810.9px;font-size:14px;color:#2e3238">李秀英 - <span style="font-size:11px">휠릴리</span></div>
<div style="left:291.4px;top:831.6px;width:46px;height:15px;background:linear-gradient(#e8eaec,#c8ccd0);border-radius:2px;border:1px solid #7a8088"></div>
<div style="left:291.4px;top:831.6px;width:23px;height:15px;background:linear-gradient(#ee4a66,#d62c4a);border-radius:2px;border:1px solid #7a2434"><svg style="left:0;top:0" width="22" height="13"><circle cx="10.5" cy="6.5" r="3.6" fill="#14060a"/></svg></div>
<svg style="left:313.5px;top:832.6px" width="22" height="13"><path d="M8.5 5.2h2.2l3.4-3v8.6l-3.4-3H8.5z" fill="#14181c"/></svg>
<div style="left:340.4px;top:831.6px;width:45.2px;height:15px;background:linear-gradient(#e8eaec,#c8ccd0);border-radius:2px;border:1px solid #7a8088"><svg style="left:0;top:0" width="22" height="13"><text x="11" y="10.8" font-size="14.5" font-style="italic" font-weight="bold" font-family="Liberation Sans,sans-serif" text-anchor="middle" fill="#1c2026">e</text></svg><svg style="left:22px;top:0" width="22" height="13"><path d="M5.5 6.5a2.7 2.4 0 1 0 5.4 0a2.7 2.4 0 1 0-5.4 0M10.9 6.5a2.7 2.4 0 1 0 5.4 0a2.7 2.4 0 1 0-5.4 0" stroke="#1c2026" stroke-width="1.3" fill="none"/></svg></div>
<div style="left:389.4px;top:831.6px;width:45.2px;height:15px;background:linear-gradient(#e8eaec,#c8ccd0);border-radius:2px;border:1px solid #7a8088"></div>
<div class="t" style="left:396px;top:833.3px;font-size:11.5px;font-weight:bold;color:#14181c;transform:scaleX(1.2);transform-origin:0 0;-webkit-text-stroke:0.4px #14181c">R</div>
<div class="t" style="left:417px;top:832.4px;font-size:12.5px;font-weight:bold;color:#14181c;transform:scaleX(1.15);transform-origin:0 0;-webkit-text-stroke:0.4px #14181c">w</div>
<div style="left:537.5px;top:848.5px;width:6px;height:1.5px;background:#5a626a"></div>
<div style="left:234.5px;top:887.9px;width:300.1px;height:60.4px;background:#333a44"></div>
<div style="left:534.6px;top:887.9px;width:10.7px;height:60.4px;background:#05070a"></div>
<div style="left:207px;top:947.3px;width:338.3px;height:1px;background:#242930"></div>
<div style="left:207px;top:887.9px;width:27.5px;height:60.4px;background:linear-gradient(#a6b4c4,#9aaaba)"></div>
<svg style="left:209px;top:890.9px" width="14" height="13"><path d="M1 0.5v11.5l11-5.7z" fill="none" stroke="#f0f4f8" stroke-width="1.5"/><path d="M2 2l9 4.3l-9 4.6z" fill="#dfe6ee"/></svg>
<div class="t" style="left:223px;top:893.9px;font-size:8.5px;color:#4c5a6a">19</div>
<div style="left:243.4px;top:891.9px;width:20.5px;height:14.5px;background:linear-gradient(#626971,#50575f);border-radius:2px;text-align:center;line-height:14.5px;font-size:12px;font-weight:bold;color:#111;-webkit-text-stroke:0.35px #111;">m</div>
<div style="left:264.5px;top:891.9px;width:21px;height:14.5px;background:linear-gradient(#ee4a66,#d62c4a);border-radius:2px;text-align:center;line-height:14.5px;font-size:11px;font-weight:bold;color:#111;-webkit-text-stroke:0.35px #111;">S</div>
<div class="t" style="left:292.7px;top:890.4px;font-size:14px;color:#e6e9ec">音频 01</div>
<div style="left:291.8px;top:912.4px;width:45px;height:13.5px;background:linear-gradient(#626971,#525961);border-radius:2px"><svg style="left:0;top:0" width="22" height="13"><circle cx="11" cy="6.5" r="3.6" fill="#14181c"/></svg></div>
<div style="left:314.5px;top:912.4px;width:22.3px;height:13.5px;background:linear-gradient(#f0b468,#e09848);border-radius:2px"><svg style="left:0;top:0" width="22" height="13"><path d="M8.5 5.2h2.2l3.4-3v8.6l-3.4-3H8.5z" fill="#14181c"/></svg></div>
<div style="left:341px;top:912.4px;width:44.5px;height:13.5px;background:linear-gradient(#626971,#525961);border-radius:2px"><svg style="left:0;top:0" width="22" height="13"><text x="11" y="10.8" font-size="14.5" font-style="italic" font-weight="bold" font-family="Liberation Sans,sans-serif" text-anchor="middle" fill="#1c2026">e</text></svg><svg style="left:22px;top:0" width="22" height="13"><circle cx="11" cy="6.5" r="2.4" stroke="#1c2026" stroke-width="1.2" fill="none"/></svg></div>
<div style="left:389.7px;top:912.4px;width:44px;height:13.5px;background:linear-gradient(#626971,#525961);border-radius:2px"></div><div class="t" style="left:395.7px;top:913.35px;font-size:11.5px;font-weight:bold;color:#14181c;transform:scaleX(1.2);transform-origin:0 0;-webkit-text-stroke:0.4px #14181c">R</div><div class="t" style="left:416.7px;top:912.45px;font-size:12.5px;font-weight:bold;color:#14181c;transform:scaleX(1.15);transform-origin:0 0;-webkit-text-stroke:0.4px #14181c">w</div>
<div style="left:537px;top:891px;width:6.5px;height:1.5px;background:#5a5a30"></div>
<div style="left:536.3px;top:909.5px;width:3.2px;height:37.5px;background:linear-gradient(#22d8d0,#28c8e8)"></div>
<div style="left:540.6px;top:909.5px;width:3.2px;height:37.5px;background:linear-gradient(#22d8d0,#28c8e8)"></div>
<div style="left:207px;top:948.3px;width:338.3px;height:1px;background:#4a525c"></div>
<div class="t" style="left:203px;top:993px;font-size:11px;color:#9098a0">-</div>
<svg style="left:514px;top:994px" width="34" height="11"><path d="M1 2.5h9l-4.5 4.5z" fill="#a0a8b0"/><g transform="translate(25.5,5.5)"><circle r="3.1" fill="none" stroke="#a8b0b8" stroke-width="1.8"/><path d="M0-5.2V5.2M-5.2 0H5.2M-3.7-3.7L3.7 3.7M-3.7 3.7L3.7-3.7" stroke="#a8b0b8" stroke-width="1.4"/><circle r="1.4" fill="#3a4048"/></g></svg>
<div style="left:28px;top:100px;width:167.5px;height:906.5px;background:#30363e;border-radius:7px;border:2px solid #454b54"></div>
<div class="t" style="left:93px;top:106px;font-size:12px;color:#e4e8ec">观测区</div>
<div style="left:37.3px;top:131px;width:149.2px;height:21.3px;background:linear-gradient(#a2a8ae,#8a9098 50%,#787e86);border-radius:4px;box-shadow:0 0 0 1px #262a30"></div>
<div class="t" style="left:46px;top:136.5px;font-size:10.5px;font-weight:bold;color:#16191d">18</div>
<div style="left:61px;top:131px;width:103.5px;height:21.3px;background:linear-gradient(#e458f0,#d640e8 60%,#cc34de)"></div>
<div class="t" style="left:64.5px;top:136px;font-size:12px;color:#3a0c44">李秀英 - <span style="font-size:10px">휠릴리</span></div>
<svg style="left:155px;top:137px" width="8" height="10"><path d="M2 1l4.5 4L2 9z" fill="#1a0620"/></svg>
<div style="left:164.5px;top:131px;width:1.2px;height:21.3px;background:#2c3036"></div>
<div class="t" style="left:169.5px;top:127.5px;font-size:23px;font-style:italic;color:#2a2e34">e</div>
<div style="left:37.3px;top:178px;width:149.2px;height:278.5px;background:#3b4149;border-radius:4px"></div>
<div style="left:37.3px;top:162.1px;width:149.2px;height:20.3px;background:linear-gradient(#a2a8ae,#8a9098 50%,#787e86);border-radius:4px;box-shadow:0 0 0 1px #262a30"></div>
<div class="t" style="left:42px;top:166.2px;font-size:12.3px;color:#22262c">插入</div>
<div style="left:164.5px;top:163.6px;width:1px;height:17.5px;background:#2c3036"></div>
<svg style="left:166px;top:163.6px" width="20" height="17.5"><path d="M3 8.8h14" stroke="#e8ecf0" stroke-width="1.4"/><rect x="7" y="5.5" width="6" height="6.5" rx="1.5" fill="none" stroke="#e8ecf0" stroke-width="1.4"/></svg>
<svg style="left:149px;top:166px" width="12" height="12"><path d="M6 1l4.5 5L6 11L1.5 6z" fill="none" stroke="#9aa0a8" stroke-width="1.2"/></svg>
<div style="left:39.5px;top:195.5px;width:144.5px;height:259.5px;background:#10141a;border-radius:4px"></div>
<div style="left:42px;top:197.3px;width:140px;height:29.3px;background:#1d232b;border-radius:3px;box-shadow:inset 0 1px 2px #0a0d12, 0 1px 0 #2c333c"></div>
<div style="left:42px;top:229.45px;width:140px;height:29.3px;background:#1d232b;border-radius:3px;box-shadow:inset 0 1px 2px #0a0d12, 0 1px 0 #2c333c"></div>
<div style="left:42px;top:261.6px;width:140px;height:29.3px;background:#1d232b;border-radius:3px;box-shadow:inset 0 1px 2px #0a0d12, 0 1px 0 #2c333c"></div>
<div style="left:42px;top:293.75px;width:140px;height:29.3px;background:#1d232b;border-radius:3px;box-shadow:inset 0 1px 2px #0a0d12, 0 1px 0 #2c333c"></div>
<div style="left:42px;top:325.9px;width:140px;height:29.3px;background:#1d232b;border-radius:3px;box-shadow:inset 0 1px 2px #0a0d12, 0 1px 0 #2c333c"></div>
<div style="left:42px;top:358.05px;width:140px;height:29.3px;background:#1d232b;border-radius:3px;box-shadow:inset 0 1px 2px #0a0d12, 0 1px 0 #2c333c"></div>
<div style="left:42px;top:390.2px;width:140px;height:29.3px;background:#1d232b;border-radius:3px;box-shadow:inset 0 1px 2px #0a0d12, 0 1px 0 #2c333c"></div>
<div style="left:42px;top:422.35px;width:140px;height:29.3px;background:#1d232b;border-radius:3px;box-shadow:inset 0 1px 2px #0a0d12, 0 1px 0 #2c333c"></div>
<div style="left:37.3px;top:466.8px;width:149.2px;height:21.3px;background:linear-gradient(#a2a8ae,#8a9098 50%,#787e86);border-radius:4px;box-shadow:0 0 0 1px #262a30"></div>
<div class="t" style="left:42px;top:470.9px;font-size:12.3px;color:#22262c">Strip</div>
<div style="left:164.5px;top:468.3px;width:1px;height:18.5px;background:#2c3036"></div>
<svg style="left:166px;top:468.3px" width="20" height="18.5"><path d="M3 8.8h14" stroke="#e8ecf0" stroke-width="1.4"/><rect x="7" y="5.5" width="6" height="6.5" rx="1.5" fill="none" stroke="#e8ecf0" stroke-width="1.4"/></svg>
<div style="left:37.3px;top:496.9px;width:149.2px;height:21.3px;background:linear-gradient(#a2a8ae,#8a9098 50%,#787e86);border-radius:4px;box-shadow:0 0 0 1px #262a30"></div>
<div class="t" style="left:42px;top:501px;font-size:12.3px;color:#22262c">均衡器</div>
<div style="left:164.5px;top:498.4px;width:1px;height:18.5px;background:#2c3036"></div>
<svg style="left:166px;top:498.4px" width="20" height="18.5"><path d="M3 8.8h3.5l3.5-3.5l3.5 3.5l-3.5 3.5l-3.5-3.5M13.5 8.8H17" fill="none" stroke="#e8ecf0" stroke-width="1.3"/></svg>
<div style="left:37.3px;top:527.1px;width:149.2px;height:21.3px;background:linear-gradient(#a2a8ae,#8a9098 50%,#787e86);border-radius:4px;box-shadow:0 0 0 1px #262a30"></div>
<div class="t" style="left:42px;top:531.2px;font-size:12.3px;color:#22262c">发送</div>
<div style="left:164.5px;top:528.6px;width:1px;height:18.5px;background:#2c3036"></div>
<svg style="left:166px;top:528.6px" width="20" height="18.5"><path d="M6 12.5h8M10 12.5v-3" stroke="#e8ecf0" stroke-width="1.3"/><rect x="7" y="4" width="6" height="5.5" fill="none" stroke="#e8ecf0" stroke-width="1.3"/></svg>
<div style="left:37.3px;top:557.3px;width:149.2px;height:21.3px;background:linear-gradient(#a2a8ae,#8a9098 50%,#787e86);border-radius:4px;box-shadow:0 0 0 1px #262a30"></div>
<div class="t" style="left:42px;top:561.4px;font-size:12.3px;color:#22262c">推子</div>
<div style="left:164.5px;top:558.8px;width:1px;height:18.5px;background:#2c3036"></div>
<svg style="left:166px;top:558.8px" width="20" height="18.5"><rect x="6.5" y="3" width="7" height="12" rx="1" fill="none" stroke="#e8ecf0" stroke-width="1.3"/><path d="M7 9h6" stroke="#60e0c0" stroke-width="1.2"/></svg>
<div style="left:37.3px;top:587.5px;width:149.2px;height:21.3px;background:linear-gradient(#a2a8ae,#8a9098 50%,#787e86);border-radius:4px;box-shadow:0 0 0 1px #262a30"></div>
<div class="t" style="left:42px;top:591.6px;font-size:12.3px;color:#22262c">记事本</div>
<div style="left:164.5px;top:589px;width:1px;height:18.5px;background:#2c3036"></div>
<svg style="left:166px;top:589px" width="20" height="18.5"><rect x="5.5" y="4" width="9" height="10" rx="1" fill="none" stroke="#e8ecf0" stroke-width="1.3"/><path d="M7.5 11h5" stroke="#c8ccd0" stroke-width="1"/></svg>
<svg style="left:178px;top:992px" width="14" height="14"><g transform="translate(7,7)"><circle r="3.1" fill="none" stroke="#a8b0b8" stroke-width="1.8"/><path d="M0-5.4V5.4M-5.4 0H5.4M-3.8-3.8L3.8 3.8M-3.8 3.8L3.8-3.8" stroke="#a8b0b8" stroke-width="1.4"/><circle r="1.4" fill="#3a4048"/></g></svg>
<div style="left:24px;top:1010.3px;width:236px;height:1.7px;background:#581a48"></div>
<svg style="left:31px;top:1px" width="18" height="17"><path d="M11.5 1.2L4 7.4L9.6 14.8L12 13.4L7.6 7.2L12.6 2.4Z" fill="#d8206c"/><path d="M9.4 1.4L2.6 7.8L6.4 11.4L4.6 7.6z" fill="#f4a0c4" opacity="0.85"/><circle cx="13.2" cy="7.2" r="2.3" fill="#e8287a"/></svg>
<div class="t" style="left:62px;top:3px;font-size:11.5px;color:#173a56">文件(F)</div>
<div class="t" style="left:113px;top:3px;font-size:11.5px;color:#173a56">编辑(E)</div>
<div class="t" style="left:165px;top:3px;font-size:11.5px;color:#173a56">工程(P)</div>
<div class="t" style="left:217px;top:3px;font-size:11.5px;color:#173a56">音频(A)</div>
<div class="t" style="left:270px;top:3px;font-size:11.5px;color:#173a56">MIDI(M)</div>
<div class="t" style="left:331px;top:3px;font-size:11.5px;color:#173a56">媒体(D)</div>
<div class="t" style="left:385px;top:3px;font-size:11.5px;color:#173a56">走带(T)</div>
<div class="t" style="left:437px;top:3px;font-size:11.5px;color:#173a56">设备(V)</div>
<div class="t" style="left:489.5px;top:3px;font-size:11.5px;color:#173a56">窗口(W)</div>
<div class="t" style="left:546px;top:3px;font-size:11.5px;color:#173a56">帮助(H)</div>
<div class="t" style="left:599.5px;top:3px;font-size:11.5px;color:#173a56">Steinberg Hub(S)</div>
<div class="t" style="left:1170.5px;top:2.5px;font-size:11px;color:#1a4a78">Cubase Elements 工程 - <span style="font-size:10px">휠릴리</span>D-Eb</div>
<svg style="left:1770px;top:0" width="120" height="18"><path d="M8 7.5h11" stroke="#136a7c" stroke-width="1.3"/><rect x="52.5" y="4.5" width="7" height="7" fill="none" stroke="#0e4c5c" stroke-width="1.2"/><path d="M54.5 4.5v-2h7v7h-2" fill="none" stroke="#0e4c5c" stroke-width="1.2"/><path d="M97.5 2.5l9 9M106.5 2.5l-9 9" stroke="#0e4c5c" stroke-width="1.4"/></svg>
<div style="left:30.5px;top:26.5px;width:14.5px;height:22px;background:linear-gradient(#ffffff,#eceeef 50%,#dcdfe2);border-radius:2px 0 0 2px"><svg style="left:0;top:0" width="15" height="22"><circle cx="7.5" cy="11.5" r="4.6" fill="#111418"/><path d="M7.5 5.5v5" stroke="#f4f4f4" stroke-width="1.8"/></svg></div>
<div style="left:45px;top:26.5px;width:20.5px;height:22px;background:linear-gradient(#c6c9cc,#a9adb1 50%,#9a9ea2);border-radius:0 2px 2px 0"><svg style="left:0;top:0" width="21" height="22"><path d="M3.5 7h3v9h-3zM8 7h8v3.6H8zM8 12.4h8V16H8z" fill="#111418"/></svg></div>
<div style="left:73.5px;top:26.5px;width:21.5px;height:22px;background:linear-gradient(#c6c9cc,#a9adb1 50%,#9a9ea2);border-radius:2px"><svg style="left:0;top:0" width="22" height="22"><circle cx="10.7" cy="11" r="4.2" fill="#111418"/><path d="M10.7 11V8.2M10.7 11h2.4" stroke="#c8c8c8" stroke-width="1.1"/><path d="M5.3 5.6a8 8 0 0 0 0 10.8M16.1 5.6a8 8 0 0 1 0 10.8" stroke="#111418" stroke-width="1.5" fill="none"/></svg></div>
<div style="left:102.5px;top:26.5px;width:22px;height:22px;background:linear-gradient(#f2d858,#e6c238 55%,#dcae30);"><div class="t" style="left:0;top:4px;width:22px;text-align:center;font-size:14.5px;color:#3c3008">M</div></div>
<div style="left:124.5px;top:26.5px;width:21.7px;height:22px;background:linear-gradient(#f46a5c,#ea4a42 55%,#e23c38);"><div class="t" style="left:0;top:4px;width:21.7px;text-align:center;font-size:14.5px;color:#4c100c">S</div></div>
<div style="left:146.2px;top:26.5px;width:22.3px;height:22px;background:linear-gradient(#5cd85a,#38c23c 55%,#2cb434);"><div class="t" style="left:0;top:4px;width:22.3px;text-align:center;font-size:14.5px;color:#0c3c10">R</div></div>
<div style="left:168.5px;top:26.5px;width:21.7px;height:22px;background:linear-gradient(#c6c9cc,#a9adb1 50%,#9a9ea2);"><div class="t" style="left:0;top:4px;width:21.7px;text-align:center;font-size:14.5px;color:#2c3034">W</div></div>
<div style="left:198.5px;top:26.5px;width:21px;height:22px;background:linear-gradient(#ffffff,#eceeef 50%,#dcdfe2);border-radius:2px 0 0 2px"><svg style="left:0;top:0" width="21" height="22"><path d="M3 9.5h5.5v5H3z" fill="#111418"/><path d="M12 12l4.2-4.2l4.2 4.2l-4.2 4.2z" fill="#111418"/><path d="M9.8 3v16" stroke="#70767c" stroke-width="1.1"/><path d="M7.4 3h4.8l-2.4 3z" fill="#70767c"/><path d="M8 12h5" stroke="#111418" stroke-width="1.4"/></svg></div>
<div style="left:220px;top:26.5px;width:10px;height:22px;background:linear-gradient(#e6e8ea,#cdd0d3 50%,#b2b6ba);border-radius:0 2px 2px 0;border-left:1px solid #8a8e92"><svg style="left:0;top:0" width="10" height="22"><path d="M5 7.6l1 2.4h2.6l-2.1 1.6l.8 2.6L5 12.6l-2.3 1.6l.8-2.6L1.4 10H4z" fill="#111418"/></svg></div>
<div style="left:237.5px;top:23.8px;width:188.5px;height:27.4px;background:#1a1d21;border-radius:5px;border:1px solid #4a4f56"></div>
<div style="left:240px;top:26.5px;width:18.3px;height:22px;background:linear-gradient(#e6e8ea,#cdd0d3 50%,#b2b6ba)"><svg style="left:0;top:0" width="18.3" height="22"><path d="M4.65 6.8v8.4" stroke="#111418" stroke-width="1.8"/><path d="M13.75 6.6v8.8l-7-4.4z" fill="#111418"/></svg></div>
<div style="left:259px;top:26.5px;width:18.3px;height:22px;background:linear-gradient(#e6e8ea,#cdd0d3 50%,#b2b6ba)"><svg style="left:0;top:0" width="18.3" height="22"><path d="M13.65 6.8v8.4" stroke="#111418" stroke-width="1.8"/><path d="M4.550000000000001 6.6v8.8l7-4.4z" fill="#111418"/></svg></div>
<div style="left:278px;top:26.5px;width:35.5px;height:22px;background:linear-gradient(#e6e8ea,#cdd0d3 50%,#b2b6ba)"><svg style="left:0;top:0" width="35.5" height="22"><path d="M15.75 14.4a7.6 3.9 0 1 1 5 -0.4" fill="none" stroke="#111418" stroke-width="1.6"/><path d="M17.55 11.4l-3.4 3l4.6 2.4z" fill="#111418"/></svg></div>
<div style="left:314.5px;top:26.5px;width:36px;height:22px;background:linear-gradient(#ffffff,#eceeef 50%,#dcdfe2)"><svg style="left:0;top:0" width="36" height="22"><rect x="13.8" y="6.8" width="8.4" height="8.4" fill="#111418"/></svg></div>
<div style="left:351.5px;top:26.5px;width:35.8px;height:22px;background:linear-gradient(#e6e8ea,#cdd0d3 50%,#b2b6ba)"><svg style="left:0;top:0" width="35.8" height="22"><path d="M14.299999999999999 6.2v9.6l8.4-4.8z" fill="#111418"/></svg></div>
<div style="left:388.3px;top:26.5px;width:35.7px;height:22px;background:linear-gradient(#e6e8ea,#cdd0d3 50%,#b2b6ba)"><svg style="left:0;top:0" width="35.7" height="22"><circle cx="17.85" cy="11.0" r="4.4" fill="#111418"/></svg></div>
<div style="left:435.5px;top:26.5px;width:21px;height:22px;background:linear-gradient(#ffffff,#eceeef 50%,#dcdfe2);border-radius:2px 0 0 2px"><svg style="left:0;top:0" width="21" height="22"><path d="M7.5 3.5v13l3.2-3l2.4 5l2-.9l-2.4-4.9h4.3z" fill="#111418"/></svg></div>
<svg style="left:441px;top:49px" width="10" height="5"><path d="M1 .5h7l-3.5 3.5z" fill="#e4e6e8"/></svg>
<div style="left:456.5px;top:26.5px;width:214.5px;height:22px;background:linear-gradient(#c6c9cc,#a9adb1 50%,#9a9ea2);border-radius:0 2px 2px 0"></div>
<svg style="left:457px;top:26.5px" width="22" height="22"><rect x="4" y="5" width="13.5" height="12" fill="#9a9ea4" stroke="#3c4146" stroke-width="1.3"/></svg>
<svg style="left:478.4px;top:26.5px" width="22" height="22"><path d="M5 4l9 11M14.5 6l-6 9" stroke="#3c4146" stroke-width="1.5"/><circle cx="15.5" cy="16" r="2.2" fill="none" stroke="#3c4146" stroke-width="1.3"/></svg>
<svg style="left:499.8px;top:26.5px" width="22" height="22"><path d="M4.5 4.5l3-1.5l9.5 11.5l-1 3.5l-3.5-1z" fill="#a8acb0" stroke="#3c4146" stroke-width="1.3"/></svg>
<svg style="left:521.2px;top:26.5px" width="22" height="22"><path d="M3 8l5.5-3.5l10 8l-5 4.5z" fill="#b4b8bc" stroke="#3c4146" stroke-width="1.3"/><path d="M13.5 17l5-4.5" stroke="#3c4146" stroke-width="1.3"/></svg>
<svg style="left:542.6px;top:26.5px" width="22" height="22"><circle cx="9" cy="9" r="5" fill="none" stroke="#3c4146" stroke-width="1.5"/><path d="M12.8 12.8l5 5" stroke="#3c4146" stroke-width="2"/><path d="M6.5 9h5M9 6.5v5" stroke="#3c4146" stroke-width="1.2"/></svg>
<svg style="left:564px;top:26.5px" width="22" height="22"><path d="M5 5l11 12M16 5L5 17" stroke="#1c2024" stroke-width="1.8"/></svg>
<svg style="left:585.4px;top:26.5px" width="22" height="22"><path d="M14 3.5l2.5 1.5l-7 12l-3 2l.5-3.5z" fill="#b4b8bc" stroke="#5c6268" stroke-width="1.2"/></svg>
<svg style="left:606.8px;top:26.5px" width="22" height="22"><path d="M4.5 17.5L16.5 5" stroke="#5c6268" stroke-width="1.5"/></svg>
<svg style="left:628.2px;top:26.5px" width="22" height="22"><path d="M4 9h3l4-3.5v11L7 13H4z" fill="#9ea2a6" stroke="#5c6268" stroke-width="1.1"/><path d="M13.5 8a4 4 0 0 1 0 6M15.8 6a7 7 0 0 1 0 10" fill="none" stroke="#5c6268" stroke-width="1.1"/></svg>
<svg style="left:649.6px;top:26.5px" width="22" height="22"><path d="M9 7l5.5-3.5l5 7.5l-7.5 6.5l-4.5-5.5z" fill="#b4b8bc" stroke="#3c4146" stroke-width="1.3"/><path d="M5.5 12.5c-2 2.5-2 5 0 5.5s2-3 0-5.5z" fill="#1c2024"/></svg>
<div style="left:678.7px;top:26.5px;width:22px;height:22px;background:linear-gradient(#c6c9cc,#a9adb1 50%,#9a9ea2);border-radius:2px"><svg style="left:0;top:0" width="22" height="22"><path d="M3 11h16" stroke="#60666c" stroke-width="1"/><path d="M9 2.5l1.5 17" stroke="#3c4146" stroke-width="1.3"/><path d="M3.5 6.5c5 0 9 3 14.5 11" fill="none" stroke="#3c4146" stroke-width="1.2"/></svg></div>
<div style="left:707.5px;top:26.5px;width:82px;height:22px;background:linear-gradient(#c6c9cc,#a9adb1 50%,#9a9ea2);border-radius:2px 0 0 2px"><svg style="left:0;top:0" width="82" height="22"><path d="M3.5 6.5l3.6 4.5l-3.6 4.5M16.5 6.5l-3.6 4.5l3.6 4.5" fill="none" stroke="#111418" stroke-width="1.7"/><circle cx="10" cy="11" r="1.1" fill="#111418"/><path d="M27 6v10M31 6v10M35 6v10M25 9h12M25 13h12" stroke="#111418" stroke-width="1.3"/><path d="M48 8h10M50 11h10M62 8h10M64 11h10" stroke="#8c9094" stroke-width="1.2"/></svg></div>
<div class="t" style="left:29px;top:63.5px;font-size:9px;color:#8a9098">文件</div>
<div class="t" style="left:28px;top:80px;font-size:12px;color:#dcdfe2">李秀英 - <span style="font-size:10.5px">휠릴리</span></div>
<div style="left:186.5px;top:61px;width:1.3px;height:33px;background:#4a4e54"></div>
<div style="left:282.3px;top:61px;width:1.3px;height:33px;background:#4a4e54"></div>
<div style="left:378px;top:61px;width:1.3px;height:33px;background:#4a4e54"></div>
<div style="left:473.8px;top:61px;width:1.3px;height:33px;background:#4a4e54"></div>
<div style="left:569.5px;top:61px;width:1.3px;height:33px;background:#4a4e54"></div>
<div style="left:665.2px;top:61px;width:1.3px;height:33px;background:#4a4e54"></div>
<div style="left:761px;top:61px;width:1.3px;height:33px;background:#4a4e54"></div>
<div class="t" style="left:225px;top:63.5px;font-size:9px;color:#8a9098">开始</div>
<div class="t" style="left:321px;top:63.5px;font-size:9px;color:#8a9098">结束</div>
<div class="t" style="left:417px;top:63.5px;font-size:9px;color:#8a9098">长度</div>
<div class="t" style="left:512.5px;top:63.5px;font-size:9px;color:#8a9098">偏移</div>
<div class="t" style="left:608px;top:63.5px;font-size:9px;color:#8a9098">对齐</div>
<div class="t" style="left:703.5px;top:63.5px;font-size:9px;color:#8a9098">淡入</div>
<div class="t" style="right:1642px;top:80px;font-size:12px;color:#d4d8dc;white-space:pre">1.  5.  2.    7</div>
<div class="t" style="right:1547px;top:80px;font-size:12px;color:#d4d8dc;white-space:pre">131.  6.  2.102</div>
<div class="t" style="right:1451px;top:80px;font-size:12px;color:#d4d8dc;white-space:pre">130.  1.  0.  95</div>
<div class="t" style="right:1355.5px;top:80px;font-size:12px;color:#d4d8dc;white-space:pre">0.  0.  0.    0</div>
<div class="t" style="right:1259.5px;top:80px;font-size:12px;color:#d4d8dc;white-space:pre">1.  5.  2.    7</div>
<div class="t" style="right:1162.5px;top:80px;font-size:12px;color:#d4d8dc;white-space:pre">0.  0.  0.    0</div>
<div class="t" style="right:1064.5px;top:80px;font-size:12px;color:#d4d8dc;white-space:pre">0.  0.  0.    0</div>
<div class="t" style="left:870px;top:80.5px;font-size:11px;color:#d4d8dc">-20.83</div>
<div class="t" style="left:932px;top:81px;font-size:10px;color:#5a6068">dB</div>
<div style="left:859.5px;top:64px;width:1.3px;height:30px;background:#4a4e54"></div>
<div style="left:955px;top:64px;width:1.3px;height:30px;background:#4a4e54"></div>
<div style="left:1052.5px;top:64px;width:1.3px;height:30px;background:#4a4e54"></div>
<div style="left:1150px;top:64px;width:1.3px;height:30px;background:#4a4e54"></div>
<div style="left:1245.5px;top:64px;width:1.3px;height:30px;background:#4a4e54"></div>
<div style="left:1341.5px;top:64px;width:1.3px;height:30px;background:#4a4e54"></div>
<div style="left:1478px;top:64px;width:1.3px;height:30px;background:#4a4e54"></div>
<div class="t" style="left:1000px;top:80px;font-size:12px;color:#d4d8dc">0</div>
<div class="t" style="left:1097px;top:80px;font-size:12px;color:#d4d8dc">0</div>
<div class="t" style="left:1190px;top:80px;font-size:12px;color:#d4d8dc">-</div>
<div class="t" style="left:1286px;top:80px;font-size:12px;color:#d4d8dc">-</div>
<div class="t" style="left:1376px;top:79.5px;font-size:11px;color:#d4d8dc">Standard - Mix</div>
<div style="left:1686px;top:19.5px;width:210px;height:38px;background:linear-gradient(#23262c,#2c2f35 50%,#35383e)"></div>
<div style="left:785.8px;top:19px;width:900.5px;height:65.3px;background:linear-gradient(#44484e,#3a3e44);border:1px solid #585c62;border-radius:3px;box-shadow:0 2px 3px rgba(0,0,0,0.6)"></div>
<div style="left:787px;top:20px;width:16px;height:63px;background:linear-gradient(90deg,#4e5258,#44484e)"></div>
<svg style="left:790px;top:26px" width="10" height="6"><path d="M1 5h7L4.5 1z" fill="#8a9098"/></svg>
<div style="left:804px;top:23px;width:26.5px;height:58px;background:#08090b;border-radius:4px;border:1px solid #1a1c20"></div>
<div style="left:807px;top:25.5px;width:12.5px;height:54px;background:#181a1e"></div>
<div style="left:821.5px;top:25.5px;width:6px;height:54px;background:#15171a"></div>
<div style="left:807px;top:25.3px;width:12.5px;height:4px;background:#ea5470"></div>
<div style="left:807px;top:69.8px;width:12.5px;height:9.6px;background:#38b47c"></div>
<div style="left:835px;top:22.5px;width:132.5px;height:58.5px;background:#030405;border-radius:4px;border:1px solid #1a1c20"></div>
<div style="left:855px;top:24px;width:1px;height:56px;background:#1c1e22"></div>
<div style="left:837px;top:52.3px;width:128px;height:1px;background:#26282c"></div>
<svg style="left:838px;top:24px" width="18" height="56"><circle cx="8.5" cy="7" r="2.6" fill="#5a5e64"/><path d="M5.5 18.5h6M8.5 18.5v6" stroke="#5a5e64" stroke-width="1.4"/><path d="M5 32.5v6.5l7-3.2z" fill="#6a6e74"/><path d="M5 46.5h7M5 49.5h7M7.5 52.5h4.5" stroke="#5a5e64" stroke-width="1.2"/></svg>
<div class="t" style="left:861px;top:26.5px;font-size:9.5px;color:#7a8088">穿入/穿出</div>
<div class="t" style="left:861px;top:40.5px;font-size:9.5px;color:#7a8088">从光标处开始</div>
<div class="t" style="left:861px;top:55.5px;font-size:9.5px;color:#7a8088">保留历史</div>
<div class="t" style="left:861px;top:69.5px;font-size:9.5px;color:#7a8088">新建块</div>
<div style="left:972.5px;top:22.5px;width:112.5px;height:58.5px;background:#030405;border-radius:4px;border:1px solid #1a1c20"></div>
<div style="left:974px;top:24.5px;width:18px;height:12.7px;background:linear-gradient(#5e646c,#4c525a);border-radius:1px"></div>
<div class="t" style="left:978px;top:25px;font-size:12px;color:#eceef0;transform:scaleX(1.25);transform-origin:0 0">L</div>
<div style="left:974px;top:38.5px;width:18px;height:12.7px;background:linear-gradient(#5e646c,#4c525a);border-radius:1px"><svg style="left:0;top:0" width="18" height="13"><path d="M1.5 3h5c3 0 3 7 6 7h4" fill="none" stroke="#e4e8ec" stroke-width="1.3"/></svg></div>
<div style="left:974px;top:53.8px;width:18px;height:12.7px;background:linear-gradient(#5e646c,#4c525a);border-radius:1px"></div>
<div class="t" style="left:977px;top:54.3px;font-size:12px;color:#eceef0;transform:scaleX(1.25);transform-origin:0 0">R</div>
<div style="left:974px;top:67.8px;width:18px;height:12.5px;background:linear-gradient(#5e646c,#4c525a);border-radius:1px"><svg style="left:0;top:0" width="18" height="13"><path d="M1.5 10h5c3 0 3-7 6-7h4" fill="none" stroke="#e4e8ec" stroke-width="1.3"/></svg></div>
<div class="t" style="right:836.5px;top:25.5px;font-size:11.5px;color:#e0e4e8;white-space:pre">1.  1.  1.    0</div>
<div class="t" style="right:859px;top:39.5px;font-size:11px;color:#3e4248;white-space:pre">0.    0</div>
<div class="t" style="right:836.5px;top:54.5px;font-size:11.5px;color:#e0e4e8;white-space:pre">129.  1.  1.    0</div>
<div class="t" style="right:859px;top:68.5px;font-size:11px;color:#3e4248;white-space:pre">0.    0</div>
<div style="left:1065.5px;top:38.5px;width:18.5px;height:12.7px;background:linear-gradient(#5e646c,#4c525a);border-radius:1px"><svg style="left:0;top:0" width="19" height="13"><path d="M3 3v7M6 3v7" stroke="#e4e8ec" stroke-width="1.4"/><path d="M9.5 2.5v8l6.5-4z" fill="none" stroke="#e4e8ec" stroke-width="1.2"/></svg></div>
<div style="left:1065.5px;top:67.8px;width:18.5px;height:12.5px;background:linear-gradient(#5e646c,#4c525a);border-radius:1px"><svg style="left:0;top:0" width="19" height="13"><rect x="2.5" y="3" width="6" height="6.5" fill="none" stroke="#e4e8ec" stroke-width="1.3"/><path d="M12 3v7M15.5 3v7" stroke="#e4e8ec" stroke-width="1.4"/></svg></div>
<div style="left:1090px;top:23px;width:266px;height:28.5px;background:#030405;border-radius:4px;border:1px solid #1a1c20"></div>
<svg style="left:1092px;top:25px" width="34" height="26"><path d="M2 6.5h7M5.5 3v7" stroke="#d8dce0" stroke-width="1.4"/><path d="M2.5 15.5h5" stroke="#8a8e94" stroke-width="1.4"/><rect x="2" y="20" width="29.5" height="3.8" rx="1" fill="#56e6a6"/></svg>
<div class="t" style="left:1132.5px;top:27.5px;font-size:15.5px;color:#f0f2f4;white-space:pre;letter-spacing:-0.1px">34.  6.  2.    6</div>
<svg style="left:1226px;top:25px" width="26" height="24"><ellipse cx="6.5" cy="17" rx="3.2" ry="2.4" fill="#c8ccd0" transform="rotate(-20 6.5 17)"/><path d="M9.3 16.5V4" stroke="#c8ccd0" stroke-width="1.3"/><path d="M19.5 3v17M17.5 5.5l2-3l2 3M17.5 17.5l2 3l2-3" fill="none" stroke="#8a8e94" stroke-width="1.1"/></svg>
<div class="t" style="left:1274.5px;top:29.5px;font-size:12px;color:#8a8e94">0:01:07.842</div>
<svg style="left:1339px;top:28px" width="14" height="14"><circle cx="7" cy="7" r="5" fill="#9a9ea4"/><path d="M7 7V3.6M7 7h3" stroke="#0a0a0a" stroke-width="1.3"/></svg>
<div style="left:1091.3px;top:53px;width:262px;height:27.5px;background:#16181c;border-radius:5px;border:1px solid #50555c"></div>
<div style="left:1093px;top:56px;width:18px;height:22px;background:linear-gradient(#e6e8ea,#cdd0d3 50%,#b2b6ba)"><svg style="left:0;top:0" width="18" height="22"><path d="M4.5 6.8v8.4" stroke="#111418" stroke-width="1.8"/><path d="M13.6 6.6v8.8l-7-4.4z" fill="#111418"/></svg></div>
<div style="left:1112px;top:56px;width:18px;height:22px;background:linear-gradient(#e6e8ea,#cdd0d3 50%,#b2b6ba)"><svg style="left:0;top:0" width="18" height="22"><path d="M13.5 6.8v8.4" stroke="#111418" stroke-width="1.8"/><path d="M4.4 6.6v8.8l7-4.4z" fill="#111418"/></svg></div>
<div style="left:1131px;top:56px;width:35.5px;height:22px;background:linear-gradient(#e6e8ea,#cdd0d3 50%,#b2b6ba)"><svg style="left:0;top:0" width="35.5" height="22"><path d="M17.35 6.8v8.4l-7.2-4.2zM24.75 6.8v8.4l-7.2-4.2z" fill="#111418"/></svg></div>
<div style="left:1167.7px;top:56px;width:36px;height:22px;background:linear-gradient(#e6e8ea,#cdd0d3 50%,#b2b6ba)"><svg style="left:0;top:0" width="36" height="22"><path d="M18.4 6.8v8.4l7.2-4.2zM11.0 6.8v8.4l7.2-4.2z" fill="#111418"/></svg></div>
<div style="left:1204.7px;top:56px;width:35.6px;height:22px;background:linear-gradient(#e6e8ea,#cdd0d3 50%,#b2b6ba)"><svg style="left:0;top:0" width="35.6" height="22"><path d="M15.8 14.4a7.6 3.9 0 1 1 5 -0.4" fill="none" stroke="#111418" stroke-width="1.6"/><path d="M17.6 11.4l-3.4 3l4.6 2.4z" fill="#111418"/></svg></div>
<div style="left:1241.7px;top:56px;width:36px;height:22px;background:linear-gradient(#ffffff,#eceeef 50%,#dcdfe2)"><svg style="left:0;top:0" width="36" height="22"><rect x="13.8" y="6.8" width="8.4" height="8.4" fill="#111418"/></svg></div>
<div style="left:1279px;top:56px;width:36px;height:22px;background:linear-gradient(#e6e8ea,#cdd0d3 50%,#b2b6ba)"><svg style="left:0;top:0" width="36" height="22"><path d="M14.4 6.2v9.6l8.4-4.8z" fill="#111418"/></svg></div>
<div style="left:1316.3px;top:56px;width:36px;height:22px;background:linear-gradient(#e6e8ea,#cdd0d3 50%,#b2b6ba)"><svg style="left:0;top:0" width="36" height="22"><circle cx="18.0" cy="11.0" r="4.4" fill="#111418"/></svg></div>
<div style="left:1359.7px;top:22.5px;width:114.5px;height:30px;background:#030405;border-radius:4px;border:1px solid #1a1c20"></div>
<svg style="left:1412px;top:28px" width="62" height="20"><path d="M54 2.5h6l-3 3.4z" fill="#70767c"/><path d="M3 14.5h6l-3 3.4z" fill="#5a6066"/></svg>
<div style="left:1362.5px;top:54.5px;width:109.5px;height:25.5px;background:#33373c;border-radius:3px"></div>
<div style="left:1364px;top:56.3px;width:17.3px;height:22.3px;background:linear-gradient(#565a60,#484c52);border-radius:1px"><svg style="left:0;top:0" width="17.3" height="22"><path d="M5 10.5h7l-3.5-4zM5 12h7v3H5z" fill="#32363b"/></svg></div>
<div style="left:1382.8px;top:56.3px;width:17.3px;height:22.3px;background:linear-gradient(#565a60,#484c52);border-radius:1px"><svg style="left:0;top:0" width="17.3" height="22"><path d="M5 11h7l-3.5 4.5zM5 9.5h7M8.5 5v4" stroke="#32363b" stroke-width="1.2" fill="#32363b"/></svg></div>
<div style="left:1401.4px;top:56.3px;width:17.3px;height:22.3px;background:linear-gradient(#565a60,#484c52);border-radius:1px"><svg style="left:0;top:0" width="17.3" height="22"><path d="M11.5 6v6l-5-3zM6.5 14h5.5v2.5H6.5z" fill="#32363b"/></svg></div>
<div style="left:1420px;top:56.3px;width:17.3px;height:22.3px;background:linear-gradient(#565a60,#484c52);border-radius:1px"><svg style="left:0;top:0" width="17.3" height="22"><path d="M6 6v6l5-3zM6 14h5.5v2.5H6z" fill="#32363b"/></svg></div>
<div style="left:1438.6px;top:56.3px;width:32px;height:22.3px;background:linear-gradient(#565a60,#484c52);border-radius:1px"><svg style="left:0;top:0" width="32" height="22"><path d="M6 12.5h16M6 12.5l4-3v6zM12 8.5h12" stroke="#32363b" stroke-width="1.8" fill="#32363b"/></svg></div>
<div style="left:1479.7px;top:22.5px;width:110px;height:59px;background:#030405;border-radius:4px;border:1px solid #1a1c20"></div>
<div style="left:1481px;top:25.2px;width:33.5px;height:11.8px;background:linear-gradient(#eceeef,#d4d7da);border-radius:1px"></div>
<div class="t" style="left:1484.5px;top:26.3px;font-size:9.5px;color:#202428;letter-spacing:-0.2px">CLICK</div>
<div class="t" style="left:1518.5px;top:26.8px;font-size:9px;color:#d4d8dc">ON</div>
<div style="left:1569.7px;top:25.2px;width:18.5px;height:11.8px;background:linear-gradient(#5e646c,#4c525a);border-radius:1px"><svg style="left:0;top:0" width="19" height="12"><path d="M3 2.5v7M5.6 2.5v7" stroke="#c8ccd0" stroke-width="1.2"/><path d="M12.5 2v8M8.5 6h8M9.7 3.2l5.6 5.6M15.3 3.2l-5.6 5.6" stroke="#c8ccd0" stroke-width="1.1"/></svg></div>
<div style="left:1481px;top:40.6px;width:33.5px;height:11.6px;background:linear-gradient(#5e646c,#4c525a);border-radius:1px"></div>
<div class="t" style="left:1482.5px;top:41.8px;font-size:9.5px;color:#e8ecf0;letter-spacing:-0.5px">TEMPO</div>
<div class="t" style="left:1518.5px;top:42.3px;font-size:9px;color:#d4d8dc;letter-spacing:-0.2px">FIXED</div>
<div class="t" style="right:332px;top:40.5px;font-size:11.5px;color:#6a6e74;white-space:pre">6/8</div>
<div class="t" style="right:331.5px;top:53px;font-size:11.5px;color:#e4e8ec;white-space:pre">90.000</div>
<div style="left:1481px;top:64.5px;width:107px;height:1px;background:#1c1e22"></div>
<div style="left:1481px;top:68.4px;width:33.5px;height:11.4px;background:linear-gradient(#5e646c,#4c525a);border-radius:1px"></div>
<div class="t" style="left:1485px;top:69.4px;font-size:9.5px;color:#e8ecf0">SYNC</div>
<div class="t" style="left:1518.5px;top:70px;font-size:9px;color:#d4d8dc">INT.</div>
<div class="t" style="left:1568px;top:69.8px;font-size:8.5px;color:#3e4248">高级</div>
<div style="left:1594px;top:22.5px;width:15.3px;height:59px;background:#030405;border-radius:4px;border:1px solid #1a1c20"></div>
<div style="left:1614px;top:22.5px;width:39.5px;height:59px;background:#030405;border-radius:4px;border:1px solid #1a1c20"></div>
<div style="left:1615.8px;top:25.2px;width:16px;height:11px;background:#fa1018"></div>
<div style="left:1634.5px;top:25.2px;width:16px;height:11px;background:#15100c"></div>
<div style="left:1616.5px;top:43.3px;width:14px;height:1.2px;background:#3a4a44"></div>
<div style="left:1635.5px;top:43.3px;width:14px;height:1.2px;background:#3a4a44"></div>
<div style="left:1617px;top:60px;width:6.4px;height:19px;background:linear-gradient(#38e0c8,#30c8f0)"></div>
<div style="left:1625.5px;top:77.5px;width:4px;height:1.5px;background:#3090a8"></div>
<div style="left:1636.6px;top:53.4px;width:6.2px;height:25.6px;background:linear-gradient(#38e0c8,#30c8f0)"></div>
<div style="left:1643.6px;top:53.4px;width:6.2px;height:25.6px;background:linear-gradient(#38e0c8,#30c8f0)"></div>
<div style="left:1661.5px;top:27px;width:1.2px;height:50px;background:#6a6e74"></div>
<div style="left:1658.8px;top:38px;width:6.6px;height:6.6px;background:#f4f6f8;border-radius:50%"></div>
<div style="left:1671.5px;top:20px;width:1px;height:63px;background:#30343a"></div>
<svg style="left:1674px;top:26px" width="10" height="6"><path d="M1 5h7L4.5 1z" fill="#8a9098"/></svg>
</div></body></html>
